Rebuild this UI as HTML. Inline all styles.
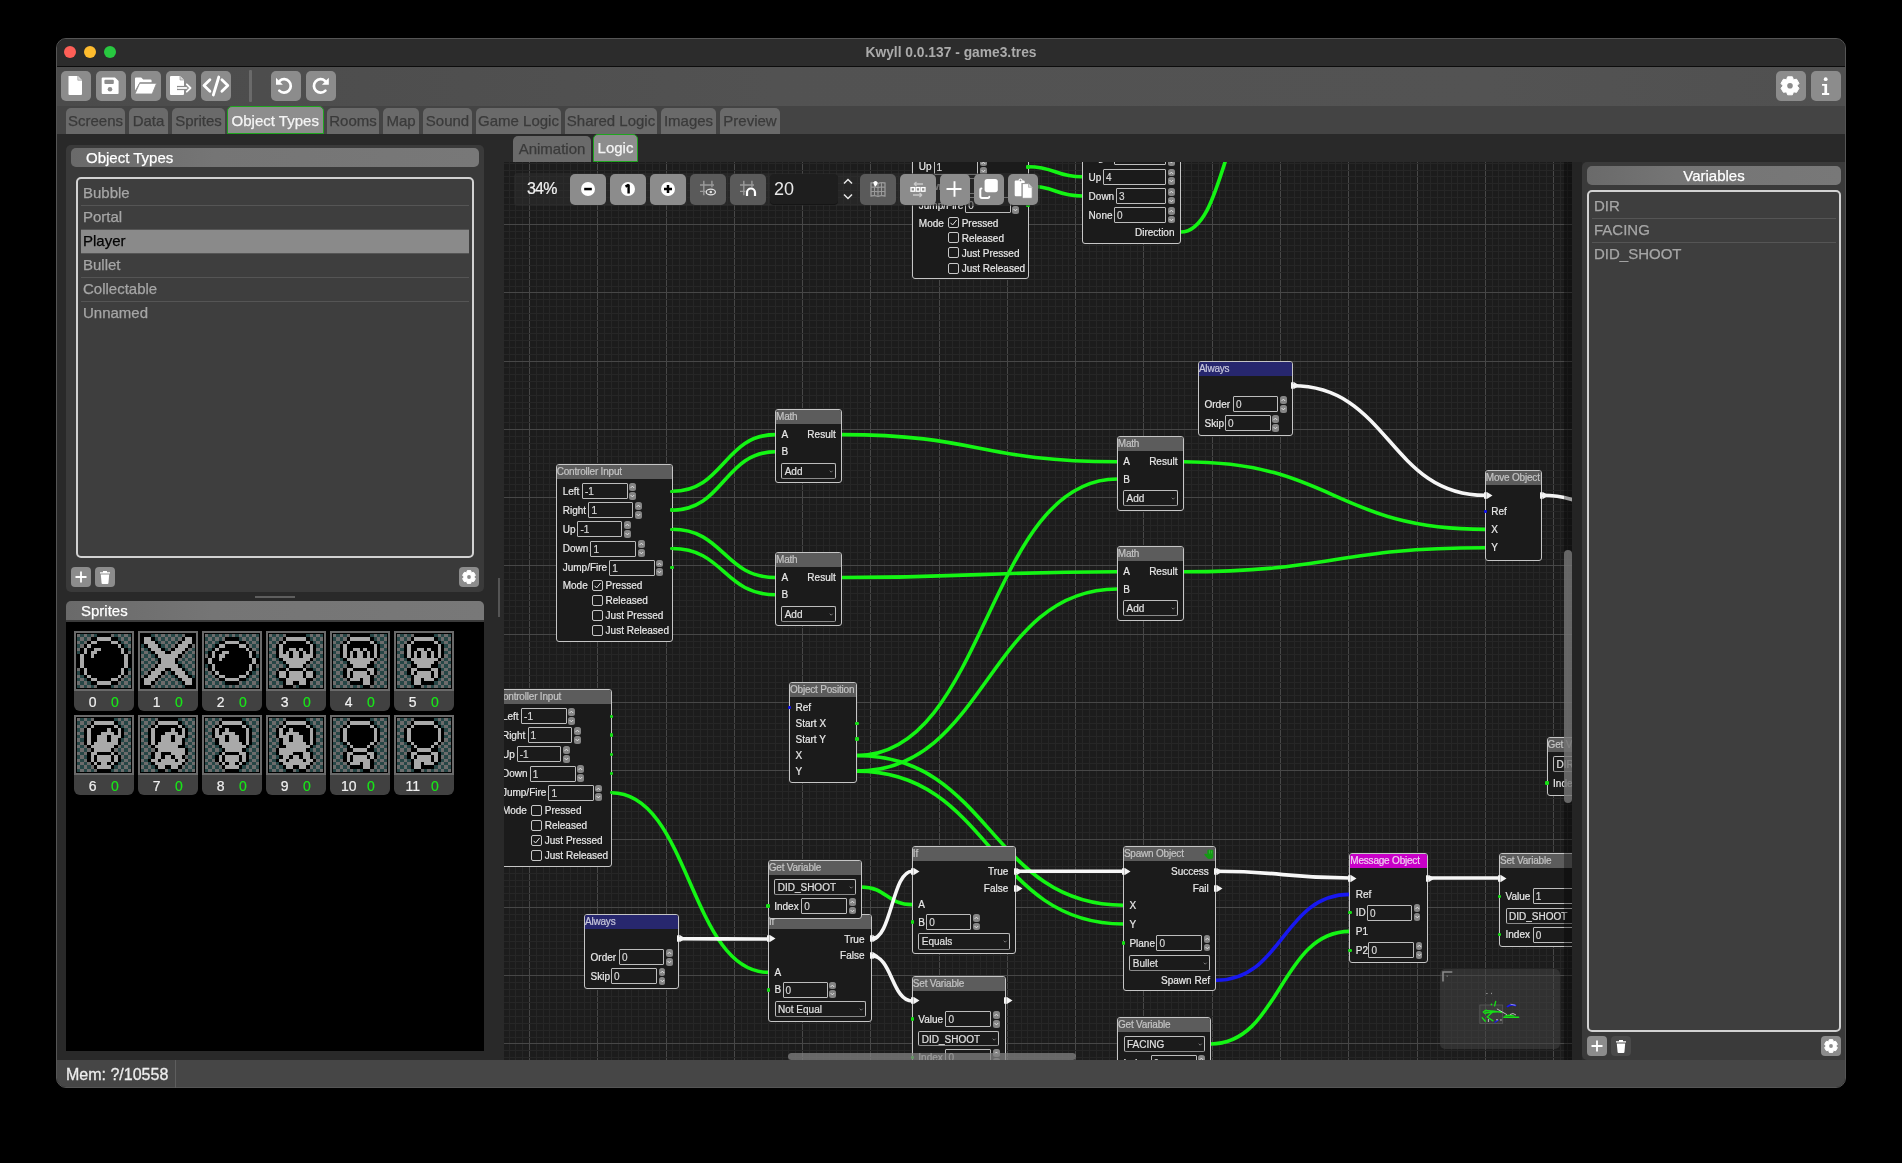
<!DOCTYPE html><html><head><meta charset="utf-8"><style>
*{box-sizing:border-box;margin:0;padding:0}
html,body{width:1902px;height:1163px;background:#000;overflow:hidden;font-family:"Liberation Sans",sans-serif}
.a{position:absolute}
.btn{position:absolute;background:#8b8b8b;border-radius:5px}
.tab{position:absolute;top:108px;height:26px;background:#6a6a6a;border-radius:5px 5px 0 0;color:#3a3a3a;font-size:15px;line-height:26px;text-align:center;white-space:nowrap;-webkit-text-stroke:0.25px currentColor}
.tab.sel{background:#8d8d8d;color:#f4f4f4;border:1px solid #1fa51f;line-height:24px}
.hdr{position:absolute;height:19px;border-radius:5px;background:linear-gradient(90deg,#6a6a6a,#757575 35%,#787878);color:#fff;font-size:15px;line-height:19px;white-space:nowrap;-webkit-text-stroke:0.25px currentColor}
.li{position:absolute;height:24px;font-size:15px;line-height:24px;color:#a6a6a6;white-space:nowrap;-webkit-text-stroke:0.25px currentColor}
.sep{position:absolute;height:1px;background:#555}
.node{position:absolute;background:#1b1b1b;border:1px solid #c6c6c6;border-radius:3px;font-size:10px;color:#e8e8e8;white-space:nowrap;-webkit-text-stroke:0.2px currentColor}
.tt{position:absolute;left:0;top:0;right:0;height:14px;background:#5c5c5c;color:#c4c4c4;line-height:13px;padding-left:0;border-radius:2px 2px 0 0;overflow:hidden;letter-spacing:-0.2px}
.lb{position:absolute;line-height:12px;height:12px}
.fld{position:absolute;border:1px solid #bdbdbd;border-radius:1px;background:#1b1b1b;line-height:15px;padding-left:2px;color:#d8d8d8}
.dd{position:absolute;border:1px solid #bdbdbd;border-bottom-color:#8a8a8a;border-radius:2px;background:#1b1b1b;line-height:15px;padding-left:2.5px;color:#e0e0e0}
.spu,.spd{position:absolute;width:6.8px;height:7.8px;background:#858585;border-radius:2.5px}
.cb{position:absolute;width:11px;height:11px;border:1px solid #c8c8c8;border-radius:2px}
.pd{position:absolute;width:3.6px;height:3.6px;border-radius:1.2px;background:#16e016}
</style></head><body><div id="root" class="a" style="left:0;top:0;width:1902px;height:1163px;will-change:transform">
<div class="a" style="left:56px;top:38px;width:1790px;height:1050px;border-radius:10px;background:#292929;border:1px solid #555"></div>
<div class="a" style="left:57px;top:39px;width:1788px;height:27px;border-radius:9px 9px 0 0;background:#2c2c2c"></div>
<div class="a" style="left:57px;top:66px;width:1788px;height:1px;background:#0c0c0c"></div>
<div class="a" style="left:64px;top:46px;width:12px;height:12px;border-radius:6px;background:#fe5f57"></div>
<div class="a" style="left:84px;top:46px;width:12px;height:12px;border-radius:6px;background:#febc2e"></div>
<div class="a" style="left:104px;top:46px;width:12px;height:12px;border-radius:6px;background:#28c840"></div>
<div class="a" style="left:765px;top:44px;width:372px;text-align:center;font-size:13.8px;font-weight:bold;color:#ababab;line-height:17px">Kwyll 0.0.137 - game3.tres</div>
<div class="a" style="left:57px;top:67px;width:1788px;height:39px;background:linear-gradient(90deg,#4b4b4b,#525252 40%,#535353 80%,#505050)"></div>
<div class="a" style="left:57px;top:106px;width:1788px;height:28px;background:#444"></div>
<div class="a" style="left:57px;top:1060px;width:1788px;height:27px;background:#464646;border-radius:0 0 9px 9px"></div>
<div class="a" style="left:66px;top:1061px;height:27px;line-height:27px;font-size:16px;color:#ececec;-webkit-text-stroke:0.3px #ececec">Mem: ?/10558</div>
<div class="a" style="left:175px;top:1060px;width:1px;height:28px;background:#5e5e5e"></div>
<div class="a" style="left:61px;top:71px;width:30px;height:30px;background:#8c8c8c;border-radius:5px"><svg width="30" height="30" style="position:absolute;left:0;top:0"><path d="M7.5 5 H16.8 L21 9.2 V23 Q21 24 20 24 H8.5 Q7.5 24 7.5 23 Z" fill="#fff"/><path d="M16.8 5 V9.2 H21" fill="#d8d8d8" stroke="#9a9a9a" stroke-width="0.7"/></svg></div>
<div class="a" style="left:96px;top:71px;width:30px;height:30px;background:#8c8c8c;border-radius:5px"><svg width="30" height="30" style="position:absolute;left:0;top:0"><path d="M5.7 7.5 Q5.7 6.5 6.7 6.5 H19 L22.6 10.1 V22 Q22.6 23 21.6 23 H6.7 Q5.7 23 5.7 22 Z" fill="#fff"/><rect x="8.4" y="8.8" width="9.4" height="4.3" rx="1" fill="#8c8c8c"/><circle cx="14" cy="18.3" r="2.3" fill="#8c8c8c"/></svg></div>
<div class="a" style="left:131px;top:71px;width:30px;height:30px;background:#8c8c8c;border-radius:5px"><svg width="30" height="30" style="position:absolute;left:0;top:0"><path d="M4 7.6 Q4 6.5 5 6.5 H10.2 L12.2 8.5 H19.5 Q20.6 8.5 20.6 9.6 V11.2 H8.8 L4 19.5 Z" fill="#fff"/><path d="M8.6 12.3 H25.6 L21.2 23 H3.9 Z" fill="#fff" stroke="#8c8c8c" stroke-width="0.9" stroke-linejoin="round"/></svg></div>
<div class="a" style="left:166px;top:71px;width:30px;height:30px;background:#8c8c8c;border-radius:5px"><svg width="30" height="30" style="position:absolute;left:0;top:0"><path d="M4 6 Q4 5 5 5 H14 L18 9 V23 Q18 24 17 24 H5 Q4 24 4 23 Z" fill="#fff"/><path d="M14 5 V9 H18" fill="#d8d8d8" stroke="#9a9a9a" stroke-width="0.7"/><path d="M11 17 H24.5" stroke="#8c8c8c" stroke-width="4.2"/><path d="M11.2 17 H24" stroke="#fff" stroke-width="1.8"/><path d="M20.8 13.3 L24.5 17 L20.8 20.7" stroke="#8c8c8c" stroke-width="4" fill="none"/><path d="M20.8 13.3 L24.5 17 L20.8 20.7" stroke="#fff" stroke-width="1.8" fill="none" stroke-linecap="round" stroke-linejoin="round"/></svg></div>
<div class="a" style="left:201px;top:71px;width:30px;height:30px;background:#8c8c8c;border-radius:5px"><svg width="30" height="30" style="position:absolute;left:0;top:0"><path d="M8.9 8.8 L3 14.5 L8.9 20.2 M20.9 8.8 L26.8 14.5 L20.9 20.2 M17.8 6 L12.3 24" stroke="#fff" stroke-width="2.8" fill="none" stroke-linecap="round" stroke-linejoin="round"/></svg></div>
<div class="a" style="left:249px;top:70px;width:3px;height:32px;background:#6a6a6a;border-radius:1px"></div>
<div class="a" style="left:271px;top:71px;width:30px;height:30px;background:#8c8c8c;border-radius:5px"><svg width="30" height="30" style="position:absolute;left:0;top:0"><path d="M8.3 19.6 A6.7 6.7 0 1 0 8.6 9.9" stroke="#fff" stroke-width="2.7" fill="none" stroke-linecap="round"/><path d="M5 6.8 V13.7 H11.9 Z" fill="#fff"/></svg></div>
<div class="a" style="left:306px;top:71px;width:30px;height:30px;background:#8c8c8c;border-radius:5px"><svg width="30" height="30" style="position:absolute;left:0;top:0"><path d="M19.4 19.6 A6.7 6.7 0 1 1 19.1 9.9" stroke="#fff" stroke-width="2.7" fill="none" stroke-linecap="round"/><path d="M22.8 6.8 V13.7 H15.9 Z" fill="#fff"/></svg></div>
<div class="a" style="left:1776px;top:71px;width:30px;height:30px;background:#8c8c8c;border-radius:5px"><svg width="30" height="30" style="position:absolute;left:0;top:0"><path d="M10.66 8.42 L11.61 5.81 L16.39 5.81 L17.34 8.42 L17.85 8.72 L20.59 8.23 L22.98 12.38 L21.19 14.51 L21.19 15.09 L22.98 17.22 L20.59 21.37 L17.85 20.88 L17.34 21.18 L16.39 23.79 L11.61 23.79 L10.66 21.18 L10.15 20.88 L7.41 21.37 L5.02 17.22 L6.81 15.09 L6.81 14.51 L5.02 12.38 L7.41 8.23 L10.15 8.72 Z" fill="#fff" stroke="#fff" stroke-width="1" stroke-linejoin="round"/><circle cx="14" cy="14.8" r="2.8" fill="#8c8c8c"/></svg></div>
<div class="a" style="left:1811px;top:71px;width:30px;height:30px;background:#8c8c8c;border-radius:5px"><svg width="30" height="30" style="position:absolute;left:0;top:0"><circle cx="14.7" cy="8.2" r="1.9" fill="#fff"/><path d="M11 12.9 H16.1 V22 H18.2 V24 H11 V22 H13.4 V14.8 H11 Z" fill="#fff"/></svg></div>
<div class="tab" style="left:66px;width:59px">Screens</div>
<div class="tab" style="left:129px;width:39px">Data</div>
<div class="tab" style="left:172px;width:53px">Sprites</div>
<div class="tab sel" style="left:226.5px;width:97.5px;top:106px;height:28px;line-height:27px">Object Types</div>
<div class="tab" style="left:327px;width:52px">Rooms</div>
<div class="tab" style="left:383px;width:36px">Map</div>
<div class="tab" style="left:423px;width:49px">Sound</div>
<div class="tab" style="left:476px;width:85px">Game Logic</div>
<div class="tab" style="left:565px;width:92px">Shared Logic</div>
<div class="tab" style="left:661px;width:55px">Images</div>
<div class="tab" style="left:720px;width:60px">Preview</div>
<div class="tab" style="left:513px;top:136px;width:78px">Animation</div>
<div class="tab sel" style="left:593px;top:134px;width:45px;height:28px;line-height:26px">Logic</div>
<div class="a" style="left:66px;top:145px;width:418px;height:447px;background:#3a3a3a;border-radius:5px"></div>
<div class="hdr" style="left:71px;top:148px;width:408px;padding-left:15px">Object Types</div>
<div class="a" style="left:76px;top:177px;width:398px;height:381px;border:2px solid #d2d2d2;border-radius:5px;background:#3e3e3e"></div>
<div class="li" style="left:83px;top:181px">Bubble</div>
<div class="sep" style="left:81px;top:205px;width:388px"></div>
<div class="li" style="left:83px;top:205px">Portal</div>
<div class="sep" style="left:81px;top:229px;width:388px"></div>
<div class="a" style="left:81px;top:230px;width:388px;height:23px;background:#8a8a8a"></div>
<div class="li" style="left:83px;top:229px;color:#050505">Player</div>
<div class="sep" style="left:81px;top:253px;width:388px"></div>
<div class="li" style="left:83px;top:253px">Bullet</div>
<div class="sep" style="left:81px;top:277px;width:388px"></div>
<div class="li" style="left:83px;top:277px">Collectable</div>
<div class="sep" style="left:81px;top:301px;width:388px"></div>
<div class="li" style="left:83px;top:301px">Unnamed</div>
<div class="a" style="left:71px;top:567px;width:20px;height:20px;background:#8c8c8c;border-radius:4px"><svg width="20" height="20" style="position:absolute;left:0;top:0"><path d="M10 4.5 V15.5 M4.5 10 H15.5" stroke="#fff" stroke-width="1.8"/></svg></div>
<div class="a" style="left:95px;top:567px;width:20px;height:20px;background:#8c8c8c;border-radius:4px"><svg width="20" height="20" style="position:absolute;left:0;top:0"><path d="M5 5.2 H15 V6.6 H5 Z M8 4 H12 V5.2 H8 Z" fill="#fff"/><path d="M5.8 7.4 H14.2 L13.4 16.2 Q13.3 17 12.5 17 H7.5 Q6.7 17 6.6 16.2 Z" fill="#fff"/></svg></div>
<div class="a" style="left:459px;top:567px;width:20px;height:20px;background:#8c8c8c;border-radius:4px"><svg width="20" height="20" style="position:absolute;left:0;top:0"><path d="M7.63 5.48 L8.30 3.62 L11.70 3.62 L12.37 5.48 L12.73 5.69 L14.67 5.34 L16.37 8.28 L15.10 9.79 L15.10 10.21 L16.37 11.72 L14.67 14.66 L12.73 14.31 L12.37 14.52 L11.70 16.38 L8.30 16.38 L7.63 14.52 L7.27 14.31 L5.33 14.66 L3.63 11.72 L4.90 10.21 L4.90 9.79 L3.63 8.28 L5.33 5.34 L7.27 5.69 Z" fill="#fff" stroke="#fff" stroke-width="1" stroke-linejoin="round"/><circle cx="10" cy="10" r="1.9" fill="#8c8c8c"/></svg></div>
<div class="a" style="left:255px;top:596px;width:40px;height:2px;background:#5e5e5e"></div>
<div class="a" style="left:498px;top:578px;width:2px;height:39px;background:#555"></div>
<div class="hdr" style="left:66px;top:601px;width:418px;padding-left:15px;border-radius:5px 5px 0 0">Sprites</div>
<div class="a" style="left:66px;top:620px;width:418px;height:2px;background:#3a3a3a"></div>
<div class="a" style="left:66px;top:622px;width:418px;height:429px;background:#000"></div>
<div class="a" style="left:74px;top:631px;width:60px;height:60px;background:#6a6a6a"><div class="a" style="left:2px;top:2px;width:56px;height:56px;background:#000"></div><svg width="54" height="54" shape-rendering="crispEdges" style="position:absolute;left:3px;top:3px"><rect x="0" y="0" width="3" height="3" fill="#6c6c6c"/><rect x="3" y="0" width="4" height="3" fill="#264646"/><rect x="7" y="0" width="3" height="3" fill="#6c6c6c"/><rect x="10" y="0" width="4" height="3" fill="#264646"/><rect x="14" y="0" width="3" height="3" fill="#6c6c6c"/><rect x="17" y="0" width="3" height="3" fill="#264646"/><rect x="20" y="0" width="14" height="3" fill="#000"/><rect x="34" y="0" width="3" height="3" fill="#6c6c6c"/><rect x="37" y="0" width="4" height="3" fill="#264646"/><rect x="41" y="0" width="3" height="3" fill="#6c6c6c"/><rect x="44" y="0" width="3" height="3" fill="#264646"/><rect x="47" y="0" width="4" height="3" fill="#6c6c6c"/><rect x="51" y="0" width="3" height="3" fill="#264646"/><rect x="0" y="3" width="3" height="4" fill="#264646"/><rect x="3" y="3" width="4" height="4" fill="#6c6c6c"/><rect x="7" y="3" width="3" height="4" fill="#264646"/><rect x="10" y="3" width="4" height="4" fill="#6c6c6c"/><rect x="14" y="3" width="6" height="4" fill="#000"/><rect x="20" y="3" width="14" height="4" fill="#a9a9a9"/><rect x="34" y="3" width="7" height="4" fill="#000"/><rect x="41" y="3" width="3" height="4" fill="#264646"/><rect x="44" y="3" width="3" height="4" fill="#6c6c6c"/><rect x="47" y="3" width="4" height="4" fill="#264646"/><rect x="51" y="3" width="3" height="4" fill="#6c6c6c"/><rect x="0" y="7" width="3" height="3" fill="#6c6c6c"/><rect x="3" y="7" width="4" height="3" fill="#264646"/><rect x="7" y="7" width="3" height="3" fill="#6c6c6c"/><rect x="10" y="7" width="4" height="3" fill="#000"/><rect x="14" y="7" width="6" height="3" fill="#a9a9a9"/><rect x="20" y="7" width="14" height="3" fill="#000"/><rect x="34" y="7" width="7" height="3" fill="#a9a9a9"/><rect x="41" y="7" width="3" height="3" fill="#000"/><rect x="44" y="7" width="3" height="3" fill="#264646"/><rect x="47" y="7" width="4" height="3" fill="#6c6c6c"/><rect x="51" y="7" width="3" height="3" fill="#264646"/><rect x="0" y="10" width="3" height="4" fill="#264646"/><rect x="3" y="10" width="4" height="4" fill="#6c6c6c"/><rect x="7" y="10" width="3" height="4" fill="#000"/><rect x="10" y="10" width="4" height="4" fill="#a9a9a9"/><rect x="14" y="10" width="27" height="4" fill="#000"/><rect x="41" y="10" width="3" height="4" fill="#a9a9a9"/><rect x="44" y="10" width="3" height="4" fill="#000"/><rect x="47" y="10" width="4" height="4" fill="#264646"/><rect x="51" y="10" width="3" height="4" fill="#6c6c6c"/><rect x="0" y="14" width="3" height="3" fill="#6c6c6c"/><rect x="3" y="14" width="4" height="3" fill="#000"/><rect x="7" y="14" width="3" height="3" fill="#a9a9a9"/><rect x="10" y="14" width="7" height="3" fill="#000"/><rect x="17" y="14" width="7" height="3" fill="#a9a9a9"/><rect x="24" y="14" width="20" height="3" fill="#000"/><rect x="44" y="14" width="3" height="3" fill="#a9a9a9"/><rect x="47" y="14" width="4" height="3" fill="#000"/><rect x="51" y="14" width="3" height="3" fill="#264646"/><rect x="0" y="17" width="3" height="3" fill="#264646"/><rect x="3" y="17" width="4" height="3" fill="#000"/><rect x="7" y="17" width="3" height="3" fill="#a9a9a9"/><rect x="10" y="17" width="4" height="3" fill="#000"/><rect x="14" y="17" width="6" height="3" fill="#a9a9a9"/><rect x="20" y="17" width="24" height="3" fill="#000"/><rect x="44" y="17" width="3" height="3" fill="#a9a9a9"/><rect x="47" y="17" width="4" height="3" fill="#000"/><rect x="51" y="17" width="3" height="3" fill="#6c6c6c"/><rect x="0" y="20" width="3" height="4" fill="#000"/><rect x="3" y="20" width="4" height="4" fill="#a9a9a9"/><rect x="7" y="20" width="7" height="4" fill="#000"/><rect x="14" y="20" width="3" height="4" fill="#a9a9a9"/><rect x="17" y="20" width="30" height="4" fill="#000"/><rect x="47" y="20" width="4" height="4" fill="#a9a9a9"/><rect x="51" y="20" width="3" height="4" fill="#000"/><rect x="0" y="24" width="3" height="3" fill="#000"/><rect x="3" y="24" width="4" height="3" fill="#a9a9a9"/><rect x="7" y="24" width="40" height="3" fill="#000"/><rect x="47" y="24" width="4" height="3" fill="#a9a9a9"/><rect x="51" y="24" width="3" height="3" fill="#000"/><rect x="0" y="27" width="3" height="3" fill="#000"/><rect x="3" y="27" width="4" height="3" fill="#a9a9a9"/><rect x="7" y="27" width="40" height="3" fill="#000"/><rect x="47" y="27" width="4" height="3" fill="#a9a9a9"/><rect x="51" y="27" width="3" height="3" fill="#000"/><rect x="0" y="30" width="3" height="4" fill="#000"/><rect x="3" y="30" width="4" height="4" fill="#a9a9a9"/><rect x="7" y="30" width="40" height="4" fill="#000"/><rect x="47" y="30" width="4" height="4" fill="#a9a9a9"/><rect x="51" y="30" width="3" height="4" fill="#000"/><rect x="0" y="34" width="3" height="3" fill="#6c6c6c"/><rect x="3" y="34" width="4" height="3" fill="#000"/><rect x="7" y="34" width="3" height="3" fill="#a9a9a9"/><rect x="10" y="34" width="34" height="3" fill="#000"/><rect x="44" y="34" width="3" height="3" fill="#a9a9a9"/><rect x="47" y="34" width="4" height="3" fill="#000"/><rect x="51" y="34" width="3" height="3" fill="#264646"/><rect x="0" y="37" width="3" height="4" fill="#264646"/><rect x="3" y="37" width="4" height="4" fill="#000"/><rect x="7" y="37" width="3" height="4" fill="#a9a9a9"/><rect x="10" y="37" width="34" height="4" fill="#000"/><rect x="44" y="37" width="3" height="4" fill="#a9a9a9"/><rect x="47" y="37" width="4" height="4" fill="#000"/><rect x="51" y="37" width="3" height="4" fill="#6c6c6c"/><rect x="0" y="41" width="3" height="3" fill="#6c6c6c"/><rect x="3" y="41" width="4" height="3" fill="#264646"/><rect x="7" y="41" width="3" height="3" fill="#000"/><rect x="10" y="41" width="4" height="3" fill="#a9a9a9"/><rect x="14" y="41" width="27" height="3" fill="#000"/><rect x="41" y="41" width="3" height="3" fill="#a9a9a9"/><rect x="44" y="41" width="3" height="3" fill="#000"/><rect x="47" y="41" width="4" height="3" fill="#6c6c6c"/><rect x="51" y="41" width="3" height="3" fill="#264646"/><rect x="0" y="44" width="3" height="3" fill="#264646"/><rect x="3" y="44" width="4" height="3" fill="#6c6c6c"/><rect x="7" y="44" width="3" height="3" fill="#264646"/><rect x="10" y="44" width="4" height="3" fill="#000"/><rect x="14" y="44" width="6" height="3" fill="#a9a9a9"/><rect x="20" y="44" width="14" height="3" fill="#000"/><rect x="34" y="44" width="7" height="3" fill="#a9a9a9"/><rect x="41" y="44" width="3" height="3" fill="#000"/><rect x="44" y="44" width="3" height="3" fill="#6c6c6c"/><rect x="47" y="44" width="4" height="3" fill="#264646"/><rect x="51" y="44" width="3" height="3" fill="#6c6c6c"/><rect x="0" y="47" width="3" height="4" fill="#6c6c6c"/><rect x="3" y="47" width="4" height="4" fill="#264646"/><rect x="7" y="47" width="3" height="4" fill="#6c6c6c"/><rect x="10" y="47" width="4" height="4" fill="#264646"/><rect x="14" y="47" width="6" height="4" fill="#000"/><rect x="20" y="47" width="14" height="4" fill="#a9a9a9"/><rect x="34" y="47" width="7" height="4" fill="#000"/><rect x="41" y="47" width="3" height="4" fill="#6c6c6c"/><rect x="44" y="47" width="3" height="4" fill="#264646"/><rect x="47" y="47" width="4" height="4" fill="#6c6c6c"/><rect x="51" y="47" width="3" height="4" fill="#264646"/><rect x="0" y="51" width="3" height="3" fill="#264646"/><rect x="3" y="51" width="4" height="3" fill="#6c6c6c"/><rect x="7" y="51" width="3" height="3" fill="#264646"/><rect x="10" y="51" width="4" height="3" fill="#6c6c6c"/><rect x="14" y="51" width="3" height="3" fill="#264646"/><rect x="17" y="51" width="3" height="3" fill="#6c6c6c"/><rect x="20" y="51" width="14" height="3" fill="#000"/><rect x="34" y="51" width="3" height="3" fill="#264646"/><rect x="37" y="51" width="4" height="3" fill="#6c6c6c"/><rect x="41" y="51" width="3" height="3" fill="#264646"/><rect x="44" y="51" width="3" height="3" fill="#6c6c6c"/><rect x="47" y="51" width="4" height="3" fill="#264646"/><rect x="51" y="51" width="3" height="3" fill="#6c6c6c"/></svg></div>
<div class="a" style="left:74px;top:691px;width:60px;height:20px;background:#414141;border-radius:0 0 6px 6px;font-size:14px;line-height:22px;white-space:nowrap;-webkit-text-stroke:0.2px currentColor"><span class="a" style="left:-1.3000000000000007px;width:40px;text-align:center;color:#f0f0f0">0</span><span class="a" style="left:20.799999999999997px;width:40px;text-align:center;color:#19e619">0</span></div>
<div class="a" style="left:138px;top:631px;width:60px;height:60px;background:#6a6a6a"><div class="a" style="left:2px;top:2px;width:56px;height:56px;background:#000"></div><svg width="54" height="54" shape-rendering="crispEdges" style="position:absolute;left:3px;top:3px"><rect x="0" y="0" width="10" height="3" fill="#000"/><rect x="10" y="0" width="4" height="3" fill="#264646"/><rect x="14" y="0" width="3" height="3" fill="#6c6c6c"/><rect x="17" y="0" width="3" height="3" fill="#264646"/><rect x="20" y="0" width="4" height="3" fill="#6c6c6c"/><rect x="24" y="0" width="3" height="3" fill="#264646"/><rect x="27" y="0" width="3" height="3" fill="#6c6c6c"/><rect x="30" y="0" width="4" height="3" fill="#264646"/><rect x="34" y="0" width="3" height="3" fill="#6c6c6c"/><rect x="37" y="0" width="4" height="3" fill="#264646"/><rect x="41" y="0" width="3" height="3" fill="#6c6c6c"/><rect x="44" y="0" width="10" height="3" fill="#000"/><rect x="0" y="3" width="3" height="4" fill="#000"/><rect x="3" y="3" width="7" height="4" fill="#a9a9a9"/><rect x="10" y="3" width="4" height="4" fill="#000"/><rect x="14" y="3" width="3" height="4" fill="#264646"/><rect x="17" y="3" width="3" height="4" fill="#6c6c6c"/><rect x="20" y="3" width="4" height="4" fill="#264646"/><rect x="24" y="3" width="3" height="4" fill="#6c6c6c"/><rect x="27" y="3" width="3" height="4" fill="#264646"/><rect x="30" y="3" width="4" height="4" fill="#6c6c6c"/><rect x="34" y="3" width="3" height="4" fill="#264646"/><rect x="37" y="3" width="4" height="4" fill="#6c6c6c"/><rect x="41" y="3" width="3" height="4" fill="#000"/><rect x="44" y="3" width="7" height="4" fill="#a9a9a9"/><rect x="51" y="3" width="3" height="4" fill="#000"/><rect x="0" y="7" width="3" height="3" fill="#000"/><rect x="3" y="7" width="11" height="3" fill="#a9a9a9"/><rect x="14" y="7" width="3" height="3" fill="#000"/><rect x="17" y="7" width="3" height="3" fill="#264646"/><rect x="20" y="7" width="4" height="3" fill="#6c6c6c"/><rect x="24" y="7" width="3" height="3" fill="#264646"/><rect x="27" y="7" width="3" height="3" fill="#6c6c6c"/><rect x="30" y="7" width="4" height="3" fill="#264646"/><rect x="34" y="7" width="3" height="3" fill="#6c6c6c"/><rect x="37" y="7" width="4" height="3" fill="#000"/><rect x="41" y="7" width="10" height="3" fill="#a9a9a9"/><rect x="51" y="7" width="3" height="3" fill="#000"/><rect x="0" y="10" width="3" height="4" fill="#264646"/><rect x="3" y="10" width="4" height="4" fill="#000"/><rect x="7" y="10" width="10" height="4" fill="#a9a9a9"/><rect x="17" y="10" width="3" height="4" fill="#000"/><rect x="20" y="10" width="4" height="4" fill="#264646"/><rect x="24" y="10" width="3" height="4" fill="#6c6c6c"/><rect x="27" y="10" width="3" height="4" fill="#264646"/><rect x="30" y="10" width="4" height="4" fill="#6c6c6c"/><rect x="34" y="10" width="3" height="4" fill="#000"/><rect x="37" y="10" width="10" height="4" fill="#a9a9a9"/><rect x="47" y="10" width="4" height="4" fill="#000"/><rect x="51" y="10" width="3" height="4" fill="#6c6c6c"/><rect x="0" y="14" width="3" height="3" fill="#6c6c6c"/><rect x="3" y="14" width="4" height="3" fill="#264646"/><rect x="7" y="14" width="3" height="3" fill="#000"/><rect x="10" y="14" width="10" height="3" fill="#a9a9a9"/><rect x="20" y="14" width="4" height="3" fill="#000"/><rect x="24" y="14" width="3" height="3" fill="#264646"/><rect x="27" y="14" width="3" height="3" fill="#6c6c6c"/><rect x="30" y="14" width="4" height="3" fill="#000"/><rect x="34" y="14" width="10" height="3" fill="#a9a9a9"/><rect x="44" y="14" width="3" height="3" fill="#000"/><rect x="47" y="14" width="4" height="3" fill="#6c6c6c"/><rect x="51" y="14" width="3" height="3" fill="#264646"/><rect x="0" y="17" width="3" height="3" fill="#264646"/><rect x="3" y="17" width="4" height="3" fill="#6c6c6c"/><rect x="7" y="17" width="3" height="3" fill="#264646"/><rect x="10" y="17" width="4" height="3" fill="#000"/><rect x="14" y="17" width="10" height="3" fill="#a9a9a9"/><rect x="24" y="17" width="6" height="3" fill="#000"/><rect x="30" y="17" width="11" height="3" fill="#a9a9a9"/><rect x="41" y="17" width="3" height="3" fill="#000"/><rect x="44" y="17" width="3" height="3" fill="#6c6c6c"/><rect x="47" y="17" width="4" height="3" fill="#264646"/><rect x="51" y="17" width="3" height="3" fill="#6c6c6c"/><rect x="0" y="20" width="3" height="4" fill="#6c6c6c"/><rect x="3" y="20" width="4" height="4" fill="#264646"/><rect x="7" y="20" width="3" height="4" fill="#6c6c6c"/><rect x="10" y="20" width="4" height="4" fill="#264646"/><rect x="14" y="20" width="3" height="4" fill="#000"/><rect x="17" y="20" width="20" height="4" fill="#a9a9a9"/><rect x="37" y="20" width="4" height="4" fill="#000"/><rect x="41" y="20" width="3" height="4" fill="#6c6c6c"/><rect x="44" y="20" width="3" height="4" fill="#264646"/><rect x="47" y="20" width="4" height="4" fill="#6c6c6c"/><rect x="51" y="20" width="3" height="4" fill="#264646"/><rect x="0" y="24" width="3" height="3" fill="#264646"/><rect x="3" y="24" width="4" height="3" fill="#6c6c6c"/><rect x="7" y="24" width="3" height="3" fill="#264646"/><rect x="10" y="24" width="4" height="3" fill="#6c6c6c"/><rect x="14" y="24" width="3" height="3" fill="#264646"/><rect x="17" y="24" width="3" height="3" fill="#000"/><rect x="20" y="24" width="14" height="3" fill="#a9a9a9"/><rect x="34" y="24" width="3" height="3" fill="#000"/><rect x="37" y="24" width="4" height="3" fill="#6c6c6c"/><rect x="41" y="24" width="3" height="3" fill="#264646"/><rect x="44" y="24" width="3" height="3" fill="#6c6c6c"/><rect x="47" y="24" width="4" height="3" fill="#264646"/><rect x="51" y="24" width="3" height="3" fill="#6c6c6c"/><rect x="0" y="27" width="3" height="3" fill="#6c6c6c"/><rect x="3" y="27" width="4" height="3" fill="#264646"/><rect x="7" y="27" width="3" height="3" fill="#6c6c6c"/><rect x="10" y="27" width="4" height="3" fill="#264646"/><rect x="14" y="27" width="3" height="3" fill="#6c6c6c"/><rect x="17" y="27" width="3" height="3" fill="#000"/><rect x="20" y="27" width="14" height="3" fill="#a9a9a9"/><rect x="34" y="27" width="3" height="3" fill="#000"/><rect x="37" y="27" width="4" height="3" fill="#264646"/><rect x="41" y="27" width="3" height="3" fill="#6c6c6c"/><rect x="44" y="27" width="3" height="3" fill="#264646"/><rect x="47" y="27" width="4" height="3" fill="#6c6c6c"/><rect x="51" y="27" width="3" height="3" fill="#264646"/><rect x="0" y="30" width="3" height="4" fill="#264646"/><rect x="3" y="30" width="4" height="4" fill="#6c6c6c"/><rect x="7" y="30" width="3" height="4" fill="#264646"/><rect x="10" y="30" width="4" height="4" fill="#6c6c6c"/><rect x="14" y="30" width="3" height="4" fill="#000"/><rect x="17" y="30" width="20" height="4" fill="#a9a9a9"/><rect x="37" y="30" width="4" height="4" fill="#000"/><rect x="41" y="30" width="3" height="4" fill="#264646"/><rect x="44" y="30" width="3" height="4" fill="#6c6c6c"/><rect x="47" y="30" width="4" height="4" fill="#264646"/><rect x="51" y="30" width="3" height="4" fill="#6c6c6c"/><rect x="0" y="34" width="3" height="3" fill="#6c6c6c"/><rect x="3" y="34" width="4" height="3" fill="#264646"/><rect x="7" y="34" width="3" height="3" fill="#6c6c6c"/><rect x="10" y="34" width="4" height="3" fill="#000"/><rect x="14" y="34" width="10" height="3" fill="#a9a9a9"/><rect x="24" y="34" width="6" height="3" fill="#000"/><rect x="30" y="34" width="11" height="3" fill="#a9a9a9"/><rect x="41" y="34" width="3" height="3" fill="#000"/><rect x="44" y="34" width="3" height="3" fill="#264646"/><rect x="47" y="34" width="4" height="3" fill="#6c6c6c"/><rect x="51" y="34" width="3" height="3" fill="#264646"/><rect x="0" y="37" width="3" height="4" fill="#264646"/><rect x="3" y="37" width="4" height="4" fill="#6c6c6c"/><rect x="7" y="37" width="3" height="4" fill="#000"/><rect x="10" y="37" width="10" height="4" fill="#a9a9a9"/><rect x="20" y="37" width="4" height="4" fill="#000"/><rect x="24" y="37" width="3" height="4" fill="#6c6c6c"/><rect x="27" y="37" width="3" height="4" fill="#264646"/><rect x="30" y="37" width="4" height="4" fill="#000"/><rect x="34" y="37" width="10" height="4" fill="#a9a9a9"/><rect x="44" y="37" width="3" height="4" fill="#000"/><rect x="47" y="37" width="4" height="4" fill="#264646"/><rect x="51" y="37" width="3" height="4" fill="#6c6c6c"/><rect x="0" y="41" width="3" height="3" fill="#6c6c6c"/><rect x="3" y="41" width="4" height="3" fill="#000"/><rect x="7" y="41" width="10" height="3" fill="#a9a9a9"/><rect x="17" y="41" width="3" height="3" fill="#000"/><rect x="20" y="41" width="4" height="3" fill="#6c6c6c"/><rect x="24" y="41" width="3" height="3" fill="#264646"/><rect x="27" y="41" width="3" height="3" fill="#6c6c6c"/><rect x="30" y="41" width="4" height="3" fill="#264646"/><rect x="34" y="41" width="3" height="3" fill="#000"/><rect x="37" y="41" width="10" height="3" fill="#a9a9a9"/><rect x="47" y="41" width="4" height="3" fill="#000"/><rect x="51" y="41" width="3" height="3" fill="#264646"/><rect x="0" y="44" width="3" height="3" fill="#000"/><rect x="3" y="44" width="11" height="3" fill="#a9a9a9"/><rect x="14" y="44" width="3" height="3" fill="#000"/><rect x="17" y="44" width="3" height="3" fill="#6c6c6c"/><rect x="20" y="44" width="4" height="3" fill="#264646"/><rect x="24" y="44" width="3" height="3" fill="#6c6c6c"/><rect x="27" y="44" width="3" height="3" fill="#264646"/><rect x="30" y="44" width="4" height="3" fill="#6c6c6c"/><rect x="34" y="44" width="3" height="3" fill="#264646"/><rect x="37" y="44" width="4" height="3" fill="#000"/><rect x="41" y="44" width="10" height="3" fill="#a9a9a9"/><rect x="51" y="44" width="3" height="3" fill="#000"/><rect x="0" y="47" width="3" height="4" fill="#000"/><rect x="3" y="47" width="7" height="4" fill="#a9a9a9"/><rect x="10" y="47" width="4" height="4" fill="#000"/><rect x="14" y="47" width="3" height="4" fill="#6c6c6c"/><rect x="17" y="47" width="3" height="4" fill="#264646"/><rect x="20" y="47" width="4" height="4" fill="#6c6c6c"/><rect x="24" y="47" width="3" height="4" fill="#264646"/><rect x="27" y="47" width="3" height="4" fill="#6c6c6c"/><rect x="30" y="47" width="4" height="4" fill="#264646"/><rect x="34" y="47" width="3" height="4" fill="#6c6c6c"/><rect x="37" y="47" width="4" height="4" fill="#264646"/><rect x="41" y="47" width="3" height="4" fill="#000"/><rect x="44" y="47" width="7" height="4" fill="#a9a9a9"/><rect x="51" y="47" width="3" height="4" fill="#000"/><rect x="0" y="51" width="10" height="3" fill="#000"/><rect x="10" y="51" width="4" height="3" fill="#6c6c6c"/><rect x="14" y="51" width="3" height="3" fill="#264646"/><rect x="17" y="51" width="3" height="3" fill="#6c6c6c"/><rect x="20" y="51" width="4" height="3" fill="#264646"/><rect x="24" y="51" width="3" height="3" fill="#6c6c6c"/><rect x="27" y="51" width="3" height="3" fill="#264646"/><rect x="30" y="51" width="4" height="3" fill="#6c6c6c"/><rect x="34" y="51" width="3" height="3" fill="#264646"/><rect x="37" y="51" width="4" height="3" fill="#6c6c6c"/><rect x="41" y="51" width="3" height="3" fill="#264646"/><rect x="44" y="51" width="10" height="3" fill="#000"/></svg></div>
<div class="a" style="left:138px;top:691px;width:60px;height:20px;background:#414141;border-radius:0 0 6px 6px;font-size:14px;line-height:22px;white-space:nowrap;-webkit-text-stroke:0.2px currentColor"><span class="a" style="left:-1.3000000000000007px;width:40px;text-align:center;color:#f0f0f0">1</span><span class="a" style="left:20.799999999999997px;width:40px;text-align:center;color:#19e619">0</span></div>
<div class="a" style="left:202px;top:631px;width:60px;height:60px;background:#6a6a6a"><div class="a" style="left:2px;top:2px;width:56px;height:56px;background:#000"></div><svg width="54" height="54" shape-rendering="crispEdges" style="position:absolute;left:3px;top:3px"><rect x="0" y="0" width="3" height="3" fill="#6c6c6c"/><rect x="3" y="0" width="4" height="3" fill="#264646"/><rect x="7" y="0" width="3" height="3" fill="#6c6c6c"/><rect x="10" y="0" width="4" height="3" fill="#264646"/><rect x="14" y="0" width="3" height="3" fill="#6c6c6c"/><rect x="17" y="0" width="3" height="3" fill="#264646"/><rect x="20" y="0" width="4" height="3" fill="#6c6c6c"/><rect x="24" y="0" width="3" height="3" fill="#264646"/><rect x="27" y="0" width="3" height="3" fill="#6c6c6c"/><rect x="30" y="0" width="4" height="3" fill="#264646"/><rect x="34" y="0" width="3" height="3" fill="#6c6c6c"/><rect x="37" y="0" width="4" height="3" fill="#264646"/><rect x="41" y="0" width="3" height="3" fill="#6c6c6c"/><rect x="44" y="0" width="3" height="3" fill="#264646"/><rect x="47" y="0" width="4" height="3" fill="#6c6c6c"/><rect x="51" y="0" width="3" height="3" fill="#264646"/><rect x="0" y="3" width="3" height="4" fill="#264646"/><rect x="3" y="3" width="4" height="4" fill="#6c6c6c"/><rect x="7" y="3" width="3" height="4" fill="#264646"/><rect x="10" y="3" width="4" height="4" fill="#6c6c6c"/><rect x="14" y="3" width="3" height="4" fill="#264646"/><rect x="17" y="3" width="3" height="4" fill="#6c6c6c"/><rect x="20" y="3" width="14" height="4" fill="#000"/><rect x="34" y="3" width="3" height="4" fill="#264646"/><rect x="37" y="3" width="4" height="4" fill="#6c6c6c"/><rect x="41" y="3" width="3" height="4" fill="#264646"/><rect x="44" y="3" width="3" height="4" fill="#6c6c6c"/><rect x="47" y="3" width="4" height="4" fill="#264646"/><rect x="51" y="3" width="3" height="4" fill="#6c6c6c"/><rect x="0" y="7" width="3" height="3" fill="#6c6c6c"/><rect x="3" y="7" width="4" height="3" fill="#264646"/><rect x="7" y="7" width="3" height="3" fill="#6c6c6c"/><rect x="10" y="7" width="4" height="3" fill="#264646"/><rect x="14" y="7" width="6" height="3" fill="#000"/><rect x="20" y="7" width="14" height="3" fill="#a9a9a9"/><rect x="34" y="7" width="7" height="3" fill="#000"/><rect x="41" y="7" width="3" height="3" fill="#6c6c6c"/><rect x="44" y="7" width="3" height="3" fill="#264646"/><rect x="47" y="7" width="4" height="3" fill="#6c6c6c"/><rect x="51" y="7" width="3" height="3" fill="#264646"/><rect x="0" y="10" width="3" height="4" fill="#264646"/><rect x="3" y="10" width="4" height="4" fill="#6c6c6c"/><rect x="7" y="10" width="3" height="4" fill="#264646"/><rect x="10" y="10" width="4" height="4" fill="#000"/><rect x="14" y="10" width="6" height="4" fill="#a9a9a9"/><rect x="20" y="10" width="14" height="4" fill="#000"/><rect x="34" y="10" width="7" height="4" fill="#a9a9a9"/><rect x="41" y="10" width="3" height="4" fill="#000"/><rect x="44" y="10" width="3" height="4" fill="#6c6c6c"/><rect x="47" y="10" width="4" height="4" fill="#264646"/><rect x="51" y="10" width="3" height="4" fill="#6c6c6c"/><rect x="0" y="14" width="3" height="3" fill="#6c6c6c"/><rect x="3" y="14" width="4" height="3" fill="#264646"/><rect x="7" y="14" width="3" height="3" fill="#000"/><rect x="10" y="14" width="4" height="3" fill="#a9a9a9"/><rect x="14" y="14" width="27" height="3" fill="#000"/><rect x="41" y="14" width="3" height="3" fill="#a9a9a9"/><rect x="44" y="14" width="3" height="3" fill="#000"/><rect x="47" y="14" width="4" height="3" fill="#6c6c6c"/><rect x="51" y="14" width="3" height="3" fill="#264646"/><rect x="0" y="17" width="3" height="3" fill="#264646"/><rect x="3" y="17" width="4" height="3" fill="#000"/><rect x="7" y="17" width="3" height="3" fill="#a9a9a9"/><rect x="10" y="17" width="7" height="3" fill="#000"/><rect x="17" y="17" width="7" height="3" fill="#a9a9a9"/><rect x="24" y="17" width="20" height="3" fill="#000"/><rect x="44" y="17" width="3" height="3" fill="#a9a9a9"/><rect x="47" y="17" width="4" height="3" fill="#000"/><rect x="51" y="17" width="3" height="3" fill="#6c6c6c"/><rect x="0" y="20" width="3" height="4" fill="#6c6c6c"/><rect x="3" y="20" width="4" height="4" fill="#000"/><rect x="7" y="20" width="3" height="4" fill="#a9a9a9"/><rect x="10" y="20" width="4" height="4" fill="#000"/><rect x="14" y="20" width="6" height="4" fill="#a9a9a9"/><rect x="20" y="20" width="24" height="4" fill="#000"/><rect x="44" y="20" width="3" height="4" fill="#a9a9a9"/><rect x="47" y="20" width="4" height="4" fill="#000"/><rect x="51" y="20" width="3" height="4" fill="#264646"/><rect x="0" y="24" width="3" height="3" fill="#000"/><rect x="3" y="24" width="4" height="3" fill="#a9a9a9"/><rect x="7" y="24" width="7" height="3" fill="#000"/><rect x="14" y="24" width="3" height="3" fill="#a9a9a9"/><rect x="17" y="24" width="30" height="3" fill="#000"/><rect x="47" y="24" width="4" height="3" fill="#a9a9a9"/><rect x="51" y="24" width="3" height="3" fill="#000"/><rect x="0" y="27" width="3" height="3" fill="#000"/><rect x="3" y="27" width="4" height="3" fill="#a9a9a9"/><rect x="7" y="27" width="40" height="3" fill="#000"/><rect x="47" y="27" width="4" height="3" fill="#a9a9a9"/><rect x="51" y="27" width="3" height="3" fill="#000"/><rect x="0" y="30" width="3" height="4" fill="#264646"/><rect x="3" y="30" width="4" height="4" fill="#000"/><rect x="7" y="30" width="3" height="4" fill="#a9a9a9"/><rect x="10" y="30" width="34" height="4" fill="#000"/><rect x="44" y="30" width="3" height="4" fill="#a9a9a9"/><rect x="47" y="30" width="4" height="4" fill="#000"/><rect x="51" y="30" width="3" height="4" fill="#6c6c6c"/><rect x="0" y="34" width="3" height="3" fill="#6c6c6c"/><rect x="3" y="34" width="4" height="3" fill="#000"/><rect x="7" y="34" width="3" height="3" fill="#a9a9a9"/><rect x="10" y="34" width="34" height="3" fill="#000"/><rect x="44" y="34" width="3" height="3" fill="#a9a9a9"/><rect x="47" y="34" width="4" height="3" fill="#000"/><rect x="51" y="34" width="3" height="3" fill="#264646"/><rect x="0" y="37" width="3" height="4" fill="#264646"/><rect x="3" y="37" width="4" height="4" fill="#6c6c6c"/><rect x="7" y="37" width="3" height="4" fill="#000"/><rect x="10" y="37" width="4" height="4" fill="#a9a9a9"/><rect x="14" y="37" width="27" height="4" fill="#000"/><rect x="41" y="37" width="3" height="4" fill="#a9a9a9"/><rect x="44" y="37" width="3" height="4" fill="#000"/><rect x="47" y="37" width="4" height="4" fill="#264646"/><rect x="51" y="37" width="3" height="4" fill="#6c6c6c"/><rect x="0" y="41" width="3" height="3" fill="#6c6c6c"/><rect x="3" y="41" width="4" height="3" fill="#264646"/><rect x="7" y="41" width="3" height="3" fill="#6c6c6c"/><rect x="10" y="41" width="4" height="3" fill="#000"/><rect x="14" y="41" width="6" height="3" fill="#a9a9a9"/><rect x="20" y="41" width="14" height="3" fill="#000"/><rect x="34" y="41" width="7" height="3" fill="#a9a9a9"/><rect x="41" y="41" width="3" height="3" fill="#000"/><rect x="44" y="41" width="3" height="3" fill="#264646"/><rect x="47" y="41" width="4" height="3" fill="#6c6c6c"/><rect x="51" y="41" width="3" height="3" fill="#264646"/><rect x="0" y="44" width="3" height="3" fill="#264646"/><rect x="3" y="44" width="4" height="3" fill="#6c6c6c"/><rect x="7" y="44" width="3" height="3" fill="#264646"/><rect x="10" y="44" width="4" height="3" fill="#6c6c6c"/><rect x="14" y="44" width="6" height="3" fill="#000"/><rect x="20" y="44" width="14" height="3" fill="#a9a9a9"/><rect x="34" y="44" width="7" height="3" fill="#000"/><rect x="41" y="44" width="3" height="3" fill="#264646"/><rect x="44" y="44" width="3" height="3" fill="#6c6c6c"/><rect x="47" y="44" width="4" height="3" fill="#264646"/><rect x="51" y="44" width="3" height="3" fill="#6c6c6c"/><rect x="0" y="47" width="3" height="4" fill="#6c6c6c"/><rect x="3" y="47" width="4" height="4" fill="#264646"/><rect x="7" y="47" width="3" height="4" fill="#6c6c6c"/><rect x="10" y="47" width="4" height="4" fill="#264646"/><rect x="14" y="47" width="3" height="4" fill="#6c6c6c"/><rect x="17" y="47" width="3" height="4" fill="#264646"/><rect x="20" y="47" width="14" height="4" fill="#000"/><rect x="34" y="47" width="3" height="4" fill="#6c6c6c"/><rect x="37" y="47" width="4" height="4" fill="#264646"/><rect x="41" y="47" width="3" height="4" fill="#6c6c6c"/><rect x="44" y="47" width="3" height="4" fill="#264646"/><rect x="47" y="47" width="4" height="4" fill="#6c6c6c"/><rect x="51" y="47" width="3" height="4" fill="#264646"/><rect x="0" y="51" width="3" height="3" fill="#264646"/><rect x="3" y="51" width="4" height="3" fill="#6c6c6c"/><rect x="7" y="51" width="3" height="3" fill="#264646"/><rect x="10" y="51" width="4" height="3" fill="#6c6c6c"/><rect x="14" y="51" width="3" height="3" fill="#264646"/><rect x="17" y="51" width="3" height="3" fill="#6c6c6c"/><rect x="20" y="51" width="4" height="3" fill="#264646"/><rect x="24" y="51" width="3" height="3" fill="#6c6c6c"/><rect x="27" y="51" width="3" height="3" fill="#264646"/><rect x="30" y="51" width="4" height="3" fill="#6c6c6c"/><rect x="34" y="51" width="3" height="3" fill="#264646"/><rect x="37" y="51" width="4" height="3" fill="#6c6c6c"/><rect x="41" y="51" width="3" height="3" fill="#264646"/><rect x="44" y="51" width="3" height="3" fill="#6c6c6c"/><rect x="47" y="51" width="4" height="3" fill="#264646"/><rect x="51" y="51" width="3" height="3" fill="#6c6c6c"/></svg></div>
<div class="a" style="left:202px;top:691px;width:60px;height:20px;background:#414141;border-radius:0 0 6px 6px;font-size:14px;line-height:22px;white-space:nowrap;-webkit-text-stroke:0.2px currentColor"><span class="a" style="left:-1.3000000000000007px;width:40px;text-align:center;color:#f0f0f0">2</span><span class="a" style="left:20.799999999999997px;width:40px;text-align:center;color:#19e619">0</span></div>
<div class="a" style="left:266px;top:631px;width:60px;height:60px;background:#6a6a6a"><div class="a" style="left:2px;top:2px;width:56px;height:56px;background:#000"></div><svg width="54" height="54" shape-rendering="crispEdges" style="position:absolute;left:3px;top:3px"><rect x="0" y="0" width="3" height="3" fill="#6c6c6c"/><rect x="3" y="0" width="4" height="3" fill="#264646"/><rect x="7" y="0" width="3" height="3" fill="#6c6c6c"/><rect x="10" y="0" width="4" height="3" fill="#264646"/><rect x="14" y="0" width="3" height="3" fill="#6c6c6c"/><rect x="17" y="0" width="20" height="3" fill="#000"/><rect x="37" y="0" width="4" height="3" fill="#264646"/><rect x="41" y="0" width="3" height="3" fill="#6c6c6c"/><rect x="44" y="0" width="3" height="3" fill="#264646"/><rect x="47" y="0" width="4" height="3" fill="#6c6c6c"/><rect x="51" y="0" width="3" height="3" fill="#264646"/><rect x="0" y="3" width="3" height="4" fill="#264646"/><rect x="3" y="3" width="4" height="4" fill="#6c6c6c"/><rect x="7" y="3" width="3" height="4" fill="#264646"/><rect x="10" y="3" width="4" height="4" fill="#6c6c6c"/><rect x="14" y="3" width="3" height="4" fill="#000"/><rect x="17" y="3" width="20" height="4" fill="#a9a9a9"/><rect x="37" y="3" width="4" height="4" fill="#000"/><rect x="41" y="3" width="3" height="4" fill="#264646"/><rect x="44" y="3" width="3" height="4" fill="#6c6c6c"/><rect x="47" y="3" width="4" height="4" fill="#264646"/><rect x="51" y="3" width="3" height="4" fill="#6c6c6c"/><rect x="0" y="7" width="3" height="3" fill="#6c6c6c"/><rect x="3" y="7" width="4" height="3" fill="#264646"/><rect x="7" y="7" width="3" height="3" fill="#6c6c6c"/><rect x="10" y="7" width="4" height="3" fill="#000"/><rect x="14" y="7" width="3" height="3" fill="#a9a9a9"/><rect x="17" y="7" width="20" height="3" fill="#000"/><rect x="37" y="7" width="4" height="3" fill="#a9a9a9"/><rect x="41" y="7" width="3" height="3" fill="#000"/><rect x="44" y="7" width="3" height="3" fill="#264646"/><rect x="47" y="7" width="4" height="3" fill="#6c6c6c"/><rect x="51" y="7" width="3" height="3" fill="#264646"/><rect x="0" y="10" width="3" height="4" fill="#264646"/><rect x="3" y="10" width="4" height="4" fill="#6c6c6c"/><rect x="7" y="10" width="3" height="4" fill="#000"/><rect x="10" y="10" width="4" height="4" fill="#a9a9a9"/><rect x="14" y="10" width="27" height="4" fill="#000"/><rect x="41" y="10" width="3" height="4" fill="#a9a9a9"/><rect x="44" y="10" width="3" height="4" fill="#000"/><rect x="47" y="10" width="4" height="4" fill="#264646"/><rect x="51" y="10" width="3" height="4" fill="#6c6c6c"/><rect x="0" y="14" width="3" height="3" fill="#6c6c6c"/><rect x="3" y="14" width="4" height="3" fill="#264646"/><rect x="7" y="14" width="3" height="3" fill="#000"/><rect x="10" y="14" width="4" height="3" fill="#a9a9a9"/><rect x="14" y="14" width="6" height="3" fill="#000"/><rect x="20" y="14" width="7" height="3" fill="#a9a9a9"/><rect x="27" y="14" width="3" height="3" fill="#000"/><rect x="30" y="14" width="4" height="3" fill="#a9a9a9"/><rect x="34" y="14" width="7" height="3" fill="#000"/><rect x="41" y="14" width="3" height="3" fill="#a9a9a9"/><rect x="44" y="14" width="3" height="3" fill="#000"/><rect x="47" y="14" width="4" height="3" fill="#6c6c6c"/><rect x="51" y="14" width="3" height="3" fill="#264646"/><rect x="0" y="17" width="3" height="3" fill="#264646"/><rect x="3" y="17" width="4" height="3" fill="#6c6c6c"/><rect x="7" y="17" width="3" height="3" fill="#000"/><rect x="10" y="17" width="4" height="3" fill="#a9a9a9"/><rect x="14" y="17" width="3" height="3" fill="#000"/><rect x="17" y="17" width="3" height="3" fill="#a9a9a9"/><rect x="20" y="17" width="4" height="3" fill="#000"/><rect x="24" y="17" width="6" height="3" fill="#a9a9a9"/><rect x="30" y="17" width="4" height="3" fill="#000"/><rect x="34" y="17" width="3" height="3" fill="#a9a9a9"/><rect x="37" y="17" width="4" height="3" fill="#000"/><rect x="41" y="17" width="3" height="3" fill="#a9a9a9"/><rect x="44" y="17" width="3" height="3" fill="#000"/><rect x="47" y="17" width="4" height="3" fill="#264646"/><rect x="51" y="17" width="3" height="3" fill="#6c6c6c"/><rect x="0" y="20" width="3" height="4" fill="#6c6c6c"/><rect x="3" y="20" width="4" height="4" fill="#264646"/><rect x="7" y="20" width="3" height="4" fill="#000"/><rect x="10" y="20" width="10" height="4" fill="#a9a9a9"/><rect x="20" y="20" width="4" height="4" fill="#000"/><rect x="24" y="20" width="6" height="4" fill="#a9a9a9"/><rect x="30" y="20" width="4" height="4" fill="#000"/><rect x="34" y="20" width="10" height="4" fill="#a9a9a9"/><rect x="44" y="20" width="3" height="4" fill="#000"/><rect x="47" y="20" width="4" height="4" fill="#6c6c6c"/><rect x="51" y="20" width="3" height="4" fill="#264646"/><rect x="0" y="24" width="3" height="3" fill="#264646"/><rect x="3" y="24" width="4" height="3" fill="#6c6c6c"/><rect x="7" y="24" width="3" height="3" fill="#264646"/><rect x="10" y="24" width="4" height="3" fill="#000"/><rect x="14" y="24" width="27" height="3" fill="#a9a9a9"/><rect x="41" y="24" width="3" height="3" fill="#000"/><rect x="44" y="24" width="3" height="3" fill="#6c6c6c"/><rect x="47" y="24" width="4" height="3" fill="#264646"/><rect x="51" y="24" width="3" height="3" fill="#6c6c6c"/><rect x="0" y="27" width="3" height="3" fill="#6c6c6c"/><rect x="3" y="27" width="4" height="3" fill="#264646"/><rect x="7" y="27" width="3" height="3" fill="#6c6c6c"/><rect x="10" y="27" width="4" height="3" fill="#264646"/><rect x="14" y="27" width="3" height="3" fill="#000"/><rect x="17" y="27" width="20" height="3" fill="#a9a9a9"/><rect x="37" y="27" width="4" height="3" fill="#000"/><rect x="41" y="27" width="3" height="3" fill="#6c6c6c"/><rect x="44" y="27" width="3" height="3" fill="#264646"/><rect x="47" y="27" width="4" height="3" fill="#6c6c6c"/><rect x="51" y="27" width="3" height="3" fill="#264646"/><rect x="0" y="30" width="3" height="4" fill="#264646"/><rect x="3" y="30" width="4" height="4" fill="#6c6c6c"/><rect x="7" y="30" width="3" height="4" fill="#264646"/><rect x="10" y="30" width="4" height="4" fill="#6c6c6c"/><rect x="14" y="30" width="3" height="4" fill="#264646"/><rect x="17" y="30" width="3" height="4" fill="#000"/><rect x="20" y="30" width="14" height="4" fill="#a9a9a9"/><rect x="34" y="30" width="3" height="4" fill="#000"/><rect x="37" y="30" width="4" height="4" fill="#6c6c6c"/><rect x="41" y="30" width="3" height="4" fill="#264646"/><rect x="44" y="30" width="3" height="4" fill="#6c6c6c"/><rect x="47" y="30" width="4" height="4" fill="#264646"/><rect x="51" y="30" width="3" height="4" fill="#6c6c6c"/><rect x="0" y="34" width="3" height="3" fill="#6c6c6c"/><rect x="3" y="34" width="4" height="3" fill="#264646"/><rect x="7" y="34" width="3" height="3" fill="#6c6c6c"/><rect x="10" y="34" width="7" height="3" fill="#000"/><rect x="17" y="34" width="3" height="3" fill="#a9a9a9"/><rect x="20" y="34" width="14" height="3" fill="#000"/><rect x="34" y="34" width="3" height="3" fill="#a9a9a9"/><rect x="37" y="34" width="7" height="3" fill="#000"/><rect x="44" y="34" width="3" height="3" fill="#264646"/><rect x="47" y="34" width="4" height="3" fill="#6c6c6c"/><rect x="51" y="34" width="3" height="3" fill="#264646"/><rect x="0" y="37" width="3" height="4" fill="#264646"/><rect x="3" y="37" width="4" height="4" fill="#6c6c6c"/><rect x="7" y="37" width="3" height="4" fill="#000"/><rect x="10" y="37" width="7" height="4" fill="#a9a9a9"/><rect x="17" y="37" width="3" height="4" fill="#000"/><rect x="20" y="37" width="14" height="4" fill="#a9a9a9"/><rect x="34" y="37" width="3" height="4" fill="#000"/><rect x="37" y="37" width="7" height="4" fill="#a9a9a9"/><rect x="44" y="37" width="3" height="4" fill="#000"/><rect x="47" y="37" width="4" height="4" fill="#264646"/><rect x="51" y="37" width="3" height="4" fill="#6c6c6c"/><rect x="0" y="41" width="3" height="3" fill="#6c6c6c"/><rect x="3" y="41" width="4" height="3" fill="#264646"/><rect x="7" y="41" width="3" height="3" fill="#000"/><rect x="10" y="41" width="7" height="3" fill="#a9a9a9"/><rect x="17" y="41" width="3" height="3" fill="#000"/><rect x="20" y="41" width="14" height="3" fill="#a9a9a9"/><rect x="34" y="41" width="3" height="3" fill="#000"/><rect x="37" y="41" width="7" height="3" fill="#a9a9a9"/><rect x="44" y="41" width="3" height="3" fill="#000"/><rect x="47" y="41" width="4" height="3" fill="#6c6c6c"/><rect x="51" y="41" width="3" height="3" fill="#264646"/><rect x="0" y="44" width="3" height="3" fill="#264646"/><rect x="3" y="44" width="4" height="3" fill="#6c6c6c"/><rect x="7" y="44" width="3" height="3" fill="#264646"/><rect x="10" y="44" width="7" height="3" fill="#000"/><rect x="17" y="44" width="20" height="3" fill="#a9a9a9"/><rect x="37" y="44" width="7" height="3" fill="#000"/><rect x="44" y="44" width="3" height="3" fill="#6c6c6c"/><rect x="47" y="44" width="4" height="3" fill="#264646"/><rect x="51" y="44" width="3" height="3" fill="#6c6c6c"/><rect x="0" y="47" width="3" height="4" fill="#6c6c6c"/><rect x="3" y="47" width="4" height="4" fill="#264646"/><rect x="7" y="47" width="3" height="4" fill="#6c6c6c"/><rect x="10" y="47" width="4" height="4" fill="#264646"/><rect x="14" y="47" width="3" height="4" fill="#000"/><rect x="17" y="47" width="7" height="4" fill="#a9a9a9"/><rect x="24" y="47" width="6" height="4" fill="#000"/><rect x="30" y="47" width="7" height="4" fill="#a9a9a9"/><rect x="37" y="47" width="4" height="4" fill="#000"/><rect x="41" y="47" width="3" height="4" fill="#6c6c6c"/><rect x="44" y="47" width="3" height="4" fill="#264646"/><rect x="47" y="47" width="4" height="4" fill="#6c6c6c"/><rect x="51" y="47" width="3" height="4" fill="#264646"/><rect x="0" y="51" width="3" height="3" fill="#264646"/><rect x="3" y="51" width="4" height="3" fill="#6c6c6c"/><rect x="7" y="51" width="3" height="3" fill="#264646"/><rect x="10" y="51" width="4" height="3" fill="#6c6c6c"/><rect x="14" y="51" width="10" height="3" fill="#000"/><rect x="24" y="51" width="3" height="3" fill="#6c6c6c"/><rect x="27" y="51" width="3" height="3" fill="#264646"/><rect x="30" y="51" width="11" height="3" fill="#000"/><rect x="41" y="51" width="3" height="3" fill="#264646"/><rect x="44" y="51" width="3" height="3" fill="#6c6c6c"/><rect x="47" y="51" width="4" height="3" fill="#264646"/><rect x="51" y="51" width="3" height="3" fill="#6c6c6c"/></svg></div>
<div class="a" style="left:266px;top:691px;width:60px;height:20px;background:#414141;border-radius:0 0 6px 6px;font-size:14px;line-height:22px;white-space:nowrap;-webkit-text-stroke:0.2px currentColor"><span class="a" style="left:-1.3000000000000007px;width:40px;text-align:center;color:#f0f0f0">3</span><span class="a" style="left:20.799999999999997px;width:40px;text-align:center;color:#19e619">0</span></div>
<div class="a" style="left:330px;top:631px;width:60px;height:60px;background:#6a6a6a"><div class="a" style="left:2px;top:2px;width:56px;height:56px;background:#000"></div><svg width="54" height="54" shape-rendering="crispEdges" style="position:absolute;left:3px;top:3px"><rect x="0" y="0" width="3" height="3" fill="#6c6c6c"/><rect x="3" y="0" width="4" height="3" fill="#264646"/><rect x="7" y="0" width="3" height="3" fill="#6c6c6c"/><rect x="10" y="0" width="4" height="3" fill="#264646"/><rect x="14" y="0" width="3" height="3" fill="#6c6c6c"/><rect x="17" y="0" width="20" height="3" fill="#000"/><rect x="37" y="0" width="4" height="3" fill="#264646"/><rect x="41" y="0" width="3" height="3" fill="#6c6c6c"/><rect x="44" y="0" width="3" height="3" fill="#264646"/><rect x="47" y="0" width="4" height="3" fill="#6c6c6c"/><rect x="51" y="0" width="3" height="3" fill="#264646"/><rect x="0" y="3" width="3" height="4" fill="#264646"/><rect x="3" y="3" width="4" height="4" fill="#6c6c6c"/><rect x="7" y="3" width="3" height="4" fill="#264646"/><rect x="10" y="3" width="4" height="4" fill="#6c6c6c"/><rect x="14" y="3" width="3" height="4" fill="#000"/><rect x="17" y="3" width="20" height="4" fill="#a9a9a9"/><rect x="37" y="3" width="4" height="4" fill="#000"/><rect x="41" y="3" width="3" height="4" fill="#264646"/><rect x="44" y="3" width="3" height="4" fill="#6c6c6c"/><rect x="47" y="3" width="4" height="4" fill="#264646"/><rect x="51" y="3" width="3" height="4" fill="#6c6c6c"/><rect x="0" y="7" width="3" height="3" fill="#6c6c6c"/><rect x="3" y="7" width="4" height="3" fill="#264646"/><rect x="7" y="7" width="3" height="3" fill="#6c6c6c"/><rect x="10" y="7" width="4" height="3" fill="#000"/><rect x="14" y="7" width="3" height="3" fill="#a9a9a9"/><rect x="17" y="7" width="20" height="3" fill="#000"/><rect x="37" y="7" width="4" height="3" fill="#a9a9a9"/><rect x="41" y="7" width="3" height="3" fill="#000"/><rect x="44" y="7" width="3" height="3" fill="#264646"/><rect x="47" y="7" width="4" height="3" fill="#6c6c6c"/><rect x="51" y="7" width="3" height="3" fill="#264646"/><rect x="0" y="10" width="3" height="4" fill="#264646"/><rect x="3" y="10" width="4" height="4" fill="#6c6c6c"/><rect x="7" y="10" width="3" height="4" fill="#000"/><rect x="10" y="10" width="4" height="4" fill="#a9a9a9"/><rect x="14" y="10" width="27" height="4" fill="#000"/><rect x="41" y="10" width="3" height="4" fill="#a9a9a9"/><rect x="44" y="10" width="3" height="4" fill="#000"/><rect x="47" y="10" width="4" height="4" fill="#264646"/><rect x="51" y="10" width="3" height="4" fill="#6c6c6c"/><rect x="0" y="14" width="3" height="3" fill="#6c6c6c"/><rect x="3" y="14" width="4" height="3" fill="#264646"/><rect x="7" y="14" width="3" height="3" fill="#000"/><rect x="10" y="14" width="4" height="3" fill="#a9a9a9"/><rect x="14" y="14" width="6" height="3" fill="#000"/><rect x="20" y="14" width="7" height="3" fill="#a9a9a9"/><rect x="27" y="14" width="3" height="3" fill="#000"/><rect x="30" y="14" width="4" height="3" fill="#a9a9a9"/><rect x="34" y="14" width="7" height="3" fill="#000"/><rect x="41" y="14" width="3" height="3" fill="#a9a9a9"/><rect x="44" y="14" width="3" height="3" fill="#000"/><rect x="47" y="14" width="4" height="3" fill="#6c6c6c"/><rect x="51" y="14" width="3" height="3" fill="#264646"/><rect x="0" y="17" width="3" height="3" fill="#264646"/><rect x="3" y="17" width="4" height="3" fill="#6c6c6c"/><rect x="7" y="17" width="3" height="3" fill="#000"/><rect x="10" y="17" width="4" height="3" fill="#a9a9a9"/><rect x="14" y="17" width="3" height="3" fill="#000"/><rect x="17" y="17" width="3" height="3" fill="#a9a9a9"/><rect x="20" y="17" width="4" height="3" fill="#000"/><rect x="24" y="17" width="6" height="3" fill="#a9a9a9"/><rect x="30" y="17" width="4" height="3" fill="#000"/><rect x="34" y="17" width="3" height="3" fill="#a9a9a9"/><rect x="37" y="17" width="4" height="3" fill="#000"/><rect x="41" y="17" width="3" height="3" fill="#a9a9a9"/><rect x="44" y="17" width="3" height="3" fill="#000"/><rect x="47" y="17" width="4" height="3" fill="#264646"/><rect x="51" y="17" width="3" height="3" fill="#6c6c6c"/><rect x="0" y="20" width="3" height="4" fill="#6c6c6c"/><rect x="3" y="20" width="4" height="4" fill="#264646"/><rect x="7" y="20" width="3" height="4" fill="#000"/><rect x="10" y="20" width="4" height="4" fill="#a9a9a9"/><rect x="14" y="20" width="3" height="4" fill="#000"/><rect x="17" y="20" width="3" height="4" fill="#a9a9a9"/><rect x="20" y="20" width="4" height="4" fill="#000"/><rect x="24" y="20" width="6" height="4" fill="#a9a9a9"/><rect x="30" y="20" width="4" height="4" fill="#000"/><rect x="34" y="20" width="3" height="4" fill="#a9a9a9"/><rect x="37" y="20" width="4" height="4" fill="#000"/><rect x="41" y="20" width="3" height="4" fill="#a9a9a9"/><rect x="44" y="20" width="3" height="4" fill="#000"/><rect x="47" y="20" width="4" height="4" fill="#6c6c6c"/><rect x="51" y="20" width="3" height="4" fill="#264646"/><rect x="0" y="24" width="3" height="3" fill="#264646"/><rect x="3" y="24" width="4" height="3" fill="#6c6c6c"/><rect x="7" y="24" width="3" height="3" fill="#264646"/><rect x="10" y="24" width="4" height="3" fill="#000"/><rect x="14" y="24" width="27" height="3" fill="#a9a9a9"/><rect x="41" y="24" width="3" height="3" fill="#000"/><rect x="44" y="24" width="3" height="3" fill="#6c6c6c"/><rect x="47" y="24" width="4" height="3" fill="#264646"/><rect x="51" y="24" width="3" height="3" fill="#6c6c6c"/><rect x="0" y="27" width="3" height="3" fill="#6c6c6c"/><rect x="3" y="27" width="4" height="3" fill="#264646"/><rect x="7" y="27" width="3" height="3" fill="#6c6c6c"/><rect x="10" y="27" width="4" height="3" fill="#264646"/><rect x="14" y="27" width="3" height="3" fill="#000"/><rect x="17" y="27" width="20" height="3" fill="#a9a9a9"/><rect x="37" y="27" width="4" height="3" fill="#000"/><rect x="41" y="27" width="3" height="3" fill="#6c6c6c"/><rect x="44" y="27" width="3" height="3" fill="#264646"/><rect x="47" y="27" width="4" height="3" fill="#6c6c6c"/><rect x="51" y="27" width="3" height="3" fill="#264646"/><rect x="0" y="30" width="3" height="4" fill="#264646"/><rect x="3" y="30" width="4" height="4" fill="#6c6c6c"/><rect x="7" y="30" width="3" height="4" fill="#264646"/><rect x="10" y="30" width="4" height="4" fill="#6c6c6c"/><rect x="14" y="30" width="6" height="4" fill="#000"/><rect x="20" y="30" width="14" height="4" fill="#a9a9a9"/><rect x="34" y="30" width="7" height="4" fill="#000"/><rect x="41" y="30" width="3" height="4" fill="#264646"/><rect x="44" y="30" width="3" height="4" fill="#6c6c6c"/><rect x="47" y="30" width="4" height="4" fill="#264646"/><rect x="51" y="30" width="3" height="4" fill="#6c6c6c"/><rect x="0" y="34" width="3" height="3" fill="#6c6c6c"/><rect x="3" y="34" width="4" height="3" fill="#264646"/><rect x="7" y="34" width="3" height="3" fill="#6c6c6c"/><rect x="10" y="34" width="4" height="3" fill="#000"/><rect x="14" y="34" width="6" height="3" fill="#a9a9a9"/><rect x="20" y="34" width="14" height="3" fill="#000"/><rect x="34" y="34" width="7" height="3" fill="#a9a9a9"/><rect x="41" y="34" width="3" height="3" fill="#000"/><rect x="44" y="34" width="3" height="3" fill="#264646"/><rect x="47" y="34" width="4" height="3" fill="#6c6c6c"/><rect x="51" y="34" width="3" height="3" fill="#264646"/><rect x="0" y="37" width="3" height="4" fill="#264646"/><rect x="3" y="37" width="4" height="4" fill="#6c6c6c"/><rect x="7" y="37" width="3" height="4" fill="#264646"/><rect x="10" y="37" width="4" height="4" fill="#000"/><rect x="14" y="37" width="3" height="4" fill="#a9a9a9"/><rect x="17" y="37" width="3" height="4" fill="#000"/><rect x="20" y="37" width="14" height="4" fill="#a9a9a9"/><rect x="34" y="37" width="3" height="4" fill="#000"/><rect x="37" y="37" width="4" height="4" fill="#a9a9a9"/><rect x="41" y="37" width="3" height="4" fill="#000"/><rect x="44" y="37" width="3" height="4" fill="#6c6c6c"/><rect x="47" y="37" width="4" height="4" fill="#264646"/><rect x="51" y="37" width="3" height="4" fill="#6c6c6c"/><rect x="0" y="41" width="3" height="3" fill="#6c6c6c"/><rect x="3" y="41" width="4" height="3" fill="#264646"/><rect x="7" y="41" width="3" height="3" fill="#6c6c6c"/><rect x="10" y="41" width="4" height="3" fill="#000"/><rect x="14" y="41" width="3" height="3" fill="#a9a9a9"/><rect x="17" y="41" width="3" height="3" fill="#000"/><rect x="20" y="41" width="17" height="3" fill="#a9a9a9"/><rect x="37" y="41" width="4" height="3" fill="#000"/><rect x="41" y="41" width="3" height="3" fill="#6c6c6c"/><rect x="44" y="41" width="3" height="3" fill="#264646"/><rect x="47" y="41" width="4" height="3" fill="#6c6c6c"/><rect x="51" y="41" width="3" height="3" fill="#264646"/><rect x="0" y="44" width="3" height="3" fill="#264646"/><rect x="3" y="44" width="4" height="3" fill="#6c6c6c"/><rect x="7" y="44" width="3" height="3" fill="#264646"/><rect x="10" y="44" width="4" height="3" fill="#6c6c6c"/><rect x="14" y="44" width="3" height="3" fill="#000"/><rect x="17" y="44" width="10" height="3" fill="#a9a9a9"/><rect x="27" y="44" width="3" height="3" fill="#000"/><rect x="30" y="44" width="7" height="3" fill="#a9a9a9"/><rect x="37" y="44" width="4" height="3" fill="#000"/><rect x="41" y="44" width="3" height="3" fill="#264646"/><rect x="44" y="44" width="3" height="3" fill="#6c6c6c"/><rect x="47" y="44" width="4" height="3" fill="#264646"/><rect x="51" y="44" width="3" height="3" fill="#6c6c6c"/><rect x="0" y="47" width="3" height="4" fill="#6c6c6c"/><rect x="3" y="47" width="4" height="4" fill="#264646"/><rect x="7" y="47" width="3" height="4" fill="#6c6c6c"/><rect x="10" y="47" width="4" height="4" fill="#264646"/><rect x="14" y="47" width="3" height="4" fill="#6c6c6c"/><rect x="17" y="47" width="13" height="4" fill="#000"/><rect x="30" y="47" width="7" height="4" fill="#a9a9a9"/><rect x="37" y="47" width="4" height="4" fill="#000"/><rect x="41" y="47" width="3" height="4" fill="#6c6c6c"/><rect x="44" y="47" width="3" height="4" fill="#264646"/><rect x="47" y="47" width="4" height="4" fill="#6c6c6c"/><rect x="51" y="47" width="3" height="4" fill="#264646"/><rect x="0" y="51" width="3" height="3" fill="#264646"/><rect x="3" y="51" width="4" height="3" fill="#6c6c6c"/><rect x="7" y="51" width="3" height="3" fill="#264646"/><rect x="10" y="51" width="4" height="3" fill="#6c6c6c"/><rect x="14" y="51" width="3" height="3" fill="#264646"/><rect x="17" y="51" width="3" height="3" fill="#6c6c6c"/><rect x="20" y="51" width="4" height="3" fill="#264646"/><rect x="24" y="51" width="3" height="3" fill="#6c6c6c"/><rect x="27" y="51" width="3" height="3" fill="#264646"/><rect x="30" y="51" width="7" height="3" fill="#000"/><rect x="37" y="51" width="4" height="3" fill="#6c6c6c"/><rect x="41" y="51" width="3" height="3" fill="#264646"/><rect x="44" y="51" width="3" height="3" fill="#6c6c6c"/><rect x="47" y="51" width="4" height="3" fill="#264646"/><rect x="51" y="51" width="3" height="3" fill="#6c6c6c"/></svg></div>
<div class="a" style="left:330px;top:691px;width:60px;height:20px;background:#414141;border-radius:0 0 6px 6px;font-size:14px;line-height:22px;white-space:nowrap;-webkit-text-stroke:0.2px currentColor"><span class="a" style="left:-1.3000000000000007px;width:40px;text-align:center;color:#f0f0f0">4</span><span class="a" style="left:20.799999999999997px;width:40px;text-align:center;color:#19e619">0</span></div>
<div class="a" style="left:394px;top:631px;width:60px;height:60px;background:#6a6a6a"><div class="a" style="left:2px;top:2px;width:56px;height:56px;background:#000"></div><svg width="54" height="54" shape-rendering="crispEdges" style="position:absolute;left:3px;top:3px"><rect x="0" y="0" width="3" height="3" fill="#6c6c6c"/><rect x="3" y="0" width="4" height="3" fill="#264646"/><rect x="7" y="0" width="3" height="3" fill="#6c6c6c"/><rect x="10" y="0" width="4" height="3" fill="#264646"/><rect x="14" y="0" width="3" height="3" fill="#6c6c6c"/><rect x="17" y="0" width="20" height="3" fill="#000"/><rect x="37" y="0" width="4" height="3" fill="#264646"/><rect x="41" y="0" width="3" height="3" fill="#6c6c6c"/><rect x="44" y="0" width="3" height="3" fill="#264646"/><rect x="47" y="0" width="4" height="3" fill="#6c6c6c"/><rect x="51" y="0" width="3" height="3" fill="#264646"/><rect x="0" y="3" width="3" height="4" fill="#264646"/><rect x="3" y="3" width="4" height="4" fill="#6c6c6c"/><rect x="7" y="3" width="3" height="4" fill="#264646"/><rect x="10" y="3" width="4" height="4" fill="#6c6c6c"/><rect x="14" y="3" width="3" height="4" fill="#000"/><rect x="17" y="3" width="20" height="4" fill="#a9a9a9"/><rect x="37" y="3" width="4" height="4" fill="#000"/><rect x="41" y="3" width="3" height="4" fill="#264646"/><rect x="44" y="3" width="3" height="4" fill="#6c6c6c"/><rect x="47" y="3" width="4" height="4" fill="#264646"/><rect x="51" y="3" width="3" height="4" fill="#6c6c6c"/><rect x="0" y="7" width="3" height="3" fill="#6c6c6c"/><rect x="3" y="7" width="4" height="3" fill="#264646"/><rect x="7" y="7" width="3" height="3" fill="#6c6c6c"/><rect x="10" y="7" width="4" height="3" fill="#000"/><rect x="14" y="7" width="3" height="3" fill="#a9a9a9"/><rect x="17" y="7" width="20" height="3" fill="#000"/><rect x="37" y="7" width="4" height="3" fill="#a9a9a9"/><rect x="41" y="7" width="3" height="3" fill="#000"/><rect x="44" y="7" width="3" height="3" fill="#264646"/><rect x="47" y="7" width="4" height="3" fill="#6c6c6c"/><rect x="51" y="7" width="3" height="3" fill="#264646"/><rect x="0" y="10" width="3" height="4" fill="#264646"/><rect x="3" y="10" width="4" height="4" fill="#6c6c6c"/><rect x="7" y="10" width="3" height="4" fill="#000"/><rect x="10" y="10" width="4" height="4" fill="#a9a9a9"/><rect x="14" y="10" width="27" height="4" fill="#000"/><rect x="41" y="10" width="3" height="4" fill="#a9a9a9"/><rect x="44" y="10" width="3" height="4" fill="#000"/><rect x="47" y="10" width="4" height="4" fill="#264646"/><rect x="51" y="10" width="3" height="4" fill="#6c6c6c"/><rect x="0" y="14" width="3" height="3" fill="#6c6c6c"/><rect x="3" y="14" width="4" height="3" fill="#264646"/><rect x="7" y="14" width="3" height="3" fill="#000"/><rect x="10" y="14" width="4" height="3" fill="#a9a9a9"/><rect x="14" y="14" width="6" height="3" fill="#000"/><rect x="20" y="14" width="7" height="3" fill="#a9a9a9"/><rect x="27" y="14" width="3" height="3" fill="#000"/><rect x="30" y="14" width="4" height="3" fill="#a9a9a9"/><rect x="34" y="14" width="7" height="3" fill="#000"/><rect x="41" y="14" width="3" height="3" fill="#a9a9a9"/><rect x="44" y="14" width="3" height="3" fill="#000"/><rect x="47" y="14" width="4" height="3" fill="#6c6c6c"/><rect x="51" y="14" width="3" height="3" fill="#264646"/><rect x="0" y="17" width="3" height="3" fill="#264646"/><rect x="3" y="17" width="4" height="3" fill="#6c6c6c"/><rect x="7" y="17" width="3" height="3" fill="#000"/><rect x="10" y="17" width="4" height="3" fill="#a9a9a9"/><rect x="14" y="17" width="3" height="3" fill="#000"/><rect x="17" y="17" width="3" height="3" fill="#a9a9a9"/><rect x="20" y="17" width="4" height="3" fill="#000"/><rect x="24" y="17" width="6" height="3" fill="#a9a9a9"/><rect x="30" y="17" width="4" height="3" fill="#000"/><rect x="34" y="17" width="3" height="3" fill="#a9a9a9"/><rect x="37" y="17" width="4" height="3" fill="#000"/><rect x="41" y="17" width="3" height="3" fill="#a9a9a9"/><rect x="44" y="17" width="3" height="3" fill="#000"/><rect x="47" y="17" width="4" height="3" fill="#264646"/><rect x="51" y="17" width="3" height="3" fill="#6c6c6c"/><rect x="0" y="20" width="3" height="4" fill="#6c6c6c"/><rect x="3" y="20" width="4" height="4" fill="#264646"/><rect x="7" y="20" width="3" height="4" fill="#000"/><rect x="10" y="20" width="4" height="4" fill="#a9a9a9"/><rect x="14" y="20" width="3" height="4" fill="#000"/><rect x="17" y="20" width="3" height="4" fill="#a9a9a9"/><rect x="20" y="20" width="4" height="4" fill="#000"/><rect x="24" y="20" width="6" height="4" fill="#a9a9a9"/><rect x="30" y="20" width="4" height="4" fill="#000"/><rect x="34" y="20" width="3" height="4" fill="#a9a9a9"/><rect x="37" y="20" width="4" height="4" fill="#000"/><rect x="41" y="20" width="3" height="4" fill="#a9a9a9"/><rect x="44" y="20" width="3" height="4" fill="#000"/><rect x="47" y="20" width="4" height="4" fill="#6c6c6c"/><rect x="51" y="20" width="3" height="4" fill="#264646"/><rect x="0" y="24" width="3" height="3" fill="#264646"/><rect x="3" y="24" width="4" height="3" fill="#6c6c6c"/><rect x="7" y="24" width="3" height="3" fill="#264646"/><rect x="10" y="24" width="4" height="3" fill="#000"/><rect x="14" y="24" width="27" height="3" fill="#a9a9a9"/><rect x="41" y="24" width="3" height="3" fill="#000"/><rect x="44" y="24" width="3" height="3" fill="#6c6c6c"/><rect x="47" y="24" width="4" height="3" fill="#264646"/><rect x="51" y="24" width="3" height="3" fill="#6c6c6c"/><rect x="0" y="27" width="3" height="3" fill="#6c6c6c"/><rect x="3" y="27" width="4" height="3" fill="#264646"/><rect x="7" y="27" width="3" height="3" fill="#6c6c6c"/><rect x="10" y="27" width="4" height="3" fill="#264646"/><rect x="14" y="27" width="3" height="3" fill="#000"/><rect x="17" y="27" width="20" height="3" fill="#a9a9a9"/><rect x="37" y="27" width="4" height="3" fill="#000"/><rect x="41" y="27" width="3" height="3" fill="#6c6c6c"/><rect x="44" y="27" width="3" height="3" fill="#264646"/><rect x="47" y="27" width="4" height="3" fill="#6c6c6c"/><rect x="51" y="27" width="3" height="3" fill="#264646"/><rect x="0" y="30" width="3" height="4" fill="#264646"/><rect x="3" y="30" width="4" height="4" fill="#6c6c6c"/><rect x="7" y="30" width="3" height="4" fill="#264646"/><rect x="10" y="30" width="4" height="4" fill="#6c6c6c"/><rect x="14" y="30" width="6" height="4" fill="#000"/><rect x="20" y="30" width="14" height="4" fill="#a9a9a9"/><rect x="34" y="30" width="7" height="4" fill="#000"/><rect x="41" y="30" width="3" height="4" fill="#264646"/><rect x="44" y="30" width="3" height="4" fill="#6c6c6c"/><rect x="47" y="30" width="4" height="4" fill="#264646"/><rect x="51" y="30" width="3" height="4" fill="#6c6c6c"/><rect x="0" y="34" width="3" height="3" fill="#6c6c6c"/><rect x="3" y="34" width="4" height="3" fill="#264646"/><rect x="7" y="34" width="3" height="3" fill="#6c6c6c"/><rect x="10" y="34" width="4" height="3" fill="#000"/><rect x="14" y="34" width="6" height="3" fill="#a9a9a9"/><rect x="20" y="34" width="14" height="3" fill="#000"/><rect x="34" y="34" width="7" height="3" fill="#a9a9a9"/><rect x="41" y="34" width="3" height="3" fill="#000"/><rect x="44" y="34" width="3" height="3" fill="#264646"/><rect x="47" y="34" width="4" height="3" fill="#6c6c6c"/><rect x="51" y="34" width="3" height="3" fill="#264646"/><rect x="0" y="37" width="3" height="4" fill="#264646"/><rect x="3" y="37" width="4" height="4" fill="#6c6c6c"/><rect x="7" y="37" width="3" height="4" fill="#264646"/><rect x="10" y="37" width="4" height="4" fill="#000"/><rect x="14" y="37" width="3" height="4" fill="#a9a9a9"/><rect x="17" y="37" width="3" height="4" fill="#000"/><rect x="20" y="37" width="14" height="4" fill="#a9a9a9"/><rect x="34" y="37" width="3" height="4" fill="#000"/><rect x="37" y="37" width="4" height="4" fill="#a9a9a9"/><rect x="41" y="37" width="3" height="4" fill="#000"/><rect x="44" y="37" width="3" height="4" fill="#6c6c6c"/><rect x="47" y="37" width="4" height="4" fill="#264646"/><rect x="51" y="37" width="3" height="4" fill="#6c6c6c"/><rect x="0" y="41" width="3" height="3" fill="#6c6c6c"/><rect x="3" y="41" width="4" height="3" fill="#264646"/><rect x="7" y="41" width="3" height="3" fill="#6c6c6c"/><rect x="10" y="41" width="4" height="3" fill="#264646"/><rect x="14" y="41" width="3" height="3" fill="#000"/><rect x="17" y="41" width="17" height="3" fill="#a9a9a9"/><rect x="34" y="41" width="3" height="3" fill="#000"/><rect x="37" y="41" width="4" height="3" fill="#a9a9a9"/><rect x="41" y="41" width="3" height="3" fill="#000"/><rect x="44" y="41" width="3" height="3" fill="#264646"/><rect x="47" y="41" width="4" height="3" fill="#6c6c6c"/><rect x="51" y="41" width="3" height="3" fill="#264646"/><rect x="0" y="44" width="3" height="3" fill="#264646"/><rect x="3" y="44" width="4" height="3" fill="#6c6c6c"/><rect x="7" y="44" width="3" height="3" fill="#264646"/><rect x="10" y="44" width="4" height="3" fill="#6c6c6c"/><rect x="14" y="44" width="3" height="3" fill="#000"/><rect x="17" y="44" width="7" height="3" fill="#a9a9a9"/><rect x="24" y="44" width="3" height="3" fill="#000"/><rect x="27" y="44" width="10" height="3" fill="#a9a9a9"/><rect x="37" y="44" width="4" height="3" fill="#000"/><rect x="41" y="44" width="3" height="3" fill="#264646"/><rect x="44" y="44" width="3" height="3" fill="#6c6c6c"/><rect x="47" y="44" width="4" height="3" fill="#264646"/><rect x="51" y="44" width="3" height="3" fill="#6c6c6c"/><rect x="0" y="47" width="3" height="4" fill="#6c6c6c"/><rect x="3" y="47" width="4" height="4" fill="#264646"/><rect x="7" y="47" width="3" height="4" fill="#6c6c6c"/><rect x="10" y="47" width="4" height="4" fill="#264646"/><rect x="14" y="47" width="3" height="4" fill="#000"/><rect x="17" y="47" width="7" height="4" fill="#a9a9a9"/><rect x="24" y="47" width="13" height="4" fill="#000"/><rect x="37" y="47" width="4" height="4" fill="#264646"/><rect x="41" y="47" width="3" height="4" fill="#6c6c6c"/><rect x="44" y="47" width="3" height="4" fill="#264646"/><rect x="47" y="47" width="4" height="4" fill="#6c6c6c"/><rect x="51" y="47" width="3" height="4" fill="#264646"/><rect x="0" y="51" width="3" height="3" fill="#264646"/><rect x="3" y="51" width="4" height="3" fill="#6c6c6c"/><rect x="7" y="51" width="3" height="3" fill="#264646"/><rect x="10" y="51" width="4" height="3" fill="#6c6c6c"/><rect x="14" y="51" width="3" height="3" fill="#264646"/><rect x="17" y="51" width="7" height="3" fill="#000"/><rect x="24" y="51" width="3" height="3" fill="#6c6c6c"/><rect x="27" y="51" width="3" height="3" fill="#264646"/><rect x="30" y="51" width="4" height="3" fill="#6c6c6c"/><rect x="34" y="51" width="3" height="3" fill="#264646"/><rect x="37" y="51" width="4" height="3" fill="#6c6c6c"/><rect x="41" y="51" width="3" height="3" fill="#264646"/><rect x="44" y="51" width="3" height="3" fill="#6c6c6c"/><rect x="47" y="51" width="4" height="3" fill="#264646"/><rect x="51" y="51" width="3" height="3" fill="#6c6c6c"/></svg></div>
<div class="a" style="left:394px;top:691px;width:60px;height:20px;background:#414141;border-radius:0 0 6px 6px;font-size:14px;line-height:22px;white-space:nowrap;-webkit-text-stroke:0.2px currentColor"><span class="a" style="left:-1.3000000000000007px;width:40px;text-align:center;color:#f0f0f0">5</span><span class="a" style="left:20.799999999999997px;width:40px;text-align:center;color:#19e619">0</span></div>
<div class="a" style="left:74px;top:715px;width:60px;height:60px;background:#6a6a6a"><div class="a" style="left:2px;top:2px;width:56px;height:56px;background:#000"></div><svg width="54" height="54" shape-rendering="crispEdges" style="position:absolute;left:3px;top:3px"><rect x="0" y="0" width="3" height="3" fill="#6c6c6c"/><rect x="3" y="0" width="4" height="3" fill="#264646"/><rect x="7" y="0" width="3" height="3" fill="#6c6c6c"/><rect x="10" y="0" width="4" height="3" fill="#264646"/><rect x="14" y="0" width="3" height="3" fill="#6c6c6c"/><rect x="17" y="0" width="20" height="3" fill="#000"/><rect x="37" y="0" width="4" height="3" fill="#264646"/><rect x="41" y="0" width="3" height="3" fill="#6c6c6c"/><rect x="44" y="0" width="3" height="3" fill="#264646"/><rect x="47" y="0" width="4" height="3" fill="#6c6c6c"/><rect x="51" y="0" width="3" height="3" fill="#264646"/><rect x="0" y="3" width="3" height="4" fill="#264646"/><rect x="3" y="3" width="4" height="4" fill="#6c6c6c"/><rect x="7" y="3" width="3" height="4" fill="#264646"/><rect x="10" y="3" width="4" height="4" fill="#6c6c6c"/><rect x="14" y="3" width="3" height="4" fill="#000"/><rect x="17" y="3" width="20" height="4" fill="#a9a9a9"/><rect x="37" y="3" width="4" height="4" fill="#000"/><rect x="41" y="3" width="3" height="4" fill="#264646"/><rect x="44" y="3" width="3" height="4" fill="#6c6c6c"/><rect x="47" y="3" width="4" height="4" fill="#264646"/><rect x="51" y="3" width="3" height="4" fill="#6c6c6c"/><rect x="0" y="7" width="3" height="3" fill="#6c6c6c"/><rect x="3" y="7" width="4" height="3" fill="#264646"/><rect x="7" y="7" width="3" height="3" fill="#6c6c6c"/><rect x="10" y="7" width="4" height="3" fill="#000"/><rect x="14" y="7" width="3" height="3" fill="#a9a9a9"/><rect x="17" y="7" width="20" height="3" fill="#000"/><rect x="37" y="7" width="4" height="3" fill="#a9a9a9"/><rect x="41" y="7" width="3" height="3" fill="#000"/><rect x="44" y="7" width="3" height="3" fill="#264646"/><rect x="47" y="7" width="4" height="3" fill="#6c6c6c"/><rect x="51" y="7" width="3" height="3" fill="#264646"/><rect x="0" y="10" width="3" height="4" fill="#264646"/><rect x="3" y="10" width="4" height="4" fill="#6c6c6c"/><rect x="7" y="10" width="3" height="4" fill="#000"/><rect x="10" y="10" width="4" height="4" fill="#a9a9a9"/><rect x="14" y="10" width="16" height="4" fill="#000"/><rect x="30" y="10" width="4" height="4" fill="#a9a9a9"/><rect x="34" y="10" width="7" height="4" fill="#000"/><rect x="41" y="10" width="3" height="4" fill="#a9a9a9"/><rect x="44" y="10" width="3" height="4" fill="#000"/><rect x="47" y="10" width="4" height="4" fill="#264646"/><rect x="51" y="10" width="3" height="4" fill="#6c6c6c"/><rect x="0" y="14" width="3" height="3" fill="#6c6c6c"/><rect x="3" y="14" width="4" height="3" fill="#264646"/><rect x="7" y="14" width="3" height="3" fill="#000"/><rect x="10" y="14" width="4" height="3" fill="#a9a9a9"/><rect x="14" y="14" width="10" height="3" fill="#000"/><rect x="24" y="14" width="13" height="3" fill="#a9a9a9"/><rect x="37" y="14" width="4" height="3" fill="#000"/><rect x="41" y="14" width="3" height="3" fill="#a9a9a9"/><rect x="44" y="14" width="3" height="3" fill="#000"/><rect x="47" y="14" width="4" height="3" fill="#6c6c6c"/><rect x="51" y="14" width="3" height="3" fill="#264646"/><rect x="0" y="17" width="3" height="3" fill="#264646"/><rect x="3" y="17" width="4" height="3" fill="#6c6c6c"/><rect x="7" y="17" width="3" height="3" fill="#000"/><rect x="10" y="17" width="4" height="3" fill="#a9a9a9"/><rect x="14" y="17" width="6" height="3" fill="#000"/><rect x="20" y="17" width="10" height="3" fill="#a9a9a9"/><rect x="30" y="17" width="4" height="3" fill="#000"/><rect x="34" y="17" width="10" height="3" fill="#a9a9a9"/><rect x="44" y="17" width="3" height="3" fill="#000"/><rect x="47" y="17" width="4" height="3" fill="#264646"/><rect x="51" y="17" width="3" height="3" fill="#6c6c6c"/><rect x="0" y="20" width="3" height="4" fill="#6c6c6c"/><rect x="3" y="20" width="4" height="4" fill="#264646"/><rect x="7" y="20" width="3" height="4" fill="#000"/><rect x="10" y="20" width="4" height="4" fill="#a9a9a9"/><rect x="14" y="20" width="6" height="4" fill="#000"/><rect x="20" y="20" width="10" height="4" fill="#a9a9a9"/><rect x="30" y="20" width="4" height="4" fill="#000"/><rect x="34" y="20" width="7" height="4" fill="#a9a9a9"/><rect x="41" y="20" width="3" height="4" fill="#000"/><rect x="44" y="20" width="3" height="4" fill="#264646"/><rect x="47" y="20" width="4" height="4" fill="#6c6c6c"/><rect x="51" y="20" width="3" height="4" fill="#264646"/><rect x="0" y="24" width="3" height="3" fill="#264646"/><rect x="3" y="24" width="4" height="3" fill="#6c6c6c"/><rect x="7" y="24" width="3" height="3" fill="#000"/><rect x="10" y="24" width="4" height="3" fill="#a9a9a9"/><rect x="14" y="24" width="3" height="3" fill="#000"/><rect x="17" y="24" width="24" height="3" fill="#a9a9a9"/><rect x="41" y="24" width="3" height="3" fill="#000"/><rect x="44" y="24" width="3" height="3" fill="#6c6c6c"/><rect x="47" y="24" width="4" height="3" fill="#264646"/><rect x="51" y="24" width="3" height="3" fill="#6c6c6c"/><rect x="0" y="27" width="3" height="3" fill="#6c6c6c"/><rect x="3" y="27" width="4" height="3" fill="#264646"/><rect x="7" y="27" width="3" height="3" fill="#6c6c6c"/><rect x="10" y="27" width="4" height="3" fill="#000"/><rect x="14" y="27" width="23" height="3" fill="#a9a9a9"/><rect x="37" y="27" width="4" height="3" fill="#000"/><rect x="41" y="27" width="3" height="3" fill="#6c6c6c"/><rect x="44" y="27" width="3" height="3" fill="#264646"/><rect x="47" y="27" width="4" height="3" fill="#6c6c6c"/><rect x="51" y="27" width="3" height="3" fill="#264646"/><rect x="0" y="30" width="3" height="4" fill="#264646"/><rect x="3" y="30" width="4" height="4" fill="#6c6c6c"/><rect x="7" y="30" width="3" height="4" fill="#264646"/><rect x="10" y="30" width="4" height="4" fill="#6c6c6c"/><rect x="14" y="30" width="3" height="4" fill="#000"/><rect x="17" y="30" width="17" height="4" fill="#a9a9a9"/><rect x="34" y="30" width="3" height="4" fill="#000"/><rect x="37" y="30" width="4" height="4" fill="#6c6c6c"/><rect x="41" y="30" width="3" height="4" fill="#264646"/><rect x="44" y="30" width="3" height="4" fill="#6c6c6c"/><rect x="47" y="30" width="4" height="4" fill="#264646"/><rect x="51" y="30" width="3" height="4" fill="#6c6c6c"/><rect x="0" y="34" width="3" height="3" fill="#6c6c6c"/><rect x="3" y="34" width="4" height="3" fill="#264646"/><rect x="7" y="34" width="3" height="3" fill="#6c6c6c"/><rect x="10" y="34" width="4" height="3" fill="#000"/><rect x="14" y="34" width="6" height="3" fill="#a9a9a9"/><rect x="20" y="34" width="14" height="3" fill="#000"/><rect x="34" y="34" width="3" height="3" fill="#a9a9a9"/><rect x="37" y="34" width="4" height="3" fill="#000"/><rect x="41" y="34" width="3" height="3" fill="#6c6c6c"/><rect x="44" y="34" width="3" height="3" fill="#264646"/><rect x="47" y="34" width="4" height="3" fill="#6c6c6c"/><rect x="51" y="34" width="3" height="3" fill="#264646"/><rect x="0" y="37" width="3" height="4" fill="#264646"/><rect x="3" y="37" width="4" height="4" fill="#6c6c6c"/><rect x="7" y="37" width="3" height="4" fill="#264646"/><rect x="10" y="37" width="4" height="4" fill="#000"/><rect x="14" y="37" width="3" height="4" fill="#a9a9a9"/><rect x="17" y="37" width="3" height="4" fill="#000"/><rect x="20" y="37" width="14" height="4" fill="#a9a9a9"/><rect x="34" y="37" width="3" height="4" fill="#000"/><rect x="37" y="37" width="4" height="4" fill="#a9a9a9"/><rect x="41" y="37" width="3" height="4" fill="#000"/><rect x="44" y="37" width="3" height="4" fill="#6c6c6c"/><rect x="47" y="37" width="4" height="4" fill="#264646"/><rect x="51" y="37" width="3" height="4" fill="#6c6c6c"/><rect x="0" y="41" width="3" height="3" fill="#6c6c6c"/><rect x="3" y="41" width="4" height="3" fill="#264646"/><rect x="7" y="41" width="3" height="3" fill="#6c6c6c"/><rect x="10" y="41" width="4" height="3" fill="#000"/><rect x="14" y="41" width="3" height="3" fill="#a9a9a9"/><rect x="17" y="41" width="3" height="3" fill="#000"/><rect x="20" y="41" width="14" height="3" fill="#a9a9a9"/><rect x="34" y="41" width="3" height="3" fill="#000"/><rect x="37" y="41" width="4" height="3" fill="#a9a9a9"/><rect x="41" y="41" width="3" height="3" fill="#000"/><rect x="44" y="41" width="3" height="3" fill="#264646"/><rect x="47" y="41" width="4" height="3" fill="#6c6c6c"/><rect x="51" y="41" width="3" height="3" fill="#264646"/><rect x="0" y="44" width="3" height="3" fill="#264646"/><rect x="3" y="44" width="4" height="3" fill="#6c6c6c"/><rect x="7" y="44" width="3" height="3" fill="#264646"/><rect x="10" y="44" width="4" height="3" fill="#6c6c6c"/><rect x="14" y="44" width="3" height="3" fill="#000"/><rect x="17" y="44" width="3" height="3" fill="#a9a9a9"/><rect x="20" y="44" width="4" height="3" fill="#000"/><rect x="24" y="44" width="6" height="3" fill="#a9a9a9"/><rect x="30" y="44" width="4" height="3" fill="#000"/><rect x="34" y="44" width="3" height="3" fill="#a9a9a9"/><rect x="37" y="44" width="4" height="3" fill="#000"/><rect x="41" y="44" width="3" height="3" fill="#264646"/><rect x="44" y="44" width="3" height="3" fill="#6c6c6c"/><rect x="47" y="44" width="4" height="3" fill="#264646"/><rect x="51" y="44" width="3" height="3" fill="#6c6c6c"/><rect x="0" y="47" width="3" height="4" fill="#6c6c6c"/><rect x="3" y="47" width="4" height="4" fill="#264646"/><rect x="7" y="47" width="3" height="4" fill="#6c6c6c"/><rect x="10" y="47" width="4" height="4" fill="#264646"/><rect x="14" y="47" width="3" height="4" fill="#6c6c6c"/><rect x="17" y="47" width="3" height="4" fill="#000"/><rect x="20" y="47" width="14" height="4" fill="#a9a9a9"/><rect x="34" y="47" width="3" height="4" fill="#000"/><rect x="37" y="47" width="4" height="4" fill="#264646"/><rect x="41" y="47" width="3" height="4" fill="#6c6c6c"/><rect x="44" y="47" width="3" height="4" fill="#264646"/><rect x="47" y="47" width="4" height="4" fill="#6c6c6c"/><rect x="51" y="47" width="3" height="4" fill="#264646"/><rect x="0" y="51" width="3" height="3" fill="#264646"/><rect x="3" y="51" width="4" height="3" fill="#6c6c6c"/><rect x="7" y="51" width="3" height="3" fill="#264646"/><rect x="10" y="51" width="4" height="3" fill="#6c6c6c"/><rect x="14" y="51" width="3" height="3" fill="#264646"/><rect x="17" y="51" width="3" height="3" fill="#6c6c6c"/><rect x="20" y="51" width="14" height="3" fill="#000"/><rect x="34" y="51" width="3" height="3" fill="#264646"/><rect x="37" y="51" width="4" height="3" fill="#6c6c6c"/><rect x="41" y="51" width="3" height="3" fill="#264646"/><rect x="44" y="51" width="3" height="3" fill="#6c6c6c"/><rect x="47" y="51" width="4" height="3" fill="#264646"/><rect x="51" y="51" width="3" height="3" fill="#6c6c6c"/></svg></div>
<div class="a" style="left:74px;top:775px;width:60px;height:20px;background:#414141;border-radius:0 0 6px 6px;font-size:14px;line-height:22px;white-space:nowrap;-webkit-text-stroke:0.2px currentColor"><span class="a" style="left:-1.3000000000000007px;width:40px;text-align:center;color:#f0f0f0">6</span><span class="a" style="left:20.799999999999997px;width:40px;text-align:center;color:#19e619">0</span></div>
<div class="a" style="left:138px;top:715px;width:60px;height:60px;background:#6a6a6a"><div class="a" style="left:2px;top:2px;width:56px;height:56px;background:#000"></div><svg width="54" height="54" shape-rendering="crispEdges" style="position:absolute;left:3px;top:3px"><rect x="0" y="0" width="3" height="3" fill="#6c6c6c"/><rect x="3" y="0" width="4" height="3" fill="#264646"/><rect x="7" y="0" width="3" height="3" fill="#6c6c6c"/><rect x="10" y="0" width="4" height="3" fill="#264646"/><rect x="14" y="0" width="3" height="3" fill="#6c6c6c"/><rect x="17" y="0" width="20" height="3" fill="#000"/><rect x="37" y="0" width="4" height="3" fill="#264646"/><rect x="41" y="0" width="3" height="3" fill="#6c6c6c"/><rect x="44" y="0" width="3" height="3" fill="#264646"/><rect x="47" y="0" width="4" height="3" fill="#6c6c6c"/><rect x="51" y="0" width="3" height="3" fill="#264646"/><rect x="0" y="3" width="3" height="4" fill="#264646"/><rect x="3" y="3" width="4" height="4" fill="#6c6c6c"/><rect x="7" y="3" width="3" height="4" fill="#264646"/><rect x="10" y="3" width="4" height="4" fill="#6c6c6c"/><rect x="14" y="3" width="3" height="4" fill="#000"/><rect x="17" y="3" width="20" height="4" fill="#a9a9a9"/><rect x="37" y="3" width="4" height="4" fill="#000"/><rect x="41" y="3" width="3" height="4" fill="#264646"/><rect x="44" y="3" width="3" height="4" fill="#6c6c6c"/><rect x="47" y="3" width="4" height="4" fill="#264646"/><rect x="51" y="3" width="3" height="4" fill="#6c6c6c"/><rect x="0" y="7" width="3" height="3" fill="#6c6c6c"/><rect x="3" y="7" width="4" height="3" fill="#264646"/><rect x="7" y="7" width="3" height="3" fill="#6c6c6c"/><rect x="10" y="7" width="4" height="3" fill="#000"/><rect x="14" y="7" width="3" height="3" fill="#a9a9a9"/><rect x="17" y="7" width="20" height="3" fill="#000"/><rect x="37" y="7" width="4" height="3" fill="#a9a9a9"/><rect x="41" y="7" width="3" height="3" fill="#000"/><rect x="44" y="7" width="3" height="3" fill="#264646"/><rect x="47" y="7" width="4" height="3" fill="#6c6c6c"/><rect x="51" y="7" width="3" height="3" fill="#264646"/><rect x="0" y="10" width="3" height="4" fill="#264646"/><rect x="3" y="10" width="4" height="4" fill="#6c6c6c"/><rect x="7" y="10" width="3" height="4" fill="#000"/><rect x="10" y="10" width="4" height="4" fill="#a9a9a9"/><rect x="14" y="10" width="16" height="4" fill="#000"/><rect x="30" y="10" width="4" height="4" fill="#a9a9a9"/><rect x="34" y="10" width="7" height="4" fill="#000"/><rect x="41" y="10" width="3" height="4" fill="#a9a9a9"/><rect x="44" y="10" width="3" height="4" fill="#000"/><rect x="47" y="10" width="4" height="4" fill="#264646"/><rect x="51" y="10" width="3" height="4" fill="#6c6c6c"/><rect x="0" y="14" width="3" height="3" fill="#6c6c6c"/><rect x="3" y="14" width="4" height="3" fill="#264646"/><rect x="7" y="14" width="3" height="3" fill="#000"/><rect x="10" y="14" width="4" height="3" fill="#a9a9a9"/><rect x="14" y="14" width="10" height="3" fill="#000"/><rect x="24" y="14" width="13" height="3" fill="#a9a9a9"/><rect x="37" y="14" width="4" height="3" fill="#000"/><rect x="41" y="14" width="3" height="3" fill="#a9a9a9"/><rect x="44" y="14" width="3" height="3" fill="#000"/><rect x="47" y="14" width="4" height="3" fill="#6c6c6c"/><rect x="51" y="14" width="3" height="3" fill="#264646"/><rect x="0" y="17" width="3" height="3" fill="#264646"/><rect x="3" y="17" width="4" height="3" fill="#6c6c6c"/><rect x="7" y="17" width="3" height="3" fill="#000"/><rect x="10" y="17" width="4" height="3" fill="#a9a9a9"/><rect x="14" y="17" width="6" height="3" fill="#000"/><rect x="20" y="17" width="10" height="3" fill="#a9a9a9"/><rect x="30" y="17" width="4" height="3" fill="#000"/><rect x="34" y="17" width="10" height="3" fill="#a9a9a9"/><rect x="44" y="17" width="3" height="3" fill="#000"/><rect x="47" y="17" width="4" height="3" fill="#264646"/><rect x="51" y="17" width="3" height="3" fill="#6c6c6c"/><rect x="0" y="20" width="3" height="4" fill="#6c6c6c"/><rect x="3" y="20" width="4" height="4" fill="#264646"/><rect x="7" y="20" width="3" height="4" fill="#000"/><rect x="10" y="20" width="4" height="4" fill="#a9a9a9"/><rect x="14" y="20" width="6" height="4" fill="#000"/><rect x="20" y="20" width="10" height="4" fill="#a9a9a9"/><rect x="30" y="20" width="4" height="4" fill="#000"/><rect x="34" y="20" width="7" height="4" fill="#a9a9a9"/><rect x="41" y="20" width="3" height="4" fill="#000"/><rect x="44" y="20" width="3" height="4" fill="#264646"/><rect x="47" y="20" width="4" height="4" fill="#6c6c6c"/><rect x="51" y="20" width="3" height="4" fill="#264646"/><rect x="0" y="24" width="3" height="3" fill="#264646"/><rect x="3" y="24" width="4" height="3" fill="#6c6c6c"/><rect x="7" y="24" width="3" height="3" fill="#000"/><rect x="10" y="24" width="4" height="3" fill="#a9a9a9"/><rect x="14" y="24" width="3" height="3" fill="#000"/><rect x="17" y="24" width="24" height="3" fill="#a9a9a9"/><rect x="41" y="24" width="3" height="3" fill="#000"/><rect x="44" y="24" width="3" height="3" fill="#6c6c6c"/><rect x="47" y="24" width="4" height="3" fill="#264646"/><rect x="51" y="24" width="3" height="3" fill="#6c6c6c"/><rect x="0" y="27" width="3" height="3" fill="#6c6c6c"/><rect x="3" y="27" width="4" height="3" fill="#264646"/><rect x="7" y="27" width="3" height="3" fill="#6c6c6c"/><rect x="10" y="27" width="4" height="3" fill="#000"/><rect x="14" y="27" width="23" height="3" fill="#a9a9a9"/><rect x="37" y="27" width="7" height="3" fill="#000"/><rect x="44" y="27" width="3" height="3" fill="#264646"/><rect x="47" y="27" width="4" height="3" fill="#6c6c6c"/><rect x="51" y="27" width="3" height="3" fill="#264646"/><rect x="0" y="30" width="3" height="4" fill="#264646"/><rect x="3" y="30" width="4" height="4" fill="#6c6c6c"/><rect x="7" y="30" width="3" height="4" fill="#264646"/><rect x="10" y="30" width="4" height="4" fill="#6c6c6c"/><rect x="14" y="30" width="3" height="4" fill="#000"/><rect x="17" y="30" width="27" height="4" fill="#a9a9a9"/><rect x="44" y="30" width="3" height="4" fill="#000"/><rect x="47" y="30" width="4" height="4" fill="#264646"/><rect x="51" y="30" width="3" height="4" fill="#6c6c6c"/><rect x="0" y="34" width="3" height="3" fill="#6c6c6c"/><rect x="3" y="34" width="4" height="3" fill="#264646"/><rect x="7" y="34" width="3" height="3" fill="#6c6c6c"/><rect x="10" y="34" width="4" height="3" fill="#000"/><rect x="14" y="34" width="6" height="3" fill="#a9a9a9"/><rect x="20" y="34" width="10" height="3" fill="#000"/><rect x="30" y="34" width="14" height="3" fill="#a9a9a9"/><rect x="44" y="34" width="3" height="3" fill="#000"/><rect x="47" y="34" width="4" height="3" fill="#6c6c6c"/><rect x="51" y="34" width="3" height="3" fill="#264646"/><rect x="0" y="37" width="3" height="4" fill="#264646"/><rect x="3" y="37" width="4" height="4" fill="#6c6c6c"/><rect x="7" y="37" width="3" height="4" fill="#264646"/><rect x="10" y="37" width="4" height="4" fill="#000"/><rect x="14" y="37" width="6" height="4" fill="#a9a9a9"/><rect x="20" y="37" width="4" height="4" fill="#000"/><rect x="24" y="37" width="6" height="4" fill="#a9a9a9"/><rect x="30" y="37" width="4" height="4" fill="#000"/><rect x="34" y="37" width="7" height="4" fill="#a9a9a9"/><rect x="41" y="37" width="3" height="4" fill="#000"/><rect x="44" y="37" width="3" height="4" fill="#6c6c6c"/><rect x="47" y="37" width="4" height="4" fill="#264646"/><rect x="51" y="37" width="3" height="4" fill="#6c6c6c"/><rect x="0" y="41" width="3" height="3" fill="#6c6c6c"/><rect x="3" y="41" width="4" height="3" fill="#264646"/><rect x="7" y="41" width="3" height="3" fill="#000"/><rect x="10" y="41" width="7" height="3" fill="#a9a9a9"/><rect x="17" y="41" width="3" height="3" fill="#000"/><rect x="20" y="41" width="14" height="3" fill="#a9a9a9"/><rect x="34" y="41" width="3" height="3" fill="#000"/><rect x="37" y="41" width="7" height="3" fill="#a9a9a9"/><rect x="44" y="41" width="3" height="3" fill="#000"/><rect x="47" y="41" width="4" height="3" fill="#6c6c6c"/><rect x="51" y="41" width="3" height="3" fill="#264646"/><rect x="0" y="44" width="3" height="3" fill="#264646"/><rect x="3" y="44" width="4" height="3" fill="#6c6c6c"/><rect x="7" y="44" width="3" height="3" fill="#264646"/><rect x="10" y="44" width="4" height="3" fill="#000"/><rect x="14" y="44" width="27" height="3" fill="#a9a9a9"/><rect x="41" y="44" width="3" height="3" fill="#000"/><rect x="44" y="44" width="3" height="3" fill="#6c6c6c"/><rect x="47" y="44" width="4" height="3" fill="#264646"/><rect x="51" y="44" width="3" height="3" fill="#6c6c6c"/><rect x="0" y="47" width="3" height="4" fill="#6c6c6c"/><rect x="3" y="47" width="4" height="4" fill="#264646"/><rect x="7" y="47" width="3" height="4" fill="#6c6c6c"/><rect x="10" y="47" width="4" height="4" fill="#264646"/><rect x="14" y="47" width="3" height="4" fill="#000"/><rect x="17" y="47" width="7" height="4" fill="#a9a9a9"/><rect x="24" y="47" width="6" height="4" fill="#000"/><rect x="30" y="47" width="7" height="4" fill="#a9a9a9"/><rect x="37" y="47" width="4" height="4" fill="#000"/><rect x="41" y="47" width="3" height="4" fill="#6c6c6c"/><rect x="44" y="47" width="3" height="4" fill="#264646"/><rect x="47" y="47" width="4" height="4" fill="#6c6c6c"/><rect x="51" y="47" width="3" height="4" fill="#264646"/><rect x="0" y="51" width="3" height="3" fill="#264646"/><rect x="3" y="51" width="4" height="3" fill="#6c6c6c"/><rect x="7" y="51" width="3" height="3" fill="#264646"/><rect x="10" y="51" width="4" height="3" fill="#6c6c6c"/><rect x="14" y="51" width="3" height="3" fill="#264646"/><rect x="17" y="51" width="7" height="3" fill="#000"/><rect x="24" y="51" width="3" height="3" fill="#6c6c6c"/><rect x="27" y="51" width="3" height="3" fill="#264646"/><rect x="30" y="51" width="7" height="3" fill="#000"/><rect x="37" y="51" width="4" height="3" fill="#6c6c6c"/><rect x="41" y="51" width="3" height="3" fill="#264646"/><rect x="44" y="51" width="3" height="3" fill="#6c6c6c"/><rect x="47" y="51" width="4" height="3" fill="#264646"/><rect x="51" y="51" width="3" height="3" fill="#6c6c6c"/></svg></div>
<div class="a" style="left:138px;top:775px;width:60px;height:20px;background:#414141;border-radius:0 0 6px 6px;font-size:14px;line-height:22px;white-space:nowrap;-webkit-text-stroke:0.2px currentColor"><span class="a" style="left:-1.3000000000000007px;width:40px;text-align:center;color:#f0f0f0">7</span><span class="a" style="left:20.799999999999997px;width:40px;text-align:center;color:#19e619">0</span></div>
<div class="a" style="left:202px;top:715px;width:60px;height:60px;background:#6a6a6a"><div class="a" style="left:2px;top:2px;width:56px;height:56px;background:#000"></div><svg width="54" height="54" shape-rendering="crispEdges" style="position:absolute;left:3px;top:3px"><rect x="0" y="0" width="3" height="3" fill="#6c6c6c"/><rect x="3" y="0" width="4" height="3" fill="#264646"/><rect x="7" y="0" width="3" height="3" fill="#6c6c6c"/><rect x="10" y="0" width="4" height="3" fill="#264646"/><rect x="14" y="0" width="3" height="3" fill="#6c6c6c"/><rect x="17" y="0" width="20" height="3" fill="#000"/><rect x="37" y="0" width="4" height="3" fill="#264646"/><rect x="41" y="0" width="3" height="3" fill="#6c6c6c"/><rect x="44" y="0" width="3" height="3" fill="#264646"/><rect x="47" y="0" width="4" height="3" fill="#6c6c6c"/><rect x="51" y="0" width="3" height="3" fill="#264646"/><rect x="0" y="3" width="3" height="4" fill="#264646"/><rect x="3" y="3" width="4" height="4" fill="#6c6c6c"/><rect x="7" y="3" width="3" height="4" fill="#264646"/><rect x="10" y="3" width="4" height="4" fill="#6c6c6c"/><rect x="14" y="3" width="3" height="4" fill="#000"/><rect x="17" y="3" width="20" height="4" fill="#a9a9a9"/><rect x="37" y="3" width="4" height="4" fill="#000"/><rect x="41" y="3" width="3" height="4" fill="#264646"/><rect x="44" y="3" width="3" height="4" fill="#6c6c6c"/><rect x="47" y="3" width="4" height="4" fill="#264646"/><rect x="51" y="3" width="3" height="4" fill="#6c6c6c"/><rect x="0" y="7" width="3" height="3" fill="#6c6c6c"/><rect x="3" y="7" width="4" height="3" fill="#264646"/><rect x="7" y="7" width="3" height="3" fill="#6c6c6c"/><rect x="10" y="7" width="4" height="3" fill="#000"/><rect x="14" y="7" width="3" height="3" fill="#a9a9a9"/><rect x="17" y="7" width="20" height="3" fill="#000"/><rect x="37" y="7" width="4" height="3" fill="#a9a9a9"/><rect x="41" y="7" width="3" height="3" fill="#000"/><rect x="44" y="7" width="3" height="3" fill="#264646"/><rect x="47" y="7" width="4" height="3" fill="#6c6c6c"/><rect x="51" y="7" width="3" height="3" fill="#264646"/><rect x="0" y="10" width="3" height="4" fill="#264646"/><rect x="3" y="10" width="4" height="4" fill="#6c6c6c"/><rect x="7" y="10" width="3" height="4" fill="#000"/><rect x="10" y="10" width="4" height="4" fill="#a9a9a9"/><rect x="14" y="10" width="6" height="4" fill="#000"/><rect x="20" y="10" width="4" height="4" fill="#a9a9a9"/><rect x="24" y="10" width="17" height="4" fill="#000"/><rect x="41" y="10" width="3" height="4" fill="#a9a9a9"/><rect x="44" y="10" width="3" height="4" fill="#000"/><rect x="47" y="10" width="4" height="4" fill="#264646"/><rect x="51" y="10" width="3" height="4" fill="#6c6c6c"/><rect x="0" y="14" width="3" height="3" fill="#6c6c6c"/><rect x="3" y="14" width="4" height="3" fill="#264646"/><rect x="7" y="14" width="3" height="3" fill="#000"/><rect x="10" y="14" width="4" height="3" fill="#a9a9a9"/><rect x="14" y="14" width="3" height="3" fill="#000"/><rect x="17" y="14" width="13" height="3" fill="#a9a9a9"/><rect x="30" y="14" width="11" height="3" fill="#000"/><rect x="41" y="14" width="3" height="3" fill="#a9a9a9"/><rect x="44" y="14" width="3" height="3" fill="#000"/><rect x="47" y="14" width="4" height="3" fill="#6c6c6c"/><rect x="51" y="14" width="3" height="3" fill="#264646"/><rect x="0" y="17" width="3" height="3" fill="#264646"/><rect x="3" y="17" width="4" height="3" fill="#6c6c6c"/><rect x="7" y="17" width="3" height="3" fill="#000"/><rect x="10" y="17" width="10" height="3" fill="#a9a9a9"/><rect x="20" y="17" width="4" height="3" fill="#000"/><rect x="24" y="17" width="10" height="3" fill="#a9a9a9"/><rect x="34" y="17" width="7" height="3" fill="#000"/><rect x="41" y="17" width="3" height="3" fill="#a9a9a9"/><rect x="44" y="17" width="3" height="3" fill="#000"/><rect x="47" y="17" width="4" height="3" fill="#264646"/><rect x="51" y="17" width="3" height="3" fill="#6c6c6c"/><rect x="0" y="20" width="3" height="4" fill="#6c6c6c"/><rect x="3" y="20" width="4" height="4" fill="#264646"/><rect x="7" y="20" width="3" height="4" fill="#6c6c6c"/><rect x="10" y="20" width="4" height="4" fill="#000"/><rect x="14" y="20" width="6" height="4" fill="#a9a9a9"/><rect x="20" y="20" width="4" height="4" fill="#000"/><rect x="24" y="20" width="10" height="4" fill="#a9a9a9"/><rect x="34" y="20" width="7" height="4" fill="#000"/><rect x="41" y="20" width="3" height="4" fill="#a9a9a9"/><rect x="44" y="20" width="3" height="4" fill="#000"/><rect x="47" y="20" width="4" height="4" fill="#6c6c6c"/><rect x="51" y="20" width="3" height="4" fill="#264646"/><rect x="0" y="24" width="3" height="3" fill="#264646"/><rect x="3" y="24" width="4" height="3" fill="#6c6c6c"/><rect x="7" y="24" width="3" height="3" fill="#264646"/><rect x="10" y="24" width="4" height="3" fill="#000"/><rect x="14" y="24" width="23" height="3" fill="#a9a9a9"/><rect x="37" y="24" width="4" height="3" fill="#000"/><rect x="41" y="24" width="3" height="3" fill="#a9a9a9"/><rect x="44" y="24" width="3" height="3" fill="#000"/><rect x="47" y="24" width="4" height="3" fill="#264646"/><rect x="51" y="24" width="3" height="3" fill="#6c6c6c"/><rect x="0" y="27" width="3" height="3" fill="#6c6c6c"/><rect x="3" y="27" width="4" height="3" fill="#264646"/><rect x="7" y="27" width="3" height="3" fill="#6c6c6c"/><rect x="10" y="27" width="4" height="3" fill="#264646"/><rect x="14" y="27" width="3" height="3" fill="#000"/><rect x="17" y="27" width="24" height="3" fill="#a9a9a9"/><rect x="41" y="27" width="3" height="3" fill="#000"/><rect x="44" y="27" width="3" height="3" fill="#264646"/><rect x="47" y="27" width="4" height="3" fill="#6c6c6c"/><rect x="51" y="27" width="3" height="3" fill="#264646"/><rect x="0" y="30" width="3" height="4" fill="#264646"/><rect x="3" y="30" width="4" height="4" fill="#6c6c6c"/><rect x="7" y="30" width="3" height="4" fill="#264646"/><rect x="10" y="30" width="4" height="4" fill="#6c6c6c"/><rect x="14" y="30" width="3" height="4" fill="#264646"/><rect x="17" y="30" width="3" height="4" fill="#000"/><rect x="20" y="30" width="17" height="4" fill="#a9a9a9"/><rect x="37" y="30" width="4" height="4" fill="#000"/><rect x="41" y="30" width="3" height="4" fill="#264646"/><rect x="44" y="30" width="3" height="4" fill="#6c6c6c"/><rect x="47" y="30" width="4" height="4" fill="#264646"/><rect x="51" y="30" width="3" height="4" fill="#6c6c6c"/><rect x="0" y="34" width="3" height="3" fill="#6c6c6c"/><rect x="3" y="34" width="4" height="3" fill="#264646"/><rect x="7" y="34" width="3" height="3" fill="#6c6c6c"/><rect x="10" y="34" width="4" height="3" fill="#264646"/><rect x="14" y="34" width="3" height="3" fill="#000"/><rect x="17" y="34" width="3" height="3" fill="#a9a9a9"/><rect x="20" y="34" width="14" height="3" fill="#000"/><rect x="34" y="34" width="7" height="3" fill="#a9a9a9"/><rect x="41" y="34" width="3" height="3" fill="#000"/><rect x="44" y="34" width="3" height="3" fill="#264646"/><rect x="47" y="34" width="4" height="3" fill="#6c6c6c"/><rect x="51" y="34" width="3" height="3" fill="#264646"/><rect x="0" y="37" width="3" height="4" fill="#264646"/><rect x="3" y="37" width="4" height="4" fill="#6c6c6c"/><rect x="7" y="37" width="3" height="4" fill="#264646"/><rect x="10" y="37" width="4" height="4" fill="#000"/><rect x="14" y="37" width="3" height="4" fill="#a9a9a9"/><rect x="17" y="37" width="3" height="4" fill="#000"/><rect x="20" y="37" width="14" height="4" fill="#a9a9a9"/><rect x="34" y="37" width="3" height="4" fill="#000"/><rect x="37" y="37" width="4" height="4" fill="#a9a9a9"/><rect x="41" y="37" width="3" height="4" fill="#000"/><rect x="44" y="37" width="3" height="4" fill="#6c6c6c"/><rect x="47" y="37" width="4" height="4" fill="#264646"/><rect x="51" y="37" width="3" height="4" fill="#6c6c6c"/><rect x="0" y="41" width="3" height="3" fill="#6c6c6c"/><rect x="3" y="41" width="4" height="3" fill="#264646"/><rect x="7" y="41" width="3" height="3" fill="#6c6c6c"/><rect x="10" y="41" width="4" height="3" fill="#000"/><rect x="14" y="41" width="3" height="3" fill="#a9a9a9"/><rect x="17" y="41" width="3" height="3" fill="#000"/><rect x="20" y="41" width="14" height="3" fill="#a9a9a9"/><rect x="34" y="41" width="3" height="3" fill="#000"/><rect x="37" y="41" width="4" height="3" fill="#a9a9a9"/><rect x="41" y="41" width="3" height="3" fill="#000"/><rect x="44" y="41" width="3" height="3" fill="#264646"/><rect x="47" y="41" width="4" height="3" fill="#6c6c6c"/><rect x="51" y="41" width="3" height="3" fill="#264646"/><rect x="0" y="44" width="3" height="3" fill="#264646"/><rect x="3" y="44" width="4" height="3" fill="#6c6c6c"/><rect x="7" y="44" width="3" height="3" fill="#264646"/><rect x="10" y="44" width="4" height="3" fill="#6c6c6c"/><rect x="14" y="44" width="3" height="3" fill="#000"/><rect x="17" y="44" width="3" height="3" fill="#a9a9a9"/><rect x="20" y="44" width="4" height="3" fill="#000"/><rect x="24" y="44" width="6" height="3" fill="#a9a9a9"/><rect x="30" y="44" width="4" height="3" fill="#000"/><rect x="34" y="44" width="3" height="3" fill="#a9a9a9"/><rect x="37" y="44" width="4" height="3" fill="#000"/><rect x="41" y="44" width="3" height="3" fill="#264646"/><rect x="44" y="44" width="3" height="3" fill="#6c6c6c"/><rect x="47" y="44" width="4" height="3" fill="#264646"/><rect x="51" y="44" width="3" height="3" fill="#6c6c6c"/><rect x="0" y="47" width="3" height="4" fill="#6c6c6c"/><rect x="3" y="47" width="4" height="4" fill="#264646"/><rect x="7" y="47" width="3" height="4" fill="#6c6c6c"/><rect x="10" y="47" width="4" height="4" fill="#264646"/><rect x="14" y="47" width="3" height="4" fill="#6c6c6c"/><rect x="17" y="47" width="3" height="4" fill="#000"/><rect x="20" y="47" width="14" height="4" fill="#a9a9a9"/><rect x="34" y="47" width="3" height="4" fill="#000"/><rect x="37" y="47" width="4" height="4" fill="#264646"/><rect x="41" y="47" width="3" height="4" fill="#6c6c6c"/><rect x="44" y="47" width="3" height="4" fill="#264646"/><rect x="47" y="47" width="4" height="4" fill="#6c6c6c"/><rect x="51" y="47" width="3" height="4" fill="#264646"/><rect x="0" y="51" width="3" height="3" fill="#264646"/><rect x="3" y="51" width="4" height="3" fill="#6c6c6c"/><rect x="7" y="51" width="3" height="3" fill="#264646"/><rect x="10" y="51" width="4" height="3" fill="#6c6c6c"/><rect x="14" y="51" width="3" height="3" fill="#264646"/><rect x="17" y="51" width="3" height="3" fill="#6c6c6c"/><rect x="20" y="51" width="14" height="3" fill="#000"/><rect x="34" y="51" width="3" height="3" fill="#264646"/><rect x="37" y="51" width="4" height="3" fill="#6c6c6c"/><rect x="41" y="51" width="3" height="3" fill="#264646"/><rect x="44" y="51" width="3" height="3" fill="#6c6c6c"/><rect x="47" y="51" width="4" height="3" fill="#264646"/><rect x="51" y="51" width="3" height="3" fill="#6c6c6c"/></svg></div>
<div class="a" style="left:202px;top:775px;width:60px;height:20px;background:#414141;border-radius:0 0 6px 6px;font-size:14px;line-height:22px;white-space:nowrap;-webkit-text-stroke:0.2px currentColor"><span class="a" style="left:-1.3000000000000007px;width:40px;text-align:center;color:#f0f0f0">8</span><span class="a" style="left:20.799999999999997px;width:40px;text-align:center;color:#19e619">0</span></div>
<div class="a" style="left:266px;top:715px;width:60px;height:60px;background:#6a6a6a"><div class="a" style="left:2px;top:2px;width:56px;height:56px;background:#000"></div><svg width="54" height="54" shape-rendering="crispEdges" style="position:absolute;left:3px;top:3px"><rect x="0" y="0" width="3" height="3" fill="#6c6c6c"/><rect x="3" y="0" width="4" height="3" fill="#264646"/><rect x="7" y="0" width="3" height="3" fill="#6c6c6c"/><rect x="10" y="0" width="4" height="3" fill="#264646"/><rect x="14" y="0" width="3" height="3" fill="#6c6c6c"/><rect x="17" y="0" width="20" height="3" fill="#000"/><rect x="37" y="0" width="4" height="3" fill="#264646"/><rect x="41" y="0" width="3" height="3" fill="#6c6c6c"/><rect x="44" y="0" width="3" height="3" fill="#264646"/><rect x="47" y="0" width="4" height="3" fill="#6c6c6c"/><rect x="51" y="0" width="3" height="3" fill="#264646"/><rect x="0" y="3" width="3" height="4" fill="#264646"/><rect x="3" y="3" width="4" height="4" fill="#6c6c6c"/><rect x="7" y="3" width="3" height="4" fill="#264646"/><rect x="10" y="3" width="4" height="4" fill="#6c6c6c"/><rect x="14" y="3" width="3" height="4" fill="#000"/><rect x="17" y="3" width="20" height="4" fill="#a9a9a9"/><rect x="37" y="3" width="4" height="4" fill="#000"/><rect x="41" y="3" width="3" height="4" fill="#264646"/><rect x="44" y="3" width="3" height="4" fill="#6c6c6c"/><rect x="47" y="3" width="4" height="4" fill="#264646"/><rect x="51" y="3" width="3" height="4" fill="#6c6c6c"/><rect x="0" y="7" width="3" height="3" fill="#6c6c6c"/><rect x="3" y="7" width="4" height="3" fill="#264646"/><rect x="7" y="7" width="3" height="3" fill="#6c6c6c"/><rect x="10" y="7" width="4" height="3" fill="#000"/><rect x="14" y="7" width="3" height="3" fill="#a9a9a9"/><rect x="17" y="7" width="20" height="3" fill="#000"/><rect x="37" y="7" width="4" height="3" fill="#a9a9a9"/><rect x="41" y="7" width="3" height="3" fill="#000"/><rect x="44" y="7" width="3" height="3" fill="#264646"/><rect x="47" y="7" width="4" height="3" fill="#6c6c6c"/><rect x="51" y="7" width="3" height="3" fill="#264646"/><rect x="0" y="10" width="3" height="4" fill="#264646"/><rect x="3" y="10" width="4" height="4" fill="#6c6c6c"/><rect x="7" y="10" width="3" height="4" fill="#000"/><rect x="10" y="10" width="4" height="4" fill="#a9a9a9"/><rect x="14" y="10" width="6" height="4" fill="#000"/><rect x="20" y="10" width="4" height="4" fill="#a9a9a9"/><rect x="24" y="10" width="17" height="4" fill="#000"/><rect x="41" y="10" width="3" height="4" fill="#a9a9a9"/><rect x="44" y="10" width="3" height="4" fill="#000"/><rect x="47" y="10" width="4" height="4" fill="#264646"/><rect x="51" y="10" width="3" height="4" fill="#6c6c6c"/><rect x="0" y="14" width="3" height="3" fill="#6c6c6c"/><rect x="3" y="14" width="4" height="3" fill="#264646"/><rect x="7" y="14" width="3" height="3" fill="#000"/><rect x="10" y="14" width="4" height="3" fill="#a9a9a9"/><rect x="14" y="14" width="3" height="3" fill="#000"/><rect x="17" y="14" width="13" height="3" fill="#a9a9a9"/><rect x="30" y="14" width="11" height="3" fill="#000"/><rect x="41" y="14" width="3" height="3" fill="#a9a9a9"/><rect x="44" y="14" width="3" height="3" fill="#000"/><rect x="47" y="14" width="4" height="3" fill="#6c6c6c"/><rect x="51" y="14" width="3" height="3" fill="#264646"/><rect x="0" y="17" width="3" height="3" fill="#264646"/><rect x="3" y="17" width="4" height="3" fill="#6c6c6c"/><rect x="7" y="17" width="3" height="3" fill="#000"/><rect x="10" y="17" width="10" height="3" fill="#a9a9a9"/><rect x="20" y="17" width="4" height="3" fill="#000"/><rect x="24" y="17" width="10" height="3" fill="#a9a9a9"/><rect x="34" y="17" width="7" height="3" fill="#000"/><rect x="41" y="17" width="3" height="3" fill="#a9a9a9"/><rect x="44" y="17" width="3" height="3" fill="#000"/><rect x="47" y="17" width="4" height="3" fill="#264646"/><rect x="51" y="17" width="3" height="3" fill="#6c6c6c"/><rect x="0" y="20" width="3" height="4" fill="#6c6c6c"/><rect x="3" y="20" width="4" height="4" fill="#264646"/><rect x="7" y="20" width="3" height="4" fill="#6c6c6c"/><rect x="10" y="20" width="4" height="4" fill="#000"/><rect x="14" y="20" width="6" height="4" fill="#a9a9a9"/><rect x="20" y="20" width="4" height="4" fill="#000"/><rect x="24" y="20" width="10" height="4" fill="#a9a9a9"/><rect x="34" y="20" width="7" height="4" fill="#000"/><rect x="41" y="20" width="3" height="4" fill="#a9a9a9"/><rect x="44" y="20" width="3" height="4" fill="#000"/><rect x="47" y="20" width="4" height="4" fill="#6c6c6c"/><rect x="51" y="20" width="3" height="4" fill="#264646"/><rect x="0" y="24" width="3" height="3" fill="#264646"/><rect x="3" y="24" width="4" height="3" fill="#6c6c6c"/><rect x="7" y="24" width="3" height="3" fill="#264646"/><rect x="10" y="24" width="4" height="3" fill="#000"/><rect x="14" y="24" width="23" height="3" fill="#a9a9a9"/><rect x="37" y="24" width="4" height="3" fill="#000"/><rect x="41" y="24" width="3" height="3" fill="#a9a9a9"/><rect x="44" y="24" width="3" height="3" fill="#000"/><rect x="47" y="24" width="4" height="3" fill="#264646"/><rect x="51" y="24" width="3" height="3" fill="#6c6c6c"/><rect x="0" y="27" width="3" height="3" fill="#6c6c6c"/><rect x="3" y="27" width="4" height="3" fill="#264646"/><rect x="7" y="27" width="3" height="3" fill="#6c6c6c"/><rect x="10" y="27" width="7" height="3" fill="#000"/><rect x="17" y="27" width="24" height="3" fill="#a9a9a9"/><rect x="41" y="27" width="3" height="3" fill="#000"/><rect x="44" y="27" width="3" height="3" fill="#264646"/><rect x="47" y="27" width="4" height="3" fill="#6c6c6c"/><rect x="51" y="27" width="3" height="3" fill="#264646"/><rect x="0" y="30" width="3" height="4" fill="#264646"/><rect x="3" y="30" width="4" height="4" fill="#6c6c6c"/><rect x="7" y="30" width="3" height="4" fill="#000"/><rect x="10" y="30" width="27" height="4" fill="#a9a9a9"/><rect x="37" y="30" width="4" height="4" fill="#000"/><rect x="41" y="30" width="3" height="4" fill="#264646"/><rect x="44" y="30" width="3" height="4" fill="#6c6c6c"/><rect x="47" y="30" width="4" height="4" fill="#264646"/><rect x="51" y="30" width="3" height="4" fill="#6c6c6c"/><rect x="0" y="34" width="3" height="3" fill="#6c6c6c"/><rect x="3" y="34" width="4" height="3" fill="#264646"/><rect x="7" y="34" width="3" height="3" fill="#000"/><rect x="10" y="34" width="14" height="3" fill="#a9a9a9"/><rect x="24" y="34" width="10" height="3" fill="#000"/><rect x="34" y="34" width="7" height="3" fill="#a9a9a9"/><rect x="41" y="34" width="3" height="3" fill="#000"/><rect x="44" y="34" width="3" height="3" fill="#264646"/><rect x="47" y="34" width="4" height="3" fill="#6c6c6c"/><rect x="51" y="34" width="3" height="3" fill="#264646"/><rect x="0" y="37" width="3" height="4" fill="#264646"/><rect x="3" y="37" width="4" height="4" fill="#6c6c6c"/><rect x="7" y="37" width="3" height="4" fill="#264646"/><rect x="10" y="37" width="4" height="4" fill="#000"/><rect x="14" y="37" width="6" height="4" fill="#a9a9a9"/><rect x="20" y="37" width="4" height="4" fill="#000"/><rect x="24" y="37" width="6" height="4" fill="#a9a9a9"/><rect x="30" y="37" width="4" height="4" fill="#000"/><rect x="34" y="37" width="7" height="4" fill="#a9a9a9"/><rect x="41" y="37" width="3" height="4" fill="#000"/><rect x="44" y="37" width="3" height="4" fill="#6c6c6c"/><rect x="47" y="37" width="4" height="4" fill="#264646"/><rect x="51" y="37" width="3" height="4" fill="#6c6c6c"/><rect x="0" y="41" width="3" height="3" fill="#6c6c6c"/><rect x="3" y="41" width="4" height="3" fill="#264646"/><rect x="7" y="41" width="3" height="3" fill="#000"/><rect x="10" y="41" width="7" height="3" fill="#a9a9a9"/><rect x="17" y="41" width="3" height="3" fill="#000"/><rect x="20" y="41" width="14" height="3" fill="#a9a9a9"/><rect x="34" y="41" width="3" height="3" fill="#000"/><rect x="37" y="41" width="7" height="3" fill="#a9a9a9"/><rect x="44" y="41" width="3" height="3" fill="#000"/><rect x="47" y="41" width="4" height="3" fill="#6c6c6c"/><rect x="51" y="41" width="3" height="3" fill="#264646"/><rect x="0" y="44" width="3" height="3" fill="#264646"/><rect x="3" y="44" width="4" height="3" fill="#6c6c6c"/><rect x="7" y="44" width="3" height="3" fill="#264646"/><rect x="10" y="44" width="4" height="3" fill="#000"/><rect x="14" y="44" width="27" height="3" fill="#a9a9a9"/><rect x="41" y="44" width="3" height="3" fill="#000"/><rect x="44" y="44" width="3" height="3" fill="#6c6c6c"/><rect x="47" y="44" width="4" height="3" fill="#264646"/><rect x="51" y="44" width="3" height="3" fill="#6c6c6c"/><rect x="0" y="47" width="3" height="4" fill="#6c6c6c"/><rect x="3" y="47" width="4" height="4" fill="#264646"/><rect x="7" y="47" width="3" height="4" fill="#6c6c6c"/><rect x="10" y="47" width="4" height="4" fill="#264646"/><rect x="14" y="47" width="3" height="4" fill="#000"/><rect x="17" y="47" width="7" height="4" fill="#a9a9a9"/><rect x="24" y="47" width="6" height="4" fill="#000"/><rect x="30" y="47" width="7" height="4" fill="#a9a9a9"/><rect x="37" y="47" width="4" height="4" fill="#000"/><rect x="41" y="47" width="3" height="4" fill="#6c6c6c"/><rect x="44" y="47" width="3" height="4" fill="#264646"/><rect x="47" y="47" width="4" height="4" fill="#6c6c6c"/><rect x="51" y="47" width="3" height="4" fill="#264646"/><rect x="0" y="51" width="3" height="3" fill="#264646"/><rect x="3" y="51" width="4" height="3" fill="#6c6c6c"/><rect x="7" y="51" width="3" height="3" fill="#264646"/><rect x="10" y="51" width="4" height="3" fill="#6c6c6c"/><rect x="14" y="51" width="3" height="3" fill="#264646"/><rect x="17" y="51" width="7" height="3" fill="#000"/><rect x="24" y="51" width="3" height="3" fill="#6c6c6c"/><rect x="27" y="51" width="3" height="3" fill="#264646"/><rect x="30" y="51" width="7" height="3" fill="#000"/><rect x="37" y="51" width="4" height="3" fill="#6c6c6c"/><rect x="41" y="51" width="3" height="3" fill="#264646"/><rect x="44" y="51" width="3" height="3" fill="#6c6c6c"/><rect x="47" y="51" width="4" height="3" fill="#264646"/><rect x="51" y="51" width="3" height="3" fill="#6c6c6c"/></svg></div>
<div class="a" style="left:266px;top:775px;width:60px;height:20px;background:#414141;border-radius:0 0 6px 6px;font-size:14px;line-height:22px;white-space:nowrap;-webkit-text-stroke:0.2px currentColor"><span class="a" style="left:-1.3000000000000007px;width:40px;text-align:center;color:#f0f0f0">9</span><span class="a" style="left:20.799999999999997px;width:40px;text-align:center;color:#19e619">0</span></div>
<div class="a" style="left:330px;top:715px;width:60px;height:60px;background:#6a6a6a"><div class="a" style="left:2px;top:2px;width:56px;height:56px;background:#000"></div><svg width="54" height="54" shape-rendering="crispEdges" style="position:absolute;left:3px;top:3px"><rect x="0" y="0" width="3" height="3" fill="#6c6c6c"/><rect x="3" y="0" width="4" height="3" fill="#264646"/><rect x="7" y="0" width="3" height="3" fill="#6c6c6c"/><rect x="10" y="0" width="4" height="3" fill="#264646"/><rect x="14" y="0" width="3" height="3" fill="#6c6c6c"/><rect x="17" y="0" width="20" height="3" fill="#000"/><rect x="37" y="0" width="4" height="3" fill="#264646"/><rect x="41" y="0" width="3" height="3" fill="#6c6c6c"/><rect x="44" y="0" width="3" height="3" fill="#264646"/><rect x="47" y="0" width="4" height="3" fill="#6c6c6c"/><rect x="51" y="0" width="3" height="3" fill="#264646"/><rect x="0" y="3" width="3" height="4" fill="#264646"/><rect x="3" y="3" width="4" height="4" fill="#6c6c6c"/><rect x="7" y="3" width="3" height="4" fill="#264646"/><rect x="10" y="3" width="4" height="4" fill="#6c6c6c"/><rect x="14" y="3" width="3" height="4" fill="#000"/><rect x="17" y="3" width="20" height="4" fill="#a9a9a9"/><rect x="37" y="3" width="4" height="4" fill="#000"/><rect x="41" y="3" width="3" height="4" fill="#264646"/><rect x="44" y="3" width="3" height="4" fill="#6c6c6c"/><rect x="47" y="3" width="4" height="4" fill="#264646"/><rect x="51" y="3" width="3" height="4" fill="#6c6c6c"/><rect x="0" y="7" width="3" height="3" fill="#6c6c6c"/><rect x="3" y="7" width="4" height="3" fill="#264646"/><rect x="7" y="7" width="3" height="3" fill="#6c6c6c"/><rect x="10" y="7" width="4" height="3" fill="#000"/><rect x="14" y="7" width="3" height="3" fill="#a9a9a9"/><rect x="17" y="7" width="20" height="3" fill="#000"/><rect x="37" y="7" width="4" height="3" fill="#a9a9a9"/><rect x="41" y="7" width="3" height="3" fill="#000"/><rect x="44" y="7" width="3" height="3" fill="#264646"/><rect x="47" y="7" width="4" height="3" fill="#6c6c6c"/><rect x="51" y="7" width="3" height="3" fill="#264646"/><rect x="0" y="10" width="3" height="4" fill="#264646"/><rect x="3" y="10" width="4" height="4" fill="#6c6c6c"/><rect x="7" y="10" width="3" height="4" fill="#000"/><rect x="10" y="10" width="4" height="4" fill="#a9a9a9"/><rect x="14" y="10" width="27" height="4" fill="#000"/><rect x="41" y="10" width="3" height="4" fill="#a9a9a9"/><rect x="44" y="10" width="3" height="4" fill="#000"/><rect x="47" y="10" width="4" height="4" fill="#264646"/><rect x="51" y="10" width="3" height="4" fill="#6c6c6c"/><rect x="0" y="14" width="3" height="3" fill="#6c6c6c"/><rect x="3" y="14" width="4" height="3" fill="#264646"/><rect x="7" y="14" width="3" height="3" fill="#000"/><rect x="10" y="14" width="4" height="3" fill="#a9a9a9"/><rect x="14" y="14" width="27" height="3" fill="#000"/><rect x="41" y="14" width="3" height="3" fill="#a9a9a9"/><rect x="44" y="14" width="3" height="3" fill="#000"/><rect x="47" y="14" width="4" height="3" fill="#6c6c6c"/><rect x="51" y="14" width="3" height="3" fill="#264646"/><rect x="0" y="17" width="3" height="3" fill="#264646"/><rect x="3" y="17" width="4" height="3" fill="#6c6c6c"/><rect x="7" y="17" width="3" height="3" fill="#000"/><rect x="10" y="17" width="4" height="3" fill="#a9a9a9"/><rect x="14" y="17" width="27" height="3" fill="#000"/><rect x="41" y="17" width="3" height="3" fill="#a9a9a9"/><rect x="44" y="17" width="3" height="3" fill="#000"/><rect x="47" y="17" width="4" height="3" fill="#264646"/><rect x="51" y="17" width="3" height="3" fill="#6c6c6c"/><rect x="0" y="20" width="3" height="4" fill="#6c6c6c"/><rect x="3" y="20" width="4" height="4" fill="#264646"/><rect x="7" y="20" width="3" height="4" fill="#000"/><rect x="10" y="20" width="4" height="4" fill="#a9a9a9"/><rect x="14" y="20" width="27" height="4" fill="#000"/><rect x="41" y="20" width="3" height="4" fill="#a9a9a9"/><rect x="44" y="20" width="3" height="4" fill="#000"/><rect x="47" y="20" width="4" height="4" fill="#6c6c6c"/><rect x="51" y="20" width="3" height="4" fill="#264646"/><rect x="0" y="24" width="3" height="3" fill="#264646"/><rect x="3" y="24" width="4" height="3" fill="#6c6c6c"/><rect x="7" y="24" width="3" height="3" fill="#264646"/><rect x="10" y="24" width="4" height="3" fill="#000"/><rect x="14" y="24" width="3" height="3" fill="#a9a9a9"/><rect x="17" y="24" width="20" height="3" fill="#000"/><rect x="37" y="24" width="4" height="3" fill="#a9a9a9"/><rect x="41" y="24" width="3" height="3" fill="#000"/><rect x="44" y="24" width="3" height="3" fill="#6c6c6c"/><rect x="47" y="24" width="4" height="3" fill="#264646"/><rect x="51" y="24" width="3" height="3" fill="#6c6c6c"/><rect x="0" y="27" width="3" height="3" fill="#6c6c6c"/><rect x="3" y="27" width="4" height="3" fill="#264646"/><rect x="7" y="27" width="3" height="3" fill="#6c6c6c"/><rect x="10" y="27" width="4" height="3" fill="#264646"/><rect x="14" y="27" width="3" height="3" fill="#000"/><rect x="17" y="27" width="3" height="3" fill="#a9a9a9"/><rect x="20" y="27" width="14" height="3" fill="#000"/><rect x="34" y="27" width="3" height="3" fill="#a9a9a9"/><rect x="37" y="27" width="4" height="3" fill="#000"/><rect x="41" y="27" width="3" height="3" fill="#6c6c6c"/><rect x="44" y="27" width="3" height="3" fill="#264646"/><rect x="47" y="27" width="4" height="3" fill="#6c6c6c"/><rect x="51" y="27" width="3" height="3" fill="#264646"/><rect x="0" y="30" width="3" height="4" fill="#264646"/><rect x="3" y="30" width="4" height="4" fill="#6c6c6c"/><rect x="7" y="30" width="3" height="4" fill="#264646"/><rect x="10" y="30" width="4" height="4" fill="#6c6c6c"/><rect x="14" y="30" width="6" height="4" fill="#000"/><rect x="20" y="30" width="14" height="4" fill="#a9a9a9"/><rect x="34" y="30" width="7" height="4" fill="#000"/><rect x="41" y="30" width="3" height="4" fill="#264646"/><rect x="44" y="30" width="3" height="4" fill="#6c6c6c"/><rect x="47" y="30" width="4" height="4" fill="#264646"/><rect x="51" y="30" width="3" height="4" fill="#6c6c6c"/><rect x="0" y="34" width="3" height="3" fill="#6c6c6c"/><rect x="3" y="34" width="4" height="3" fill="#264646"/><rect x="7" y="34" width="3" height="3" fill="#6c6c6c"/><rect x="10" y="34" width="4" height="3" fill="#000"/><rect x="14" y="34" width="6" height="3" fill="#a9a9a9"/><rect x="20" y="34" width="14" height="3" fill="#000"/><rect x="34" y="34" width="7" height="3" fill="#a9a9a9"/><rect x="41" y="34" width="3" height="3" fill="#000"/><rect x="44" y="34" width="3" height="3" fill="#264646"/><rect x="47" y="34" width="4" height="3" fill="#6c6c6c"/><rect x="51" y="34" width="3" height="3" fill="#264646"/><rect x="0" y="37" width="3" height="4" fill="#264646"/><rect x="3" y="37" width="4" height="4" fill="#6c6c6c"/><rect x="7" y="37" width="3" height="4" fill="#264646"/><rect x="10" y="37" width="4" height="4" fill="#000"/><rect x="14" y="37" width="3" height="4" fill="#a9a9a9"/><rect x="17" y="37" width="3" height="4" fill="#000"/><rect x="20" y="37" width="14" height="4" fill="#a9a9a9"/><rect x="34" y="37" width="3" height="4" fill="#000"/><rect x="37" y="37" width="4" height="4" fill="#a9a9a9"/><rect x="41" y="37" width="3" height="4" fill="#000"/><rect x="44" y="37" width="3" height="4" fill="#6c6c6c"/><rect x="47" y="37" width="4" height="4" fill="#264646"/><rect x="51" y="37" width="3" height="4" fill="#6c6c6c"/><rect x="0" y="41" width="3" height="3" fill="#6c6c6c"/><rect x="3" y="41" width="4" height="3" fill="#264646"/><rect x="7" y="41" width="3" height="3" fill="#6c6c6c"/><rect x="10" y="41" width="4" height="3" fill="#000"/><rect x="14" y="41" width="3" height="3" fill="#a9a9a9"/><rect x="17" y="41" width="3" height="3" fill="#000"/><rect x="20" y="41" width="17" height="3" fill="#a9a9a9"/><rect x="37" y="41" width="4" height="3" fill="#000"/><rect x="41" y="41" width="3" height="3" fill="#6c6c6c"/><rect x="44" y="41" width="3" height="3" fill="#264646"/><rect x="47" y="41" width="4" height="3" fill="#6c6c6c"/><rect x="51" y="41" width="3" height="3" fill="#264646"/><rect x="0" y="44" width="3" height="3" fill="#264646"/><rect x="3" y="44" width="4" height="3" fill="#6c6c6c"/><rect x="7" y="44" width="3" height="3" fill="#264646"/><rect x="10" y="44" width="4" height="3" fill="#6c6c6c"/><rect x="14" y="44" width="3" height="3" fill="#000"/><rect x="17" y="44" width="10" height="3" fill="#a9a9a9"/><rect x="27" y="44" width="3" height="3" fill="#000"/><rect x="30" y="44" width="7" height="3" fill="#a9a9a9"/><rect x="37" y="44" width="4" height="3" fill="#000"/><rect x="41" y="44" width="3" height="3" fill="#264646"/><rect x="44" y="44" width="3" height="3" fill="#6c6c6c"/><rect x="47" y="44" width="4" height="3" fill="#264646"/><rect x="51" y="44" width="3" height="3" fill="#6c6c6c"/><rect x="0" y="47" width="3" height="4" fill="#6c6c6c"/><rect x="3" y="47" width="4" height="4" fill="#264646"/><rect x="7" y="47" width="3" height="4" fill="#6c6c6c"/><rect x="10" y="47" width="4" height="4" fill="#264646"/><rect x="14" y="47" width="3" height="4" fill="#6c6c6c"/><rect x="17" y="47" width="13" height="4" fill="#000"/><rect x="30" y="47" width="7" height="4" fill="#a9a9a9"/><rect x="37" y="47" width="4" height="4" fill="#000"/><rect x="41" y="47" width="3" height="4" fill="#6c6c6c"/><rect x="44" y="47" width="3" height="4" fill="#264646"/><rect x="47" y="47" width="4" height="4" fill="#6c6c6c"/><rect x="51" y="47" width="3" height="4" fill="#264646"/><rect x="0" y="51" width="3" height="3" fill="#264646"/><rect x="3" y="51" width="4" height="3" fill="#6c6c6c"/><rect x="7" y="51" width="3" height="3" fill="#264646"/><rect x="10" y="51" width="4" height="3" fill="#6c6c6c"/><rect x="14" y="51" width="3" height="3" fill="#264646"/><rect x="17" y="51" width="3" height="3" fill="#6c6c6c"/><rect x="20" y="51" width="4" height="3" fill="#264646"/><rect x="24" y="51" width="3" height="3" fill="#6c6c6c"/><rect x="27" y="51" width="3" height="3" fill="#264646"/><rect x="30" y="51" width="7" height="3" fill="#000"/><rect x="37" y="51" width="4" height="3" fill="#6c6c6c"/><rect x="41" y="51" width="3" height="3" fill="#264646"/><rect x="44" y="51" width="3" height="3" fill="#6c6c6c"/><rect x="47" y="51" width="4" height="3" fill="#264646"/><rect x="51" y="51" width="3" height="3" fill="#6c6c6c"/></svg></div>
<div class="a" style="left:330px;top:775px;width:60px;height:20px;background:#414141;border-radius:0 0 6px 6px;font-size:14px;line-height:22px;white-space:nowrap;-webkit-text-stroke:0.2px currentColor"><span class="a" style="left:-1.3000000000000007px;width:40px;text-align:center;color:#f0f0f0">10</span><span class="a" style="left:20.799999999999997px;width:40px;text-align:center;color:#19e619">0</span></div>
<div class="a" style="left:394px;top:715px;width:60px;height:60px;background:#6a6a6a"><div class="a" style="left:2px;top:2px;width:56px;height:56px;background:#000"></div><svg width="54" height="54" shape-rendering="crispEdges" style="position:absolute;left:3px;top:3px"><rect x="0" y="0" width="3" height="3" fill="#6c6c6c"/><rect x="3" y="0" width="4" height="3" fill="#264646"/><rect x="7" y="0" width="3" height="3" fill="#6c6c6c"/><rect x="10" y="0" width="4" height="3" fill="#264646"/><rect x="14" y="0" width="3" height="3" fill="#6c6c6c"/><rect x="17" y="0" width="20" height="3" fill="#000"/><rect x="37" y="0" width="4" height="3" fill="#264646"/><rect x="41" y="0" width="3" height="3" fill="#6c6c6c"/><rect x="44" y="0" width="3" height="3" fill="#264646"/><rect x="47" y="0" width="4" height="3" fill="#6c6c6c"/><rect x="51" y="0" width="3" height="3" fill="#264646"/><rect x="0" y="3" width="3" height="4" fill="#264646"/><rect x="3" y="3" width="4" height="4" fill="#6c6c6c"/><rect x="7" y="3" width="3" height="4" fill="#264646"/><rect x="10" y="3" width="4" height="4" fill="#6c6c6c"/><rect x="14" y="3" width="3" height="4" fill="#000"/><rect x="17" y="3" width="20" height="4" fill="#a9a9a9"/><rect x="37" y="3" width="4" height="4" fill="#000"/><rect x="41" y="3" width="3" height="4" fill="#264646"/><rect x="44" y="3" width="3" height="4" fill="#6c6c6c"/><rect x="47" y="3" width="4" height="4" fill="#264646"/><rect x="51" y="3" width="3" height="4" fill="#6c6c6c"/><rect x="0" y="7" width="3" height="3" fill="#6c6c6c"/><rect x="3" y="7" width="4" height="3" fill="#264646"/><rect x="7" y="7" width="3" height="3" fill="#6c6c6c"/><rect x="10" y="7" width="4" height="3" fill="#000"/><rect x="14" y="7" width="3" height="3" fill="#a9a9a9"/><rect x="17" y="7" width="20" height="3" fill="#000"/><rect x="37" y="7" width="4" height="3" fill="#a9a9a9"/><rect x="41" y="7" width="3" height="3" fill="#000"/><rect x="44" y="7" width="3" height="3" fill="#264646"/><rect x="47" y="7" width="4" height="3" fill="#6c6c6c"/><rect x="51" y="7" width="3" height="3" fill="#264646"/><rect x="0" y="10" width="3" height="4" fill="#264646"/><rect x="3" y="10" width="4" height="4" fill="#6c6c6c"/><rect x="7" y="10" width="3" height="4" fill="#000"/><rect x="10" y="10" width="4" height="4" fill="#a9a9a9"/><rect x="14" y="10" width="27" height="4" fill="#000"/><rect x="41" y="10" width="3" height="4" fill="#a9a9a9"/><rect x="44" y="10" width="3" height="4" fill="#000"/><rect x="47" y="10" width="4" height="4" fill="#264646"/><rect x="51" y="10" width="3" height="4" fill="#6c6c6c"/><rect x="0" y="14" width="3" height="3" fill="#6c6c6c"/><rect x="3" y="14" width="4" height="3" fill="#264646"/><rect x="7" y="14" width="3" height="3" fill="#000"/><rect x="10" y="14" width="4" height="3" fill="#a9a9a9"/><rect x="14" y="14" width="27" height="3" fill="#000"/><rect x="41" y="14" width="3" height="3" fill="#a9a9a9"/><rect x="44" y="14" width="3" height="3" fill="#000"/><rect x="47" y="14" width="4" height="3" fill="#6c6c6c"/><rect x="51" y="14" width="3" height="3" fill="#264646"/><rect x="0" y="17" width="3" height="3" fill="#264646"/><rect x="3" y="17" width="4" height="3" fill="#6c6c6c"/><rect x="7" y="17" width="3" height="3" fill="#000"/><rect x="10" y="17" width="4" height="3" fill="#a9a9a9"/><rect x="14" y="17" width="27" height="3" fill="#000"/><rect x="41" y="17" width="3" height="3" fill="#a9a9a9"/><rect x="44" y="17" width="3" height="3" fill="#000"/><rect x="47" y="17" width="4" height="3" fill="#264646"/><rect x="51" y="17" width="3" height="3" fill="#6c6c6c"/><rect x="0" y="20" width="3" height="4" fill="#6c6c6c"/><rect x="3" y="20" width="4" height="4" fill="#264646"/><rect x="7" y="20" width="3" height="4" fill="#000"/><rect x="10" y="20" width="4" height="4" fill="#a9a9a9"/><rect x="14" y="20" width="27" height="4" fill="#000"/><rect x="41" y="20" width="3" height="4" fill="#a9a9a9"/><rect x="44" y="20" width="3" height="4" fill="#000"/><rect x="47" y="20" width="4" height="4" fill="#6c6c6c"/><rect x="51" y="20" width="3" height="4" fill="#264646"/><rect x="0" y="24" width="3" height="3" fill="#264646"/><rect x="3" y="24" width="4" height="3" fill="#6c6c6c"/><rect x="7" y="24" width="3" height="3" fill="#264646"/><rect x="10" y="24" width="4" height="3" fill="#000"/><rect x="14" y="24" width="3" height="3" fill="#a9a9a9"/><rect x="17" y="24" width="20" height="3" fill="#000"/><rect x="37" y="24" width="4" height="3" fill="#a9a9a9"/><rect x="41" y="24" width="3" height="3" fill="#000"/><rect x="44" y="24" width="3" height="3" fill="#6c6c6c"/><rect x="47" y="24" width="4" height="3" fill="#264646"/><rect x="51" y="24" width="3" height="3" fill="#6c6c6c"/><rect x="0" y="27" width="3" height="3" fill="#6c6c6c"/><rect x="3" y="27" width="4" height="3" fill="#264646"/><rect x="7" y="27" width="3" height="3" fill="#6c6c6c"/><rect x="10" y="27" width="4" height="3" fill="#264646"/><rect x="14" y="27" width="3" height="3" fill="#000"/><rect x="17" y="27" width="3" height="3" fill="#a9a9a9"/><rect x="20" y="27" width="14" height="3" fill="#000"/><rect x="34" y="27" width="3" height="3" fill="#a9a9a9"/><rect x="37" y="27" width="4" height="3" fill="#000"/><rect x="41" y="27" width="3" height="3" fill="#6c6c6c"/><rect x="44" y="27" width="3" height="3" fill="#264646"/><rect x="47" y="27" width="4" height="3" fill="#6c6c6c"/><rect x="51" y="27" width="3" height="3" fill="#264646"/><rect x="0" y="30" width="3" height="4" fill="#264646"/><rect x="3" y="30" width="4" height="4" fill="#6c6c6c"/><rect x="7" y="30" width="3" height="4" fill="#264646"/><rect x="10" y="30" width="4" height="4" fill="#6c6c6c"/><rect x="14" y="30" width="6" height="4" fill="#000"/><rect x="20" y="30" width="14" height="4" fill="#a9a9a9"/><rect x="34" y="30" width="7" height="4" fill="#000"/><rect x="41" y="30" width="3" height="4" fill="#264646"/><rect x="44" y="30" width="3" height="4" fill="#6c6c6c"/><rect x="47" y="30" width="4" height="4" fill="#264646"/><rect x="51" y="30" width="3" height="4" fill="#6c6c6c"/><rect x="0" y="34" width="3" height="3" fill="#6c6c6c"/><rect x="3" y="34" width="4" height="3" fill="#264646"/><rect x="7" y="34" width="3" height="3" fill="#6c6c6c"/><rect x="10" y="34" width="4" height="3" fill="#000"/><rect x="14" y="34" width="6" height="3" fill="#a9a9a9"/><rect x="20" y="34" width="14" height="3" fill="#000"/><rect x="34" y="34" width="7" height="3" fill="#a9a9a9"/><rect x="41" y="34" width="3" height="3" fill="#000"/><rect x="44" y="34" width="3" height="3" fill="#264646"/><rect x="47" y="34" width="4" height="3" fill="#6c6c6c"/><rect x="51" y="34" width="3" height="3" fill="#264646"/><rect x="0" y="37" width="3" height="4" fill="#264646"/><rect x="3" y="37" width="4" height="4" fill="#6c6c6c"/><rect x="7" y="37" width="3" height="4" fill="#264646"/><rect x="10" y="37" width="4" height="4" fill="#000"/><rect x="14" y="37" width="3" height="4" fill="#a9a9a9"/><rect x="17" y="37" width="3" height="4" fill="#000"/><rect x="20" y="37" width="14" height="4" fill="#a9a9a9"/><rect x="34" y="37" width="3" height="4" fill="#000"/><rect x="37" y="37" width="4" height="4" fill="#a9a9a9"/><rect x="41" y="37" width="3" height="4" fill="#000"/><rect x="44" y="37" width="3" height="4" fill="#6c6c6c"/><rect x="47" y="37" width="4" height="4" fill="#264646"/><rect x="51" y="37" width="3" height="4" fill="#6c6c6c"/><rect x="0" y="41" width="3" height="3" fill="#6c6c6c"/><rect x="3" y="41" width="4" height="3" fill="#264646"/><rect x="7" y="41" width="3" height="3" fill="#6c6c6c"/><rect x="10" y="41" width="4" height="3" fill="#264646"/><rect x="14" y="41" width="3" height="3" fill="#000"/><rect x="17" y="41" width="17" height="3" fill="#a9a9a9"/><rect x="34" y="41" width="3" height="3" fill="#000"/><rect x="37" y="41" width="4" height="3" fill="#a9a9a9"/><rect x="41" y="41" width="3" height="3" fill="#000"/><rect x="44" y="41" width="3" height="3" fill="#264646"/><rect x="47" y="41" width="4" height="3" fill="#6c6c6c"/><rect x="51" y="41" width="3" height="3" fill="#264646"/><rect x="0" y="44" width="3" height="3" fill="#264646"/><rect x="3" y="44" width="4" height="3" fill="#6c6c6c"/><rect x="7" y="44" width="3" height="3" fill="#264646"/><rect x="10" y="44" width="4" height="3" fill="#6c6c6c"/><rect x="14" y="44" width="3" height="3" fill="#000"/><rect x="17" y="44" width="7" height="3" fill="#a9a9a9"/><rect x="24" y="44" width="3" height="3" fill="#000"/><rect x="27" y="44" width="10" height="3" fill="#a9a9a9"/><rect x="37" y="44" width="4" height="3" fill="#000"/><rect x="41" y="44" width="3" height="3" fill="#264646"/><rect x="44" y="44" width="3" height="3" fill="#6c6c6c"/><rect x="47" y="44" width="4" height="3" fill="#264646"/><rect x="51" y="44" width="3" height="3" fill="#6c6c6c"/><rect x="0" y="47" width="3" height="4" fill="#6c6c6c"/><rect x="3" y="47" width="4" height="4" fill="#264646"/><rect x="7" y="47" width="3" height="4" fill="#6c6c6c"/><rect x="10" y="47" width="4" height="4" fill="#264646"/><rect x="14" y="47" width="3" height="4" fill="#000"/><rect x="17" y="47" width="7" height="4" fill="#a9a9a9"/><rect x="24" y="47" width="13" height="4" fill="#000"/><rect x="37" y="47" width="4" height="4" fill="#264646"/><rect x="41" y="47" width="3" height="4" fill="#6c6c6c"/><rect x="44" y="47" width="3" height="4" fill="#264646"/><rect x="47" y="47" width="4" height="4" fill="#6c6c6c"/><rect x="51" y="47" width="3" height="4" fill="#264646"/><rect x="0" y="51" width="3" height="3" fill="#264646"/><rect x="3" y="51" width="4" height="3" fill="#6c6c6c"/><rect x="7" y="51" width="3" height="3" fill="#264646"/><rect x="10" y="51" width="4" height="3" fill="#6c6c6c"/><rect x="14" y="51" width="3" height="3" fill="#264646"/><rect x="17" y="51" width="7" height="3" fill="#000"/><rect x="24" y="51" width="3" height="3" fill="#6c6c6c"/><rect x="27" y="51" width="3" height="3" fill="#264646"/><rect x="30" y="51" width="4" height="3" fill="#6c6c6c"/><rect x="34" y="51" width="3" height="3" fill="#264646"/><rect x="37" y="51" width="4" height="3" fill="#6c6c6c"/><rect x="41" y="51" width="3" height="3" fill="#264646"/><rect x="44" y="51" width="3" height="3" fill="#6c6c6c"/><rect x="47" y="51" width="4" height="3" fill="#264646"/><rect x="51" y="51" width="3" height="3" fill="#6c6c6c"/></svg></div>
<div class="a" style="left:394px;top:775px;width:60px;height:20px;background:#414141;border-radius:0 0 6px 6px;font-size:14px;line-height:22px;white-space:nowrap;-webkit-text-stroke:0.2px currentColor"><span class="a" style="left:-1.3000000000000007px;width:40px;text-align:center;color:#f0f0f0">11</span><span class="a" style="left:20.799999999999997px;width:40px;text-align:center;color:#19e619">0</span></div>
<div class="a" style="left:1572px;top:162px;width:10px;height:898px;background:#242424"></div>
<div class="a" style="left:1582px;top:162px;width:263px;height:898px;background:#3a3a3a;border-radius:5px 0 0 5px"></div>
<div class="hdr" style="left:1587px;top:166px;width:254px;text-align:center">Variables</div>
<div class="a" style="left:1587px;top:190px;width:254px;height:842px;border:2px solid #d2d2d2;border-radius:5px;background:#3e3e3e"></div>
<div class="li" style="left:1594px;top:194px">DIR</div>
<div class="sep" style="left:1592px;top:218px;width:244px"></div>
<div class="li" style="left:1594px;top:218px">FACING</div>
<div class="sep" style="left:1592px;top:242px;width:244px"></div>
<div class="li" style="left:1594px;top:242px">DID_SHOOT</div>
<div class="a" style="left:1587px;top:1036px;width:20px;height:20px;background:#8c8c8c;border-radius:4px"><svg width="20" height="20" style="position:absolute;left:0;top:0"><path d="M10 4.5 V15.5 M4.5 10 H15.5" stroke="#fff" stroke-width="1.8"/></svg></div>
<div class="a" style="left:1611px;top:1036px;width:20px;height:20px;background:#4a4a4a;border-radius:4px"><svg width="20" height="20" style="position:absolute;left:0;top:0"><path d="M5 5.2 H15 V6.6 H5 Z M8 4 H12 V5.2 H8 Z" fill="#fff"/><path d="M5.8 7.4 H14.2 L13.4 16.2 Q13.3 17 12.5 17 H7.5 Q6.7 17 6.6 16.2 Z" fill="#fff"/></svg></div>
<div class="a" style="left:1821px;top:1036px;width:20px;height:20px;background:#8c8c8c;border-radius:4px"><svg width="20" height="20" style="position:absolute;left:0;top:0"><path d="M7.63 5.48 L8.30 3.62 L11.70 3.62 L12.37 5.48 L12.73 5.69 L14.67 5.34 L16.37 8.28 L15.10 9.79 L15.10 10.21 L16.37 11.72 L14.67 14.66 L12.73 14.31 L12.37 14.52 L11.70 16.38 L8.30 16.38 L7.63 14.52 L7.27 14.31 L5.33 14.66 L3.63 11.72 L4.90 10.21 L4.90 9.79 L3.63 8.28 L5.33 5.34 L7.27 5.69 Z" fill="#fff" stroke="#fff" stroke-width="1" stroke-linejoin="round"/><circle cx="10" cy="10" r="1.9" fill="#8c8c8c"/></svg></div>
<div class="a" style="left:504px;top:162px;width:1068px;height:898px;background:#1c1c1c;overflow:hidden">
<svg class="a" style="left:0;top:0" width="1068" height="898" shape-rendering="crispEdges"><rect x="-2" y="0" width="1" height="898" fill="#262626"/><rect x="5" y="0" width="1" height="898" fill="#262626"/><rect x="11" y="0" width="1" height="898" fill="#262626"/><rect x="18" y="0" width="1" height="898" fill="#262626"/><rect x="25" y="0" width="1" height="898" fill="#474747"/><rect x="32" y="0" width="1" height="898" fill="#262626"/><rect x="39" y="0" width="1" height="898" fill="#262626"/><rect x="45" y="0" width="1" height="898" fill="#262626"/><rect x="52" y="0" width="1" height="898" fill="#262626"/><rect x="59" y="0" width="1" height="898" fill="#262626"/><rect x="66" y="0" width="1" height="898" fill="#262626"/><rect x="73" y="0" width="1" height="898" fill="#262626"/><rect x="80" y="0" width="1" height="898" fill="#262626"/><rect x="86" y="0" width="1" height="898" fill="#262626"/><rect x="93" y="0" width="1" height="898" fill="#474747"/><rect x="100" y="0" width="1" height="898" fill="#262626"/><rect x="107" y="0" width="1" height="898" fill="#262626"/><rect x="114" y="0" width="1" height="898" fill="#262626"/><rect x="121" y="0" width="1" height="898" fill="#262626"/><rect x="127" y="0" width="1" height="898" fill="#262626"/><rect x="134" y="0" width="1" height="898" fill="#262626"/><rect x="141" y="0" width="1" height="898" fill="#262626"/><rect x="148" y="0" width="1" height="898" fill="#262626"/><rect x="155" y="0" width="1" height="898" fill="#262626"/><rect x="162" y="0" width="1" height="898" fill="#474747"/><rect x="168" y="0" width="1" height="898" fill="#262626"/><rect x="175" y="0" width="1" height="898" fill="#262626"/><rect x="182" y="0" width="1" height="898" fill="#262626"/><rect x="189" y="0" width="1" height="898" fill="#262626"/><rect x="196" y="0" width="1" height="898" fill="#262626"/><rect x="203" y="0" width="1" height="898" fill="#262626"/><rect x="209" y="0" width="1" height="898" fill="#262626"/><rect x="216" y="0" width="1" height="898" fill="#262626"/><rect x="223" y="0" width="1" height="898" fill="#262626"/><rect x="230" y="0" width="1" height="898" fill="#474747"/><rect x="237" y="0" width="1" height="898" fill="#262626"/><rect x="243" y="0" width="1" height="898" fill="#262626"/><rect x="250" y="0" width="1" height="898" fill="#262626"/><rect x="257" y="0" width="1" height="898" fill="#262626"/><rect x="264" y="0" width="1" height="898" fill="#262626"/><rect x="271" y="0" width="1" height="898" fill="#262626"/><rect x="278" y="0" width="1" height="898" fill="#262626"/><rect x="284" y="0" width="1" height="898" fill="#262626"/><rect x="291" y="0" width="1" height="898" fill="#262626"/><rect x="298" y="0" width="1" height="898" fill="#474747"/><rect x="305" y="0" width="1" height="898" fill="#262626"/><rect x="312" y="0" width="1" height="898" fill="#262626"/><rect x="319" y="0" width="1" height="898" fill="#262626"/><rect x="325" y="0" width="1" height="898" fill="#262626"/><rect x="332" y="0" width="1" height="898" fill="#262626"/><rect x="339" y="0" width="1" height="898" fill="#262626"/><rect x="346" y="0" width="1" height="898" fill="#262626"/><rect x="353" y="0" width="1" height="898" fill="#262626"/><rect x="360" y="0" width="1" height="898" fill="#262626"/><rect x="366" y="0" width="1" height="898" fill="#474747"/><rect x="373" y="0" width="1" height="898" fill="#262626"/><rect x="380" y="0" width="1" height="898" fill="#262626"/><rect x="387" y="0" width="1" height="898" fill="#262626"/><rect x="394" y="0" width="1" height="898" fill="#262626"/><rect x="400" y="0" width="1" height="898" fill="#262626"/><rect x="407" y="0" width="1" height="898" fill="#262626"/><rect x="414" y="0" width="1" height="898" fill="#262626"/><rect x="421" y="0" width="1" height="898" fill="#262626"/><rect x="428" y="0" width="1" height="898" fill="#262626"/><rect x="435" y="0" width="1" height="898" fill="#474747"/><rect x="441" y="0" width="1" height="898" fill="#262626"/><rect x="448" y="0" width="1" height="898" fill="#262626"/><rect x="455" y="0" width="1" height="898" fill="#262626"/><rect x="462" y="0" width="1" height="898" fill="#262626"/><rect x="469" y="0" width="1" height="898" fill="#262626"/><rect x="476" y="0" width="1" height="898" fill="#262626"/><rect x="482" y="0" width="1" height="898" fill="#262626"/><rect x="489" y="0" width="1" height="898" fill="#262626"/><rect x="496" y="0" width="1" height="898" fill="#262626"/><rect x="503" y="0" width="1" height="898" fill="#474747"/><rect x="510" y="0" width="1" height="898" fill="#262626"/><rect x="517" y="0" width="1" height="898" fill="#262626"/><rect x="523" y="0" width="1" height="898" fill="#262626"/><rect x="530" y="0" width="1" height="898" fill="#262626"/><rect x="537" y="0" width="1" height="898" fill="#262626"/><rect x="544" y="0" width="1" height="898" fill="#262626"/><rect x="551" y="0" width="1" height="898" fill="#262626"/><rect x="558" y="0" width="1" height="898" fill="#262626"/><rect x="564" y="0" width="1" height="898" fill="#262626"/><rect x="571" y="0" width="1" height="898" fill="#474747"/><rect x="578" y="0" width="1" height="898" fill="#262626"/><rect x="585" y="0" width="1" height="898" fill="#262626"/><rect x="592" y="0" width="1" height="898" fill="#262626"/><rect x="598" y="0" width="1" height="898" fill="#262626"/><rect x="605" y="0" width="1" height="898" fill="#262626"/><rect x="612" y="0" width="1" height="898" fill="#262626"/><rect x="619" y="0" width="1" height="898" fill="#262626"/><rect x="626" y="0" width="1" height="898" fill="#262626"/><rect x="633" y="0" width="1" height="898" fill="#262626"/><rect x="639" y="0" width="1" height="898" fill="#474747"/><rect x="646" y="0" width="1" height="898" fill="#262626"/><rect x="653" y="0" width="1" height="898" fill="#262626"/><rect x="660" y="0" width="1" height="898" fill="#262626"/><rect x="667" y="0" width="1" height="898" fill="#262626"/><rect x="674" y="0" width="1" height="898" fill="#262626"/><rect x="680" y="0" width="1" height="898" fill="#262626"/><rect x="687" y="0" width="1" height="898" fill="#262626"/><rect x="694" y="0" width="1" height="898" fill="#262626"/><rect x="701" y="0" width="1" height="898" fill="#262626"/><rect x="708" y="0" width="1" height="898" fill="#474747"/><rect x="715" y="0" width="1" height="898" fill="#262626"/><rect x="721" y="0" width="1" height="898" fill="#262626"/><rect x="728" y="0" width="1" height="898" fill="#262626"/><rect x="735" y="0" width="1" height="898" fill="#262626"/><rect x="742" y="0" width="1" height="898" fill="#262626"/><rect x="749" y="0" width="1" height="898" fill="#262626"/><rect x="755" y="0" width="1" height="898" fill="#262626"/><rect x="762" y="0" width="1" height="898" fill="#262626"/><rect x="769" y="0" width="1" height="898" fill="#262626"/><rect x="776" y="0" width="1" height="898" fill="#474747"/><rect x="783" y="0" width="1" height="898" fill="#262626"/><rect x="790" y="0" width="1" height="898" fill="#262626"/><rect x="796" y="0" width="1" height="898" fill="#262626"/><rect x="803" y="0" width="1" height="898" fill="#262626"/><rect x="810" y="0" width="1" height="898" fill="#262626"/><rect x="817" y="0" width="1" height="898" fill="#262626"/><rect x="824" y="0" width="1" height="898" fill="#262626"/><rect x="831" y="0" width="1" height="898" fill="#262626"/><rect x="837" y="0" width="1" height="898" fill="#262626"/><rect x="844" y="0" width="1" height="898" fill="#474747"/><rect x="851" y="0" width="1" height="898" fill="#262626"/><rect x="858" y="0" width="1" height="898" fill="#262626"/><rect x="865" y="0" width="1" height="898" fill="#262626"/><rect x="872" y="0" width="1" height="898" fill="#262626"/><rect x="878" y="0" width="1" height="898" fill="#262626"/><rect x="885" y="0" width="1" height="898" fill="#262626"/><rect x="892" y="0" width="1" height="898" fill="#262626"/><rect x="899" y="0" width="1" height="898" fill="#262626"/><rect x="906" y="0" width="1" height="898" fill="#262626"/><rect x="913" y="0" width="1" height="898" fill="#474747"/><rect x="919" y="0" width="1" height="898" fill="#262626"/><rect x="926" y="0" width="1" height="898" fill="#262626"/><rect x="933" y="0" width="1" height="898" fill="#262626"/><rect x="940" y="0" width="1" height="898" fill="#262626"/><rect x="947" y="0" width="1" height="898" fill="#262626"/><rect x="953" y="0" width="1" height="898" fill="#262626"/><rect x="960" y="0" width="1" height="898" fill="#262626"/><rect x="967" y="0" width="1" height="898" fill="#262626"/><rect x="974" y="0" width="1" height="898" fill="#262626"/><rect x="981" y="0" width="1" height="898" fill="#474747"/><rect x="988" y="0" width="1" height="898" fill="#262626"/><rect x="994" y="0" width="1" height="898" fill="#262626"/><rect x="1001" y="0" width="1" height="898" fill="#262626"/><rect x="1008" y="0" width="1" height="898" fill="#262626"/><rect x="1015" y="0" width="1" height="898" fill="#262626"/><rect x="1022" y="0" width="1" height="898" fill="#262626"/><rect x="1029" y="0" width="1" height="898" fill="#262626"/><rect x="1035" y="0" width="1" height="898" fill="#262626"/><rect x="1042" y="0" width="1" height="898" fill="#262626"/><rect x="1049" y="0" width="1" height="898" fill="#474747"/><rect x="1056" y="0" width="1" height="898" fill="#262626"/><rect x="1063" y="0" width="1" height="898" fill="#262626"/><rect x="0" y="-6" width="1068" height="1" fill="#474747"/><rect x="0" y="1" width="1068" height="1" fill="#262626"/><rect x="0" y="8" width="1068" height="1" fill="#262626"/><rect x="0" y="14" width="1068" height="1" fill="#262626"/><rect x="0" y="21" width="1068" height="1" fill="#262626"/><rect x="0" y="28" width="1068" height="1" fill="#262626"/><rect x="0" y="35" width="1068" height="1" fill="#262626"/><rect x="0" y="42" width="1068" height="1" fill="#262626"/><rect x="0" y="48" width="1068" height="1" fill="#262626"/><rect x="0" y="55" width="1068" height="1" fill="#262626"/><rect x="0" y="62" width="1068" height="1" fill="#474747"/><rect x="0" y="69" width="1068" height="1" fill="#262626"/><rect x="0" y="76" width="1068" height="1" fill="#262626"/><rect x="0" y="83" width="1068" height="1" fill="#262626"/><rect x="0" y="89" width="1068" height="1" fill="#262626"/><rect x="0" y="96" width="1068" height="1" fill="#262626"/><rect x="0" y="103" width="1068" height="1" fill="#262626"/><rect x="0" y="110" width="1068" height="1" fill="#262626"/><rect x="0" y="117" width="1068" height="1" fill="#262626"/><rect x="0" y="124" width="1068" height="1" fill="#262626"/><rect x="0" y="130" width="1068" height="1" fill="#474747"/><rect x="0" y="137" width="1068" height="1" fill="#262626"/><rect x="0" y="144" width="1068" height="1" fill="#262626"/><rect x="0" y="151" width="1068" height="1" fill="#262626"/><rect x="0" y="158" width="1068" height="1" fill="#262626"/><rect x="0" y="165" width="1068" height="1" fill="#262626"/><rect x="0" y="171" width="1068" height="1" fill="#262626"/><rect x="0" y="178" width="1068" height="1" fill="#262626"/><rect x="0" y="185" width="1068" height="1" fill="#262626"/><rect x="0" y="192" width="1068" height="1" fill="#262626"/><rect x="0" y="199" width="1068" height="1" fill="#474747"/><rect x="0" y="205" width="1068" height="1" fill="#262626"/><rect x="0" y="212" width="1068" height="1" fill="#262626"/><rect x="0" y="219" width="1068" height="1" fill="#262626"/><rect x="0" y="226" width="1068" height="1" fill="#262626"/><rect x="0" y="233" width="1068" height="1" fill="#262626"/><rect x="0" y="240" width="1068" height="1" fill="#262626"/><rect x="0" y="246" width="1068" height="1" fill="#262626"/><rect x="0" y="253" width="1068" height="1" fill="#262626"/><rect x="0" y="260" width="1068" height="1" fill="#262626"/><rect x="0" y="267" width="1068" height="1" fill="#474747"/><rect x="0" y="274" width="1068" height="1" fill="#262626"/><rect x="0" y="281" width="1068" height="1" fill="#262626"/><rect x="0" y="287" width="1068" height="1" fill="#262626"/><rect x="0" y="294" width="1068" height="1" fill="#262626"/><rect x="0" y="301" width="1068" height="1" fill="#262626"/><rect x="0" y="308" width="1068" height="1" fill="#262626"/><rect x="0" y="315" width="1068" height="1" fill="#262626"/><rect x="0" y="322" width="1068" height="1" fill="#262626"/><rect x="0" y="328" width="1068" height="1" fill="#262626"/><rect x="0" y="335" width="1068" height="1" fill="#474747"/><rect x="0" y="342" width="1068" height="1" fill="#262626"/><rect x="0" y="349" width="1068" height="1" fill="#262626"/><rect x="0" y="356" width="1068" height="1" fill="#262626"/><rect x="0" y="363" width="1068" height="1" fill="#262626"/><rect x="0" y="369" width="1068" height="1" fill="#262626"/><rect x="0" y="376" width="1068" height="1" fill="#262626"/><rect x="0" y="383" width="1068" height="1" fill="#262626"/><rect x="0" y="390" width="1068" height="1" fill="#262626"/><rect x="0" y="397" width="1068" height="1" fill="#262626"/><rect x="0" y="403" width="1068" height="1" fill="#474747"/><rect x="0" y="410" width="1068" height="1" fill="#262626"/><rect x="0" y="417" width="1068" height="1" fill="#262626"/><rect x="0" y="424" width="1068" height="1" fill="#262626"/><rect x="0" y="431" width="1068" height="1" fill="#262626"/><rect x="0" y="438" width="1068" height="1" fill="#262626"/><rect x="0" y="444" width="1068" height="1" fill="#262626"/><rect x="0" y="451" width="1068" height="1" fill="#262626"/><rect x="0" y="458" width="1068" height="1" fill="#262626"/><rect x="0" y="465" width="1068" height="1" fill="#262626"/><rect x="0" y="472" width="1068" height="1" fill="#474747"/><rect x="0" y="479" width="1068" height="1" fill="#262626"/><rect x="0" y="485" width="1068" height="1" fill="#262626"/><rect x="0" y="492" width="1068" height="1" fill="#262626"/><rect x="0" y="499" width="1068" height="1" fill="#262626"/><rect x="0" y="506" width="1068" height="1" fill="#262626"/><rect x="0" y="513" width="1068" height="1" fill="#262626"/><rect x="0" y="520" width="1068" height="1" fill="#262626"/><rect x="0" y="526" width="1068" height="1" fill="#262626"/><rect x="0" y="533" width="1068" height="1" fill="#262626"/><rect x="0" y="540" width="1068" height="1" fill="#474747"/><rect x="0" y="547" width="1068" height="1" fill="#262626"/><rect x="0" y="554" width="1068" height="1" fill="#262626"/><rect x="0" y="561" width="1068" height="1" fill="#262626"/><rect x="0" y="567" width="1068" height="1" fill="#262626"/><rect x="0" y="574" width="1068" height="1" fill="#262626"/><rect x="0" y="581" width="1068" height="1" fill="#262626"/><rect x="0" y="588" width="1068" height="1" fill="#262626"/><rect x="0" y="595" width="1068" height="1" fill="#262626"/><rect x="0" y="601" width="1068" height="1" fill="#262626"/><rect x="0" y="608" width="1068" height="1" fill="#474747"/><rect x="0" y="615" width="1068" height="1" fill="#262626"/><rect x="0" y="622" width="1068" height="1" fill="#262626"/><rect x="0" y="629" width="1068" height="1" fill="#262626"/><rect x="0" y="636" width="1068" height="1" fill="#262626"/><rect x="0" y="642" width="1068" height="1" fill="#262626"/><rect x="0" y="649" width="1068" height="1" fill="#262626"/><rect x="0" y="656" width="1068" height="1" fill="#262626"/><rect x="0" y="663" width="1068" height="1" fill="#262626"/><rect x="0" y="670" width="1068" height="1" fill="#262626"/><rect x="0" y="677" width="1068" height="1" fill="#474747"/><rect x="0" y="683" width="1068" height="1" fill="#262626"/><rect x="0" y="690" width="1068" height="1" fill="#262626"/><rect x="0" y="697" width="1068" height="1" fill="#262626"/><rect x="0" y="704" width="1068" height="1" fill="#262626"/><rect x="0" y="711" width="1068" height="1" fill="#262626"/><rect x="0" y="718" width="1068" height="1" fill="#262626"/><rect x="0" y="724" width="1068" height="1" fill="#262626"/><rect x="0" y="731" width="1068" height="1" fill="#262626"/><rect x="0" y="738" width="1068" height="1" fill="#262626"/><rect x="0" y="745" width="1068" height="1" fill="#474747"/><rect x="0" y="752" width="1068" height="1" fill="#262626"/><rect x="0" y="758" width="1068" height="1" fill="#262626"/><rect x="0" y="765" width="1068" height="1" fill="#262626"/><rect x="0" y="772" width="1068" height="1" fill="#262626"/><rect x="0" y="779" width="1068" height="1" fill="#262626"/><rect x="0" y="786" width="1068" height="1" fill="#262626"/><rect x="0" y="793" width="1068" height="1" fill="#262626"/><rect x="0" y="799" width="1068" height="1" fill="#262626"/><rect x="0" y="806" width="1068" height="1" fill="#262626"/><rect x="0" y="813" width="1068" height="1" fill="#474747"/><rect x="0" y="820" width="1068" height="1" fill="#262626"/><rect x="0" y="827" width="1068" height="1" fill="#262626"/><rect x="0" y="834" width="1068" height="1" fill="#262626"/><rect x="0" y="840" width="1068" height="1" fill="#262626"/><rect x="0" y="847" width="1068" height="1" fill="#262626"/><rect x="0" y="854" width="1068" height="1" fill="#262626"/><rect x="0" y="861" width="1068" height="1" fill="#262626"/><rect x="0" y="868" width="1068" height="1" fill="#262626"/><rect x="0" y="875" width="1068" height="1" fill="#262626"/><rect x="0" y="881" width="1068" height="1" fill="#474747"/><rect x="0" y="888" width="1068" height="1" fill="#262626"/><rect x="0" y="895" width="1068" height="1" fill="#262626"/></svg>
<svg class="a" style="left:0;top:0" width="1068" height="898">
<path d="M524.3 4.7 C551.3 4.7 551.3 14.8 578.3 14.8" stroke="#14f514" stroke-width="3.6" fill="none" stroke-linecap="round"/>
<path d="M524.3 24.0 C551.3 24.0 551.3 34.0 578.3 34.0" stroke="#14f514" stroke-width="3.6" fill="none" stroke-linecap="round"/>
<path d="M676.7 70.0 C721.4 70.0 721.4 -72.0 766.0 -72.0" stroke="#14f514" stroke-width="3.6" fill="none" stroke-linecap="round"/>
<path d="M168.2 329.3 C219.9 329.3 219.9 272.6 271.5 272.6" stroke="#14f514" stroke-width="3.6" fill="none" stroke-linecap="round"/>
<path d="M168.2 348.2 C219.9 348.2 219.9 289.8 271.5 289.8" stroke="#14f514" stroke-width="3.6" fill="none" stroke-linecap="round"/>
<path d="M168.2 367.3 C219.9 367.3 219.9 415.5 271.5 415.5" stroke="#14f514" stroke-width="3.6" fill="none" stroke-linecap="round"/>
<path d="M168.2 386.5 C219.9 386.5 219.9 432.7 271.5 432.7" stroke="#14f514" stroke-width="3.6" fill="none" stroke-linecap="round"/>
<path d="M337.8 272.6 C475.5 272.6 475.5 299.8 613.3 299.8" stroke="#14f514" stroke-width="3.6" fill="none" stroke-linecap="round"/>
<path d="M337.8 415.5 C475.5 415.5 475.5 409.8 613.3 409.8" stroke="#14f514" stroke-width="3.6" fill="none" stroke-linecap="round"/>
<path d="M352.9 593.5 C483.1 593.5 483.1 317.0 613.3 317.0" stroke="#14f514" stroke-width="3.6" fill="none" stroke-linecap="round"/>
<path d="M352.9 609.1 C483.1 609.1 483.1 427.0 613.3 427.0" stroke="#14f514" stroke-width="3.6" fill="none" stroke-linecap="round"/>
<path d="M679.6 299.8 C830.4 299.8 830.4 367.4 981.3 367.4" stroke="#14f514" stroke-width="3.6" fill="none" stroke-linecap="round"/>
<path d="M679.6 409.8 C830.4 409.8 830.4 385.8 981.3 385.8" stroke="#14f514" stroke-width="3.6" fill="none" stroke-linecap="round"/>
<path d="M352.9 593.5 C486.2 593.5 486.2 743.2 619.4 743.2" stroke="#14f514" stroke-width="3.6" fill="none" stroke-linecap="round"/>
<path d="M352.9 609.1 C486.2 609.1 486.2 762.0 619.4 762.0" stroke="#14f514" stroke-width="3.6" fill="none" stroke-linecap="round"/>
<path d="M107.4 630.7 C185.9 630.7 185.9 810.4 264.5 810.4" stroke="#14f514" stroke-width="3.6" fill="none" stroke-linecap="round"/>
<path d="M357.1 725.0 C382.7 725.0 382.7 742.6 408.3 742.6" stroke="#14f514" stroke-width="3.6" fill="none" stroke-linecap="round"/>
<path d="M706.4 882.0 C776.1 882.0 776.1 769.4 845.8 769.4" stroke="#14f514" stroke-width="3.6" fill="none" stroke-linecap="round"/>
<path d="M712.0 818.3 C778.9 818.3 778.9 732.4 845.8 732.4" stroke="#1818f0" stroke-width="3.6" fill="none" stroke-linecap="round"/>
<path d="M788.7 223.8 C885.0 223.8 885.0 333.3 981.3 333.3" stroke="#f6f6f6" stroke-width="3.6" fill="none" stroke-linecap="round"/>
<path d="M1037.7 333.3 C1086.8 333.3 1086.8 358.0 1136.0 358.0" stroke="#f6f6f6" stroke-width="3.6" fill="none" stroke-linecap="round"/>
<path d="M174.8 776.8 C219.6 776.8 219.6 777.0 264.5 777.0" stroke="#f6f6f6" stroke-width="3.6" fill="none" stroke-linecap="round"/>
<path d="M367.5 777.0 C387.9 777.0 387.9 709.2 408.3 709.2" stroke="#f6f6f6" stroke-width="3.6" fill="none" stroke-linecap="round"/>
<path d="M367.5 793.8 C387.9 793.8 387.9 839.0 408.3 839.0" stroke="#f6f6f6" stroke-width="3.6" fill="none" stroke-linecap="round"/>
<path d="M511.3 709.2 C565.4 709.2 565.4 709.2 619.4 709.2" stroke="#f6f6f6" stroke-width="3.6" fill="none" stroke-linecap="round"/>
<path d="M712.0 709.2 C778.9 709.2 778.9 716.0 845.8 716.0" stroke="#f6f6f6" stroke-width="3.6" fill="none" stroke-linecap="round"/>
<path d="M923.5 716.0 C959.5 716.0 959.5 716.0 995.5 716.0" stroke="#f6f6f6" stroke-width="3.6" fill="none" stroke-linecap="round"/>
</svg>
<div class="node" style="left:407.8px;top:-60.6px;width:117.0px;height:177.8px">
<div class="tt" style="">Controller Input</div>
<div class="lb" style="left:6.0px;top:21.0px">Left</div>
<div class="fld" style="left:25.2px;top:18.3px;width:45.7px;height:16.0px">-1</div>
<div class="spu" style="left:72.5px;top:18.1px"><svg width="7" height="8" style="position:absolute;left:0;top:0"><path d="M1.6 5 L3.4 3.1 L5.2 5" stroke="#e6e6e6" stroke-width="0.9" fill="none"/></svg></div>
<div class="spd" style="left:72.5px;top:26.9px"><svg width="7" height="8" style="position:absolute;left:0;top:0"><path d="M1.6 3 L3.4 4.9 L5.2 3" stroke="#e6e6e6" stroke-width="0.9" fill="none"/></svg></div>
<div class="pd" style="left:113.7px;top:24.5px;background:#16e016"></div>
<div class="lb" style="left:6.0px;top:39.9px">Right</div>
<div class="fld" style="left:31.7px;top:37.2px;width:44.9px;height:16.0px">1</div>
<div class="spu" style="left:78.2px;top:37.0px"><svg width="7" height="8" style="position:absolute;left:0;top:0"><path d="M1.6 5 L3.4 3.1 L5.2 5" stroke="#e6e6e6" stroke-width="0.9" fill="none"/></svg></div>
<div class="spd" style="left:78.2px;top:45.8px"><svg width="7" height="8" style="position:absolute;left:0;top:0"><path d="M1.6 3 L3.4 4.9 L5.2 3" stroke="#e6e6e6" stroke-width="0.9" fill="none"/></svg></div>
<div class="pd" style="left:113.7px;top:43.4px;background:#16e016"></div>
<div class="lb" style="left:6.0px;top:59.0px">Up</div>
<div class="fld" style="left:20.8px;top:56.3px;width:44.7px;height:16.0px">1</div>
<div class="spu" style="left:67.1px;top:56.1px"><svg width="7" height="8" style="position:absolute;left:0;top:0"><path d="M1.6 5 L3.4 3.1 L5.2 5" stroke="#e6e6e6" stroke-width="0.9" fill="none"/></svg></div>
<div class="spd" style="left:67.1px;top:64.9px"><svg width="7" height="8" style="position:absolute;left:0;top:0"><path d="M1.6 3 L3.4 4.9 L5.2 3" stroke="#e6e6e6" stroke-width="0.9" fill="none"/></svg></div>
<div class="pd" style="left:113.7px;top:62.5px;background:#16e016"></div>
<div class="lb" style="left:6.0px;top:78.2px">Down</div>
<div class="fld" style="left:33.8px;top:75.5px;width:45.8px;height:16.0px">1</div>
<div class="spu" style="left:81.2px;top:75.3px"><svg width="7" height="8" style="position:absolute;left:0;top:0"><path d="M1.6 5 L3.4 3.1 L5.2 5" stroke="#e6e6e6" stroke-width="0.9" fill="none"/></svg></div>
<div class="spd" style="left:81.2px;top:84.1px"><svg width="7" height="8" style="position:absolute;left:0;top:0"><path d="M1.6 3 L3.4 4.9 L5.2 3" stroke="#e6e6e6" stroke-width="0.9" fill="none"/></svg></div>
<div class="pd" style="left:113.7px;top:81.7px;background:#16e016"></div>
<div class="lb" style="left:6.0px;top:97.4px">Jump/Fire</div>
<div class="fld" style="left:52.5px;top:94.7px;width:45.4px;height:16.0px">0</div>
<div class="spu" style="left:99.5px;top:94.5px"><svg width="7" height="8" style="position:absolute;left:0;top:0"><path d="M1.6 5 L3.4 3.1 L5.2 5" stroke="#e6e6e6" stroke-width="0.9" fill="none"/></svg></div>
<div class="spd" style="left:99.5px;top:103.3px"><svg width="7" height="8" style="position:absolute;left:0;top:0"><path d="M1.6 3 L3.4 4.9 L5.2 3" stroke="#e6e6e6" stroke-width="0.9" fill="none"/></svg></div>
<div class="pd" style="left:113.7px;top:100.9px;background:#16e016"></div>
<div class="lb" style="left:6.0px;top:115.1px">Mode</div>
<div class="cb" style="left:35.0px;top:114.9px"><svg width="11" height="11" style="position:absolute;left:-1px;top:-1px"><path d="M2.5 5.8 L4.6 8 L8.6 3" stroke="#e8e8e8" stroke-width="1" fill="none"/></svg></div>
<div class="lb" style="left:48.9px;top:115.1px">Pressed</div>
<div class="cb" style="left:35.0px;top:129.9px"></div>
<div class="lb" style="left:48.9px;top:130.1px">Released</div>
<div class="cb" style="left:35.0px;top:145.0px"></div>
<div class="lb" style="left:48.9px;top:145.2px">Just Pressed</div>
<div class="cb" style="left:35.0px;top:160.2px"></div>
<div class="lb" style="left:48.9px;top:160.4px">Just Released</div>
</div>
<div class="node" style="left:51.7px;top:302.0px;width:117.0px;height:177.8px">
<div class="tt" style="">Controller Input</div>
<div class="lb" style="left:6.0px;top:21.0px">Left</div>
<div class="fld" style="left:25.2px;top:18.3px;width:45.7px;height:16.0px">-1</div>
<div class="spu" style="left:72.5px;top:18.1px"><svg width="7" height="8" style="position:absolute;left:0;top:0"><path d="M1.6 5 L3.4 3.1 L5.2 5" stroke="#e6e6e6" stroke-width="0.9" fill="none"/></svg></div>
<div class="spd" style="left:72.5px;top:26.9px"><svg width="7" height="8" style="position:absolute;left:0;top:0"><path d="M1.6 3 L3.4 4.9 L5.2 3" stroke="#e6e6e6" stroke-width="0.9" fill="none"/></svg></div>
<div class="pd" style="left:113.7px;top:24.5px;background:#16e016"></div>
<div class="lb" style="left:6.0px;top:39.9px">Right</div>
<div class="fld" style="left:31.7px;top:37.2px;width:44.9px;height:16.0px">1</div>
<div class="spu" style="left:78.2px;top:37.0px"><svg width="7" height="8" style="position:absolute;left:0;top:0"><path d="M1.6 5 L3.4 3.1 L5.2 5" stroke="#e6e6e6" stroke-width="0.9" fill="none"/></svg></div>
<div class="spd" style="left:78.2px;top:45.8px"><svg width="7" height="8" style="position:absolute;left:0;top:0"><path d="M1.6 3 L3.4 4.9 L5.2 3" stroke="#e6e6e6" stroke-width="0.9" fill="none"/></svg></div>
<div class="pd" style="left:113.7px;top:43.4px;background:#16e016"></div>
<div class="lb" style="left:6.0px;top:59.0px">Up</div>
<div class="fld" style="left:20.8px;top:56.3px;width:44.7px;height:16.0px">-1</div>
<div class="spu" style="left:67.1px;top:56.1px"><svg width="7" height="8" style="position:absolute;left:0;top:0"><path d="M1.6 5 L3.4 3.1 L5.2 5" stroke="#e6e6e6" stroke-width="0.9" fill="none"/></svg></div>
<div class="spd" style="left:67.1px;top:64.9px"><svg width="7" height="8" style="position:absolute;left:0;top:0"><path d="M1.6 3 L3.4 4.9 L5.2 3" stroke="#e6e6e6" stroke-width="0.9" fill="none"/></svg></div>
<div class="pd" style="left:113.7px;top:62.5px;background:#16e016"></div>
<div class="lb" style="left:6.0px;top:78.2px">Down</div>
<div class="fld" style="left:33.8px;top:75.5px;width:45.8px;height:16.0px">1</div>
<div class="spu" style="left:81.2px;top:75.3px"><svg width="7" height="8" style="position:absolute;left:0;top:0"><path d="M1.6 5 L3.4 3.1 L5.2 5" stroke="#e6e6e6" stroke-width="0.9" fill="none"/></svg></div>
<div class="spd" style="left:81.2px;top:84.1px"><svg width="7" height="8" style="position:absolute;left:0;top:0"><path d="M1.6 3 L3.4 4.9 L5.2 3" stroke="#e6e6e6" stroke-width="0.9" fill="none"/></svg></div>
<div class="pd" style="left:113.7px;top:81.7px;background:#16e016"></div>
<div class="lb" style="left:6.0px;top:97.4px">Jump/Fire</div>
<div class="fld" style="left:52.5px;top:94.7px;width:45.4px;height:16.0px">1</div>
<div class="spu" style="left:99.5px;top:94.5px"><svg width="7" height="8" style="position:absolute;left:0;top:0"><path d="M1.6 5 L3.4 3.1 L5.2 5" stroke="#e6e6e6" stroke-width="0.9" fill="none"/></svg></div>
<div class="spd" style="left:99.5px;top:103.3px"><svg width="7" height="8" style="position:absolute;left:0;top:0"><path d="M1.6 3 L3.4 4.9 L5.2 3" stroke="#e6e6e6" stroke-width="0.9" fill="none"/></svg></div>
<div class="pd" style="left:113.7px;top:100.9px;background:#16e016"></div>
<div class="lb" style="left:6.0px;top:115.1px">Mode</div>
<div class="cb" style="left:35.0px;top:114.9px"><svg width="11" height="11" style="position:absolute;left:-1px;top:-1px"><path d="M2.5 5.8 L4.6 8 L8.6 3" stroke="#e8e8e8" stroke-width="1" fill="none"/></svg></div>
<div class="lb" style="left:48.9px;top:115.1px">Pressed</div>
<div class="cb" style="left:35.0px;top:129.9px"></div>
<div class="lb" style="left:48.9px;top:130.1px">Released</div>
<div class="cb" style="left:35.0px;top:145.0px"></div>
<div class="lb" style="left:48.9px;top:145.2px">Just Pressed</div>
<div class="cb" style="left:35.0px;top:160.2px"></div>
<div class="lb" style="left:48.9px;top:160.4px">Just Released</div>
</div>
<div class="node" style="left:-9.1px;top:527.0px;width:117.0px;height:177.8px">
<div class="tt" style="">Controller Input</div>
<div class="lb" style="left:6.0px;top:21.0px">Left</div>
<div class="fld" style="left:25.2px;top:18.3px;width:45.7px;height:16.0px">-1</div>
<div class="spu" style="left:72.5px;top:18.1px"><svg width="7" height="8" style="position:absolute;left:0;top:0"><path d="M1.6 5 L3.4 3.1 L5.2 5" stroke="#e6e6e6" stroke-width="0.9" fill="none"/></svg></div>
<div class="spd" style="left:72.5px;top:26.9px"><svg width="7" height="8" style="position:absolute;left:0;top:0"><path d="M1.6 3 L3.4 4.9 L5.2 3" stroke="#e6e6e6" stroke-width="0.9" fill="none"/></svg></div>
<div class="pd" style="left:113.7px;top:24.5px;background:#16e016"></div>
<div class="lb" style="left:6.0px;top:39.9px">Right</div>
<div class="fld" style="left:31.7px;top:37.2px;width:44.9px;height:16.0px">1</div>
<div class="spu" style="left:78.2px;top:37.0px"><svg width="7" height="8" style="position:absolute;left:0;top:0"><path d="M1.6 5 L3.4 3.1 L5.2 5" stroke="#e6e6e6" stroke-width="0.9" fill="none"/></svg></div>
<div class="spd" style="left:78.2px;top:45.8px"><svg width="7" height="8" style="position:absolute;left:0;top:0"><path d="M1.6 3 L3.4 4.9 L5.2 3" stroke="#e6e6e6" stroke-width="0.9" fill="none"/></svg></div>
<div class="pd" style="left:113.7px;top:43.4px;background:#16e016"></div>
<div class="lb" style="left:6.0px;top:59.0px">Up</div>
<div class="fld" style="left:20.8px;top:56.3px;width:44.7px;height:16.0px">-1</div>
<div class="spu" style="left:67.1px;top:56.1px"><svg width="7" height="8" style="position:absolute;left:0;top:0"><path d="M1.6 5 L3.4 3.1 L5.2 5" stroke="#e6e6e6" stroke-width="0.9" fill="none"/></svg></div>
<div class="spd" style="left:67.1px;top:64.9px"><svg width="7" height="8" style="position:absolute;left:0;top:0"><path d="M1.6 3 L3.4 4.9 L5.2 3" stroke="#e6e6e6" stroke-width="0.9" fill="none"/></svg></div>
<div class="pd" style="left:113.7px;top:62.5px;background:#16e016"></div>
<div class="lb" style="left:6.0px;top:78.2px">Down</div>
<div class="fld" style="left:33.8px;top:75.5px;width:45.8px;height:16.0px">1</div>
<div class="spu" style="left:81.2px;top:75.3px"><svg width="7" height="8" style="position:absolute;left:0;top:0"><path d="M1.6 5 L3.4 3.1 L5.2 5" stroke="#e6e6e6" stroke-width="0.9" fill="none"/></svg></div>
<div class="spd" style="left:81.2px;top:84.1px"><svg width="7" height="8" style="position:absolute;left:0;top:0"><path d="M1.6 3 L3.4 4.9 L5.2 3" stroke="#e6e6e6" stroke-width="0.9" fill="none"/></svg></div>
<div class="pd" style="left:113.7px;top:81.7px;background:#16e016"></div>
<div class="lb" style="left:6.0px;top:97.4px">Jump/Fire</div>
<div class="fld" style="left:52.5px;top:94.7px;width:45.4px;height:16.0px">1</div>
<div class="spu" style="left:99.5px;top:94.5px"><svg width="7" height="8" style="position:absolute;left:0;top:0"><path d="M1.6 5 L3.4 3.1 L5.2 5" stroke="#e6e6e6" stroke-width="0.9" fill="none"/></svg></div>
<div class="spd" style="left:99.5px;top:103.3px"><svg width="7" height="8" style="position:absolute;left:0;top:0"><path d="M1.6 3 L3.4 4.9 L5.2 3" stroke="#e6e6e6" stroke-width="0.9" fill="none"/></svg></div>
<div class="pd" style="left:113.7px;top:100.9px;background:#16e016"></div>
<div class="lb" style="left:6.0px;top:115.1px">Mode</div>
<div class="cb" style="left:35.0px;top:114.9px"></div>
<div class="lb" style="left:48.9px;top:115.1px">Pressed</div>
<div class="cb" style="left:35.0px;top:129.9px"></div>
<div class="lb" style="left:48.9px;top:130.1px">Released</div>
<div class="cb" style="left:35.0px;top:145.0px"><svg width="11" height="11" style="position:absolute;left:-1px;top:-1px"><path d="M2.5 5.8 L4.6 8 L8.6 3" stroke="#e8e8e8" stroke-width="1" fill="none"/></svg></div>
<div class="lb" style="left:48.9px;top:145.2px">Just Pressed</div>
<div class="cb" style="left:35.0px;top:160.2px"></div>
<div class="lb" style="left:48.9px;top:160.4px">Just Released</div>
</div>
<div class="node" style="left:577.8px;top:-62.5px;width:99.4px;height:144.0px">
<div class="tt" style="">Direction</div>
<div class="lb" style="left:5.8px;top:32.6px">Left</div>
<div class="fld" style="left:33.2px;top:30.2px;width:50.4px;height:15.5px">-1</div>
<div class="spu" style="left:85.2px;top:29.7px"><svg width="7" height="8" style="position:absolute;left:0;top:0"><path d="M1.6 5 L3.4 3.1 L5.2 5" stroke="#e6e6e6" stroke-width="0.9" fill="none"/></svg></div>
<div class="spd" style="left:85.2px;top:38.5px"><svg width="7" height="8" style="position:absolute;left:0;top:0"><path d="M1.6 3 L3.4 4.9 L5.2 3" stroke="#e6e6e6" stroke-width="0.9" fill="none"/></svg></div>
<div class="lb" style="left:5.8px;top:51.8px">Right</div>
<div class="fld" style="left:31.2px;top:49.3px;width:52.4px;height:15.5px">2</div>
<div class="spu" style="left:85.2px;top:48.9px"><svg width="7" height="8" style="position:absolute;left:0;top:0"><path d="M1.6 5 L3.4 3.1 L5.2 5" stroke="#e6e6e6" stroke-width="0.9" fill="none"/></svg></div>
<div class="spd" style="left:85.2px;top:57.7px"><svg width="7" height="8" style="position:absolute;left:0;top:0"><path d="M1.6 3 L3.4 4.9 L5.2 3" stroke="#e6e6e6" stroke-width="0.9" fill="none"/></svg></div>
<div class="lb" style="left:5.8px;top:71.0px">Up</div>
<div class="fld" style="left:20.2px;top:68.6px;width:63.4px;height:15.5px">4</div>
<div class="spu" style="left:85.2px;top:68.1px"><svg width="7" height="8" style="position:absolute;left:0;top:0"><path d="M1.6 5 L3.4 3.1 L5.2 5" stroke="#e6e6e6" stroke-width="0.9" fill="none"/></svg></div>
<div class="spd" style="left:85.2px;top:76.9px"><svg width="7" height="8" style="position:absolute;left:0;top:0"><path d="M1.6 3 L3.4 4.9 L5.2 3" stroke="#e6e6e6" stroke-width="0.9" fill="none"/></svg></div>
<div class="lb" style="left:5.8px;top:90.2px">Down</div>
<div class="fld" style="left:33.2px;top:87.8px;width:50.4px;height:15.5px">3</div>
<div class="spu" style="left:85.2px;top:87.3px"><svg width="7" height="8" style="position:absolute;left:0;top:0"><path d="M1.6 5 L3.4 3.1 L5.2 5" stroke="#e6e6e6" stroke-width="0.9" fill="none"/></svg></div>
<div class="spd" style="left:85.2px;top:96.1px"><svg width="7" height="8" style="position:absolute;left:0;top:0"><path d="M1.6 3 L3.4 4.9 L5.2 3" stroke="#e6e6e6" stroke-width="0.9" fill="none"/></svg></div>
<div class="lb" style="left:5.8px;top:109.2px">None</div>
<div class="fld" style="left:31.2px;top:106.8px;width:52.4px;height:15.5px">0</div>
<div class="spu" style="left:85.2px;top:106.3px"><svg width="7" height="8" style="position:absolute;left:0;top:0"><path d="M1.6 5 L3.4 3.1 L5.2 5" stroke="#e6e6e6" stroke-width="0.9" fill="none"/></svg></div>
<div class="spd" style="left:85.2px;top:115.1px"><svg width="7" height="8" style="position:absolute;left:0;top:0"><path d="M1.6 3 L3.4 4.9 L5.2 3" stroke="#e6e6e6" stroke-width="0.9" fill="none"/></svg></div>
<div class="lb" style="right:5.7px;top:126.2px">Direction</div>
</div>
<div class="node" style="left:271.0px;top:246.6px;width:67.3px;height:74.8px">
<div class="tt" style="">Math</div>
<div class="lb" style="left:5.5px;top:19.7px">A</div>
<div class="lb" style="left:5.5px;top:36.9px">B</div>
<div class="lb" style="right:5.6px;top:19.7px">Result</div>
<div class="dd" style="left:5.2px;top:53.5px;width:55.0px;height:15.7px">Add<svg width="5" height="4" style="position:absolute;right:1px;top:6px"><path d="M0.7 0.7 L2.2 2.2 L3.7 0.7" stroke="#a0a0a0" stroke-width="0.7" fill="none"/></svg></div>
</div>
<div class="node" style="left:271.0px;top:389.5px;width:67.3px;height:74.8px">
<div class="tt" style="">Math</div>
<div class="lb" style="left:5.5px;top:19.7px">A</div>
<div class="lb" style="left:5.5px;top:36.9px">B</div>
<div class="lb" style="right:5.6px;top:19.7px">Result</div>
<div class="dd" style="left:5.2px;top:53.5px;width:55.0px;height:15.7px">Add<svg width="5" height="4" style="position:absolute;right:1px;top:6px"><path d="M0.7 0.7 L2.2 2.2 L3.7 0.7" stroke="#a0a0a0" stroke-width="0.7" fill="none"/></svg></div>
</div>
<div class="node" style="left:612.8px;top:273.8px;width:67.3px;height:74.8px">
<div class="tt" style="">Math</div>
<div class="lb" style="left:5.5px;top:19.7px">A</div>
<div class="lb" style="left:5.5px;top:36.9px">B</div>
<div class="lb" style="right:5.6px;top:19.7px">Result</div>
<div class="dd" style="left:5.2px;top:53.5px;width:55.0px;height:15.7px">Add<svg width="5" height="4" style="position:absolute;right:1px;top:6px"><path d="M0.7 0.7 L2.2 2.2 L3.7 0.7" stroke="#a0a0a0" stroke-width="0.7" fill="none"/></svg></div>
</div>
<div class="node" style="left:612.8px;top:383.8px;width:67.3px;height:74.8px">
<div class="tt" style="">Math</div>
<div class="lb" style="left:5.5px;top:19.7px">A</div>
<div class="lb" style="left:5.5px;top:36.9px">B</div>
<div class="lb" style="right:5.6px;top:19.7px">Result</div>
<div class="dd" style="left:5.2px;top:53.5px;width:55.0px;height:15.7px">Add<svg width="5" height="4" style="position:absolute;right:1px;top:6px"><path d="M0.7 0.7 L2.2 2.2 L3.7 0.7" stroke="#a0a0a0" stroke-width="0.7" fill="none"/></svg></div>
</div>
<div class="node" style="left:693.9px;top:198.8px;width:95.3px;height:75.2px">
<div class="tt" style="background:#27276e;color:#c8c8dc;">Always</div>
<svg width="10" height="9" style="position:absolute;left:92.3px;top:19.5px;overflow:visible"><rect x="0" y="1.3" width="2.5" height="6.4" fill="#f4f4f4"/><path d="M2.5 0.8 L8.5 4.5 L2.5 8.2 Z" fill="#f4f4f4"/></svg>
<div class="lb" style="left:5.6px;top:37.4px">Order</div>
<div class="fld" style="left:34.1px;top:34.7px;width:45.4px;height:16.0px">0</div>
<div class="spu" style="left:81.1px;top:34.5px"><svg width="7" height="8" style="position:absolute;left:0;top:0"><path d="M1.6 5 L3.4 3.1 L5.2 5" stroke="#e6e6e6" stroke-width="0.9" fill="none"/></svg></div>
<div class="spd" style="left:81.1px;top:43.3px"><svg width="7" height="8" style="position:absolute;left:0;top:0"><path d="M1.6 3 L3.4 4.9 L5.2 3" stroke="#e6e6e6" stroke-width="0.9" fill="none"/></svg></div>
<div class="lb" style="left:5.6px;top:56.4px">Skip</div>
<div class="fld" style="left:26.1px;top:53.7px;width:45.8px;height:16.0px">0</div>
<div class="spu" style="left:73.5px;top:53.5px"><svg width="7" height="8" style="position:absolute;left:0;top:0"><path d="M1.6 5 L3.4 3.1 L5.2 5" stroke="#e6e6e6" stroke-width="0.9" fill="none"/></svg></div>
<div class="spd" style="left:73.5px;top:62.3px"><svg width="7" height="8" style="position:absolute;left:0;top:0"><path d="M1.6 3 L3.4 4.9 L5.2 3" stroke="#e6e6e6" stroke-width="0.9" fill="none"/></svg></div>
</div>
<div class="node" style="left:80.0px;top:751.8px;width:95.3px;height:75.2px">
<div class="tt" style="background:#27276e;color:#c8c8dc;">Always</div>
<svg width="10" height="9" style="position:absolute;left:92.3px;top:19.5px;overflow:visible"><rect x="0" y="1.3" width="2.5" height="6.4" fill="#f4f4f4"/><path d="M2.5 0.8 L8.5 4.5 L2.5 8.2 Z" fill="#f4f4f4"/></svg>
<div class="lb" style="left:5.6px;top:37.4px">Order</div>
<div class="fld" style="left:34.1px;top:34.7px;width:45.4px;height:16.0px">0</div>
<div class="spu" style="left:81.1px;top:34.5px"><svg width="7" height="8" style="position:absolute;left:0;top:0"><path d="M1.6 5 L3.4 3.1 L5.2 5" stroke="#e6e6e6" stroke-width="0.9" fill="none"/></svg></div>
<div class="spd" style="left:81.1px;top:43.3px"><svg width="7" height="8" style="position:absolute;left:0;top:0"><path d="M1.6 3 L3.4 4.9 L5.2 3" stroke="#e6e6e6" stroke-width="0.9" fill="none"/></svg></div>
<div class="lb" style="left:5.6px;top:56.4px">Skip</div>
<div class="fld" style="left:26.1px;top:53.7px;width:45.8px;height:16.0px">0</div>
<div class="spu" style="left:73.5px;top:53.5px"><svg width="7" height="8" style="position:absolute;left:0;top:0"><path d="M1.6 5 L3.4 3.1 L5.2 5" stroke="#e6e6e6" stroke-width="0.9" fill="none"/></svg></div>
<div class="spd" style="left:73.5px;top:62.3px"><svg width="7" height="8" style="position:absolute;left:0;top:0"><path d="M1.6 3 L3.4 4.9 L5.2 3" stroke="#e6e6e6" stroke-width="0.9" fill="none"/></svg></div>
</div>
<div class="node" style="left:980.8px;top:307.6px;width:57.4px;height:91.6px">
<div class="tt" style="">Move Object</div>
<svg width="10" height="9" style="position:absolute;left:-2.0px;top:20.2px;overflow:visible"><rect x="0" y="1.3" width="2.5" height="6.4" fill="#f4f4f4"/><path d="M2.5 0.8 L8.5 4.5 L2.5 8.2 Z" fill="#f4f4f4"/></svg>
<svg width="10" height="9" style="position:absolute;left:54.4px;top:20.2px;overflow:visible"><rect x="0" y="1.3" width="2.5" height="6.4" fill="#f4f4f4"/><path d="M2.5 0.8 L8.5 4.5 L2.5 8.2 Z" fill="#f4f4f4"/></svg>
<div class="pd" style="left:-2.3px;top:39.1px;background:#1010f0"></div>
<div class="lb" style="left:5.5px;top:35.6px">Ref</div>
<div class="lb" style="left:5.5px;top:53.5px">X</div>
<div class="lb" style="left:5.5px;top:71.9px">Y</div>
</div>
<div class="node" style="left:285.0px;top:519.8px;width:68.4px;height:101.3px">
<div class="tt" style="">Object Position</div>
<div class="pd" style="left:-2.3px;top:22.8px;background:#1010f0"></div>
<div class="pd" style="left:65.1px;top:38.8px;background:#16e016"></div>
<div class="pd" style="left:65.1px;top:54.7px;background:#16e016"></div>
<div class="lb" style="left:5.5px;top:19.3px">Ref</div>
<div class="lb" style="left:5.5px;top:35.3px">Start X</div>
<div class="lb" style="left:5.5px;top:51.2px">Start Y</div>
<div class="lb" style="left:5.5px;top:67.4px">X</div>
<div class="lb" style="left:5.5px;top:83.0px">Y</div>
</div>
<div class="node" style="left:407.8px;top:684.0px;width:104.0px;height:108.1px">
<div class="tt" style="">If</div>
<svg width="10" height="9" style="position:absolute;left:-2.0px;top:19.7px;overflow:visible"><rect x="0" y="1.3" width="2.5" height="6.4" fill="#f4f4f4"/><path d="M2.5 0.8 L8.5 4.5 L2.5 8.2 Z" fill="#f4f4f4"/></svg>
<div class="lb" style="right:6.5px;top:18.9px">True</div>
<svg width="10" height="9" style="position:absolute;left:101.0px;top:19.7px;overflow:visible"><rect x="0" y="1.3" width="2.5" height="6.4" fill="#f4f4f4"/><path d="M2.5 0.8 L8.5 4.5 L2.5 8.2 Z" fill="#f4f4f4"/></svg>
<div class="lb" style="right:6.5px;top:35.7px">False</div>
<svg width="10" height="9" style="position:absolute;left:101.0px;top:36.5px;overflow:visible"><rect x="0" y="1.3" width="2.5" height="6.4" fill="#f4f4f4"/><path d="M2.5 0.8 L8.5 4.5 L2.5 8.2 Z" fill="#f4f4f4"/></svg>
<div class="lb" style="left:5.5px;top:52.3px">A</div>
<div class="lb" style="left:5.5px;top:69.7px">B</div>
<div class="pd" style="left:-2.3px;top:73.2px;background:#16e016"></div>
<div class="fld" style="left:13.5px;top:67.0px;width:45.0px;height:16.0px">0</div>
<div class="spu" style="left:60.1px;top:66.8px"><svg width="7" height="8" style="position:absolute;left:0;top:0"><path d="M1.6 5 L3.4 3.1 L5.2 5" stroke="#e6e6e6" stroke-width="0.9" fill="none"/></svg></div>
<div class="spd" style="left:60.1px;top:75.6px"><svg width="7" height="8" style="position:absolute;left:0;top:0"><path d="M1.6 3 L3.4 4.9 L5.2 3" stroke="#e6e6e6" stroke-width="0.9" fill="none"/></svg></div>
<div class="dd" style="left:5.5px;top:86.3px;width:91.4px;height:16.4px">Equals<svg width="5" height="4" style="position:absolute;right:1px;top:6px"><path d="M0.7 0.7 L2.2 2.2 L3.7 0.7" stroke="#a0a0a0" stroke-width="0.7" fill="none"/></svg></div>
</div>
<div class="node" style="left:264.0px;top:751.8px;width:104.0px;height:108.1px">
<div class="tt" style="">If</div>
<svg width="10" height="9" style="position:absolute;left:-2.0px;top:19.7px;overflow:visible"><rect x="0" y="1.3" width="2.5" height="6.4" fill="#f4f4f4"/><path d="M2.5 0.8 L8.5 4.5 L2.5 8.2 Z" fill="#f4f4f4"/></svg>
<div class="lb" style="right:6.5px;top:18.9px">True</div>
<svg width="10" height="9" style="position:absolute;left:101.0px;top:19.7px;overflow:visible"><rect x="0" y="1.3" width="2.5" height="6.4" fill="#f4f4f4"/><path d="M2.5 0.8 L8.5 4.5 L2.5 8.2 Z" fill="#f4f4f4"/></svg>
<div class="lb" style="right:6.5px;top:35.7px">False</div>
<svg width="10" height="9" style="position:absolute;left:101.0px;top:36.5px;overflow:visible"><rect x="0" y="1.3" width="2.5" height="6.4" fill="#f4f4f4"/><path d="M2.5 0.8 L8.5 4.5 L2.5 8.2 Z" fill="#f4f4f4"/></svg>
<div class="lb" style="left:5.5px;top:52.3px">A</div>
<div class="lb" style="left:5.5px;top:69.7px">B</div>
<div class="pd" style="left:-2.3px;top:73.2px;background:#16e016"></div>
<div class="fld" style="left:13.5px;top:67.0px;width:45.0px;height:16.0px">0</div>
<div class="spu" style="left:60.1px;top:66.8px"><svg width="7" height="8" style="position:absolute;left:0;top:0"><path d="M1.6 5 L3.4 3.1 L5.2 5" stroke="#e6e6e6" stroke-width="0.9" fill="none"/></svg></div>
<div class="spd" style="left:60.1px;top:75.6px"><svg width="7" height="8" style="position:absolute;left:0;top:0"><path d="M1.6 3 L3.4 4.9 L5.2 3" stroke="#e6e6e6" stroke-width="0.9" fill="none"/></svg></div>
<div class="dd" style="left:5.5px;top:86.3px;width:91.4px;height:16.4px">Not Equal<svg width="5" height="4" style="position:absolute;right:1px;top:6px"><path d="M0.7 0.7 L2.2 2.2 L3.7 0.7" stroke="#a0a0a0" stroke-width="0.7" fill="none"/></svg></div>
</div>
<div class="node" style="left:263.7px;top:697.9px;width:93.9px;height:59.5px;z-index:2">
<div class="tt" style="">Get Variable</div>
<div class="dd" style="left:5.5px;top:18.3px;width:81.4px;height:16.3px">DID_SHOOT<svg width="5" height="4" style="position:absolute;right:1px;top:6px"><path d="M0.7 0.7 L2.2 2.2 L3.7 0.7" stroke="#a0a0a0" stroke-width="0.7" fill="none"/></svg></div>
<div class="lb" style="left:5.5px;top:39.9px">Index</div>
<div class="pd" style="left:-2.3px;top:43.4px;background:#16e016"></div>
<div class="fld" style="left:32.5px;top:37.2px;width:46.2px;height:16.0px">0</div>
<div class="spu" style="left:80.3px;top:37.0px"><svg width="7" height="8" style="position:absolute;left:0;top:0"><path d="M1.6 5 L3.4 3.1 L5.2 5" stroke="#e6e6e6" stroke-width="0.9" fill="none"/></svg></div>
<div class="spd" style="left:80.3px;top:45.8px"><svg width="7" height="8" style="position:absolute;left:0;top:0"><path d="M1.6 3 L3.4 4.9 L5.2 3" stroke="#e6e6e6" stroke-width="0.9" fill="none"/></svg></div>
</div>
<div class="node" style="left:613.0px;top:854.8px;width:93.9px;height:59.5px">
<div class="tt" style="">Get Variable</div>
<div class="dd" style="left:5.5px;top:18.3px;width:81.4px;height:16.3px">FACING<svg width="5" height="4" style="position:absolute;right:1px;top:6px"><path d="M0.7 0.7 L2.2 2.2 L3.7 0.7" stroke="#a0a0a0" stroke-width="0.7" fill="none"/></svg></div>
<div class="lb" style="left:5.5px;top:39.9px">Index</div>
<div class="pd" style="left:-2.3px;top:43.4px;background:#16e016"></div>
<div class="fld" style="left:32.5px;top:37.2px;width:46.2px;height:16.0px">0</div>
<div class="spu" style="left:80.3px;top:37.0px"><svg width="7" height="8" style="position:absolute;left:0;top:0"><path d="M1.6 5 L3.4 3.1 L5.2 5" stroke="#e6e6e6" stroke-width="0.9" fill="none"/></svg></div>
<div class="spd" style="left:80.3px;top:45.8px"><svg width="7" height="8" style="position:absolute;left:0;top:0"><path d="M1.6 3 L3.4 4.9 L5.2 3" stroke="#e6e6e6" stroke-width="0.9" fill="none"/></svg></div>
</div>
<div class="node" style="left:1042.6px;top:574.7px;width:93.9px;height:59.5px">
<div class="tt" style="">Get Variable</div>
<div class="dd" style="left:5.5px;top:18.3px;width:81.4px;height:16.3px">DIR<svg width="5" height="4" style="position:absolute;right:1px;top:6px"><path d="M0.7 0.7 L2.2 2.2 L3.7 0.7" stroke="#a0a0a0" stroke-width="0.7" fill="none"/></svg></div>
<div class="lb" style="left:5.5px;top:39.9px">Index</div>
<div class="pd" style="left:-2.3px;top:43.4px;background:#16e016"></div>
<div class="fld" style="left:32.5px;top:37.2px;width:46.2px;height:16.0px">0</div>
<div class="spu" style="left:80.3px;top:37.0px"><svg width="7" height="8" style="position:absolute;left:0;top:0"><path d="M1.6 5 L3.4 3.1 L5.2 5" stroke="#e6e6e6" stroke-width="0.9" fill="none"/></svg></div>
<div class="spd" style="left:80.3px;top:45.8px"><svg width="7" height="8" style="position:absolute;left:0;top:0"><path d="M1.6 3 L3.4 4.9 L5.2 3" stroke="#e6e6e6" stroke-width="0.9" fill="none"/></svg></div>
</div>
<div class="node" style="left:407.8px;top:813.9px;width:94.0px;height:94.3px">
<div class="tt" style="">Set Variable</div>
<svg width="10" height="9" style="position:absolute;left:-2.0px;top:19.6px;overflow:visible"><rect x="0" y="1.3" width="2.5" height="6.4" fill="#f4f4f4"/><path d="M2.5 0.8 L8.5 4.5 L2.5 8.2 Z" fill="#f4f4f4"/></svg>
<svg width="10" height="9" style="position:absolute;left:91.0px;top:19.6px;overflow:visible"><rect x="0" y="1.3" width="2.5" height="6.4" fill="#f4f4f4"/><path d="M2.5 0.8 L8.5 4.5 L2.5 8.2 Z" fill="#f4f4f4"/></svg>
<div class="lb" style="left:5.5px;top:37.1px">Value</div>
<div class="pd" style="left:-2.3px;top:40.6px;background:#16e016"></div>
<div class="fld" style="left:32.7px;top:34.4px;width:45.8px;height:16.0px">0</div>
<div class="spu" style="left:80.1px;top:34.2px"><svg width="7" height="8" style="position:absolute;left:0;top:0"><path d="M1.6 5 L3.4 3.1 L5.2 5" stroke="#e6e6e6" stroke-width="0.9" fill="none"/></svg></div>
<div class="spd" style="left:80.1px;top:43.0px"><svg width="7" height="8" style="position:absolute;left:0;top:0"><path d="M1.6 3 L3.4 4.9 L5.2 3" stroke="#e6e6e6" stroke-width="0.9" fill="none"/></svg></div>
<div class="dd" style="left:5.5px;top:54.4px;width:81.1px;height:15.2px">DID_SHOOT<svg width="5" height="4" style="position:absolute;right:1px;top:6px"><path d="M0.7 0.7 L2.2 2.2 L3.7 0.7" stroke="#a0a0a0" stroke-width="0.7" fill="none"/></svg></div>
<div class="lb" style="left:5.5px;top:75.2px">Index</div>
<div class="pd" style="left:-2.3px;top:78.7px;background:#16e016"></div>
<div class="fld" style="left:32.7px;top:72.5px;width:45.8px;height:16.0px">0</div>
<div class="spu" style="left:80.1px;top:72.3px"><svg width="7" height="8" style="position:absolute;left:0;top:0"><path d="M1.6 5 L3.4 3.1 L5.2 5" stroke="#e6e6e6" stroke-width="0.9" fill="none"/></svg></div>
<div class="spd" style="left:80.1px;top:81.1px"><svg width="7" height="8" style="position:absolute;left:0;top:0"><path d="M1.6 3 L3.4 4.9 L5.2 3" stroke="#e6e6e6" stroke-width="0.9" fill="none"/></svg></div>
</div>
<div class="node" style="left:995.0px;top:691.0px;width:94.0px;height:94.3px">
<div class="tt" style="">Set Variable</div>
<svg width="10" height="9" style="position:absolute;left:-2.0px;top:19.6px;overflow:visible"><rect x="0" y="1.3" width="2.5" height="6.4" fill="#f4f4f4"/><path d="M2.5 0.8 L8.5 4.5 L2.5 8.2 Z" fill="#f4f4f4"/></svg>
<svg width="10" height="9" style="position:absolute;left:91.0px;top:19.6px;overflow:visible"><rect x="0" y="1.3" width="2.5" height="6.4" fill="#f4f4f4"/><path d="M2.5 0.8 L8.5 4.5 L2.5 8.2 Z" fill="#f4f4f4"/></svg>
<div class="lb" style="left:5.5px;top:37.1px">Value</div>
<div class="pd" style="left:-2.3px;top:40.6px;background:#16e016"></div>
<div class="fld" style="left:32.7px;top:34.4px;width:45.8px;height:16.0px">1</div>
<div class="spu" style="left:80.1px;top:34.2px"><svg width="7" height="8" style="position:absolute;left:0;top:0"><path d="M1.6 5 L3.4 3.1 L5.2 5" stroke="#e6e6e6" stroke-width="0.9" fill="none"/></svg></div>
<div class="spd" style="left:80.1px;top:43.0px"><svg width="7" height="8" style="position:absolute;left:0;top:0"><path d="M1.6 3 L3.4 4.9 L5.2 3" stroke="#e6e6e6" stroke-width="0.9" fill="none"/></svg></div>
<div class="dd" style="left:5.5px;top:54.4px;width:81.1px;height:15.2px">DID_SHOOT<svg width="5" height="4" style="position:absolute;right:1px;top:6px"><path d="M0.7 0.7 L2.2 2.2 L3.7 0.7" stroke="#a0a0a0" stroke-width="0.7" fill="none"/></svg></div>
<div class="lb" style="left:5.5px;top:75.2px">Index</div>
<div class="pd" style="left:-2.3px;top:78.7px;background:#16e016"></div>
<div class="fld" style="left:32.7px;top:72.5px;width:45.8px;height:16.0px">0</div>
<div class="spu" style="left:80.1px;top:72.3px"><svg width="7" height="8" style="position:absolute;left:0;top:0"><path d="M1.6 5 L3.4 3.1 L5.2 5" stroke="#e6e6e6" stroke-width="0.9" fill="none"/></svg></div>
<div class="spd" style="left:80.1px;top:81.1px"><svg width="7" height="8" style="position:absolute;left:0;top:0"><path d="M1.6 3 L3.4 4.9 L5.2 3" stroke="#e6e6e6" stroke-width="0.9" fill="none"/></svg></div>
</div>
<div class="node" style="left:618.9px;top:684.0px;width:93.6px;height:144.7px">
<div class="tt" style="">Spawn Object</div>
<svg width="10" height="9" style="position:absolute;left:-2.0px;top:19.7px;overflow:visible"><rect x="0" y="1.3" width="2.5" height="6.4" fill="#f4f4f4"/><path d="M2.5 0.8 L8.5 4.5 L2.5 8.2 Z" fill="#f4f4f4"/></svg>
<div class="lb" style="right:6.7px;top:18.9px">Success</div>
<svg width="10" height="9" style="position:absolute;left:90.6px;top:19.7px;overflow:visible"><rect x="0" y="1.3" width="2.5" height="6.4" fill="#f4f4f4"/><path d="M2.5 0.8 L8.5 4.5 L2.5 8.2 Z" fill="#f4f4f4"/></svg>
<div class="lb" style="right:6.7px;top:35.7px">Fail</div>
<svg width="10" height="9" style="position:absolute;left:90.6px;top:36.5px;overflow:visible"><rect x="0" y="1.3" width="2.5" height="6.4" fill="#f4f4f4"/><path d="M2.5 0.8 L8.5 4.5 L2.5 8.2 Z" fill="#f4f4f4"/></svg>
<div class="lb" style="left:5.5px;top:52.9px">X</div>
<div class="lb" style="left:5.5px;top:71.7px">Y</div>
<div class="lb" style="left:5.5px;top:90.8px">Plane</div>
<div class="pd" style="left:-2.3px;top:94.3px;background:#16e016"></div>
<div class="fld" style="left:32.5px;top:88.1px;width:45.7px;height:16.0px">0</div>
<div class="spu" style="left:79.8px;top:87.9px"><svg width="7" height="8" style="position:absolute;left:0;top:0"><path d="M1.6 5 L3.4 3.1 L5.2 5" stroke="#e6e6e6" stroke-width="0.9" fill="none"/></svg></div>
<div class="spd" style="left:79.8px;top:96.7px"><svg width="7" height="8" style="position:absolute;left:0;top:0"><path d="M1.6 3 L3.4 4.9 L5.2 3" stroke="#e6e6e6" stroke-width="0.9" fill="none"/></svg></div>
<div class="dd" style="left:5.4px;top:107.6px;width:81.1px;height:16.4px">Bullet<svg width="5" height="4" style="position:absolute;right:1px;top:6px"><path d="M0.7 0.7 L2.2 2.2 L3.7 0.7" stroke="#a0a0a0" stroke-width="0.7" fill="none"/></svg></div>
<div class="lb" style="right:5.5px;top:128.0px">Spawn Ref</div>
<svg width="11" height="12" style="position:absolute;left:80.5px;top:0.6px"><path d="M3.3 2.6 Q3.3 1.7 4.2 1.7 H8.3 Q9.3 1.7 9.3 2.8 V8.6 Q9.3 10.9 7.2 10.9 H5 Q4 10.9 3.4 10.2 L0.4 6.9 Q0 6.2 0.8 5.8 L2.2 5.8 L3.3 6.8 Z" fill="#139a13"/><path d="M5.5 2.3 V5.5 M7.6 2.8 V5.5" stroke="#3cb83c" stroke-width="0.8"/></svg>
</div>
<div class="node" style="left:845.3px;top:691.0px;width:78.7px;height:110.1px">
<div class="tt" style="background:#c800c8;color:#f0d0f0;">Message Object</div>
<svg width="10" height="9" style="position:absolute;left:-2.0px;top:19.5px;overflow:visible"><rect x="0" y="1.3" width="2.5" height="6.4" fill="#f4f4f4"/><path d="M2.5 0.8 L8.5 4.5 L2.5 8.2 Z" fill="#f4f4f4"/></svg>
<svg width="10" height="9" style="position:absolute;left:75.7px;top:19.5px;overflow:visible"><rect x="0" y="1.3" width="2.5" height="6.4" fill="#f4f4f4"/><path d="M2.5 0.8 L8.5 4.5 L2.5 8.2 Z" fill="#f4f4f4"/></svg>
<div class="lb" style="left:5.5px;top:35.1px">Ref</div>
<div class="lb" style="left:5.5px;top:53.3px">ID</div>
<div class="pd" style="left:-2.3px;top:56.8px;background:#16e016"></div>
<div class="fld" style="left:16.7px;top:50.6px;width:45.0px;height:16.0px">0</div>
<div class="spu" style="left:63.3px;top:50.4px"><svg width="7" height="8" style="position:absolute;left:0;top:0"><path d="M1.6 5 L3.4 3.1 L5.2 5" stroke="#e6e6e6" stroke-width="0.9" fill="none"/></svg></div>
<div class="spd" style="left:63.3px;top:59.2px"><svg width="7" height="8" style="position:absolute;left:0;top:0"><path d="M1.6 3 L3.4 4.9 L5.2 3" stroke="#e6e6e6" stroke-width="0.9" fill="none"/></svg></div>
<div class="lb" style="left:5.5px;top:72.1px">P1</div>
<div class="lb" style="left:5.5px;top:91.1px">P2</div>
<div class="pd" style="left:-2.3px;top:94.6px;background:#16e016"></div>
<div class="fld" style="left:18.2px;top:88.4px;width:45.5px;height:16.0px">0</div>
<div class="spu" style="left:65.3px;top:88.2px"><svg width="7" height="8" style="position:absolute;left:0;top:0"><path d="M1.6 5 L3.4 3.1 L5.2 5" stroke="#e6e6e6" stroke-width="0.9" fill="none"/></svg></div>
<div class="spd" style="left:65.3px;top:97.0px"><svg width="7" height="8" style="position:absolute;left:0;top:0"><path d="M1.6 3 L3.4 4.9 L5.2 3" stroke="#e6e6e6" stroke-width="0.9" fill="none"/></svg></div>
</div>
<div class="a" style="left:10px;top:10.5px;width:526px;height:33.5px;background:rgba(48,48,48,0.55);border-radius:4px"></div>
<div class="a" style="left:23px;top:17px;font-size:16px;line-height:20px;color:#f0f0f0;letter-spacing:-0.8px;-webkit-text-stroke:0.2px #f0f0f0">34%</div>
<div class="a" style="left:66px;top:12px;width:36px;height:31px;background:#8c8c8c;border-radius:5px"><svg width="36" height="31" style="position:absolute;left:0;top:0"><circle cx="18" cy="15" r="7" fill="#fff"/><rect x="14.2" y="13.8" width="7.6" height="2.5" fill="#000"/></svg></div>
<div class="a" style="left:106px;top:12px;width:36px;height:31px;background:#8c8c8c;border-radius:5px"><svg width="36" height="31" style="position:absolute;left:0;top:0"><circle cx="18" cy="15" r="7" fill="#fff"/><path d="M15.5 12.6 L18.6 10.8 V19.4" stroke="#000" stroke-width="2.4" fill="none" stroke-linejoin="bevel"/></svg></div>
<div class="a" style="left:146px;top:12px;width:36px;height:31px;background:#8c8c8c;border-radius:5px"><svg width="36" height="31" style="position:absolute;left:0;top:0"><circle cx="18" cy="15" r="7" fill="#fff"/><path d="M18 11 V19 M14 15 H22" stroke="#000" stroke-width="2.5"/></svg></div>
<div class="a" style="left:186px;top:12px;width:36px;height:31px;background:#5a5a5a;border-radius:5px"><svg width="36" height="31" style="position:absolute;left:0;top:0"><path d="M13.8 6.7 V21.2 M21.9 6.7 V13.2 M10 11 H24 M10 17.4 H15.4" stroke="#9a9a9a" stroke-width="1.4"/><ellipse cx="20.8" cy="18" rx="4.6" ry="2.9" fill="none" stroke="#e0e0e0" stroke-width="1.3"/><circle cx="20.8" cy="18" r="1.3" fill="#e0e0e0"/></svg></div>
<div class="a" style="left:226px;top:12px;width:36px;height:31px;background:#5a5a5a;border-radius:5px"><svg width="36" height="31" style="position:absolute;left:0;top:0"><path d="M13.8 6.7 V21.2 M21.9 6.7 V13.2 M10 11 H24 M10 17.4 H15.4" stroke="#9a9a9a" stroke-width="1.4"/><path d="M17 22 V18.5 A4 4 0 0 1 25 18.5 V22" stroke="#fff" stroke-width="2.2" fill="none"/></svg></div>
<div class="a" style="left:266px;top:12px;width:68px;height:30px;background:#1e1e1e;border-radius:4px;font-size:18px;line-height:30px;padding-left:4px;color:#e8e8e8;box-shadow:0 1px 0 #151515">20</div>
<svg class="a" style="left:339px;top:16px" width="10" height="22"><path d="M1 5.5 L5 1.5 L9 5.5 M1 16.5 L5 20.5 L9 16.5" stroke="#e8e8e8" stroke-width="1.5" fill="none"/></svg>
<div class="a" style="left:356px;top:12px;width:36px;height:31px;background:#5a5a5a;border-radius:5px"><svg width="36" height="31" style="position:absolute;left:0;top:0"><path d="M11 9 Q15 8 18 9.5 Q21 8 25 9 V22 Q21 21 18 22.5 Q15 21 11 22 Z" fill="none" stroke="#9a9a9a" stroke-width="1.3"/><path d="M11 13.3 Q15 12.3 18 13.8 Q21 12.3 25 13.3 M11 17.6 Q15 16.6 18 18.1 Q21 16.6 25 17.6 M14.5 8.8 V21.5 M18 9.5 V22.5 M21.5 8.8 V21.5" fill="none" stroke="#9a9a9a" stroke-width="1.1"/><path d="M15.5 12.8 Q13 10 13.4 8.6 A2.2 2.2 0 0 1 17.6 8.6 Q18 10 15.5 12.8 Z" fill="#fff"/></svg></div>
<div class="a" style="left:396px;top:12px;width:36px;height:31px;background:#8c8c8c;border-radius:5px"><svg width="36" height="31" style="position:absolute;left:0;top:0"><path d="M14 10 H23 M14 10 L16.5 8 M14 10 L16.5 12 M13 21 H22 M22 21 L19.5 19 M22 21 L19.5 23" stroke="#c8c8c8" stroke-width="1.3" fill="none"/><rect x="11" y="13.6" width="3.6" height="3.6" fill="none" stroke="#fff" stroke-width="1.3"/><rect x="16.2" y="13.6" width="3.6" height="3.6" fill="none" stroke="#fff" stroke-width="1.3"/><rect x="21.4" y="13.6" width="3.6" height="3.6" fill="none" stroke="#fff" stroke-width="1.3"/></svg></div>
<div class="a" style="left:436px;top:12px;width:30px;height:31px;background:#8c8c8c;border-radius:5px"><svg width="30" height="31" style="position:absolute;left:0;top:0"><path d="M14.5 7.3 V22.8 M6.5 15 H21.5" stroke="#fff" stroke-width="1.9"/></svg></div>
<div class="a" style="left:470px;top:12px;width:30px;height:31px;background:#8c8c8c;border-radius:5px"><svg width="30" height="31" style="position:absolute;left:0;top:0"><path d="M7.4 14.5 Q6.3 14.5 6.3 15.6 V22.2 Q6.3 23.9 8 23.9 H14.2 Q15.3 23.9 15.3 22.8" stroke="#fff" stroke-width="2" fill="none" stroke-linecap="round"/><rect x="10.6" y="5" width="13.2" height="13.2" rx="2.6" fill="#fff"/></svg></div>
<div class="a" style="left:504px;top:12px;width:30px;height:31px;background:#8c8c8c;border-radius:5px"><svg width="30" height="31" style="position:absolute;left:0;top:0"><path d="M6.7 7.6 Q6.7 6.4 7.9 6.4 H10.5 A2 2 0 0 1 14.5 6.4 H15.5 Q16.7 6.4 16.7 7.6 V9 H13.5 V22.2 H7.9 Q6.7 22.2 6.7 21 Z" fill="#fff"/><circle cx="12.5" cy="6.4" r="0.9" fill="#8c8c8c"/><path d="M14.3 9.6 H20.5 L24.2 13.3 V23.3 Q24.2 24.3 23.2 24.3 H15.3 Q14.3 24.3 14.3 23.3 Z" fill="#fff" stroke="#8c8c8c" stroke-width="0.8"/><path d="M20.5 9.6 V13.3 H24.2" fill="#ddd" stroke="#999" stroke-width="0.6"/></svg></div>
<div class="a" style="left:1060px;top:0;width:8px;height:898px;background:rgba(0,0,0,0.35)"></div>
<div class="a" style="left:1060px;top:388px;width:8px;height:253px;background:rgba(130,130,130,0.75);border-radius:4px"></div>
<div class="a" style="left:284px;top:891px;width:288px;height:7px;background:rgba(130,130,130,0.75);border-radius:4px"></div>
<div class="a" style="left:936.3px;top:807.4px;width:119.5px;height:79.4px;background:rgba(70,70,70,0.5);border-radius:5px"><svg width="120" height="80" style="position:absolute;left:0;top:0"><path d="M3 12.5 V3 H12.3" stroke="#8a8a8a" stroke-width="1.6" fill="none"/><circle cx="7.2" cy="7.1" r="0.8" fill="#777"/><rect x="39.8" y="36" width="22.9" height="18.4" fill="rgba(255,255,255,0.05)" stroke="#5a5a5a" stroke-width="0.8"/><rect x="46.3" y="24" width="1.2" height="1" fill="#aaa"/><rect x="51" y="23.8" width="0.8" height="1.3" fill="#aaa"/><g stroke="#16e016" stroke-width="1.3" fill="none" stroke-linecap="round"><path d="M46 41 L43.3 43 L45.3 44.9"/><path d="M45.3 41.8 Q53 41.5 61.5 43.3 M45.3 44 Q53 43 61.5 42.6"/><path d="M53 42.6 L47.2 48 L53 51.9"/><path d="M42.2 48.8 L45.3 52.2"/><path d="M55.7 32.5 L54.6 36.8"/><path d="M63.9 48.3 H78.6" stroke-width="1.6"/><path d="M65 47 Q70 45.5 74 47"/></g><circle cx="51.5" cy="35.4" r="0.9" fill="#16e016"/><path d="M56.9 39.9 L67 45.7 M70 45.5 L73 44.5 L76 46" stroke="#d8d8d8" stroke-width="0.8" fill="none"/><path d="M66.9 37.9 Q71 34.5 76.2 36.8" stroke="#1818f0" stroke-width="1.5" fill="none"/><path d="M70.5 35.2 L75.5 36.3" stroke="#ddd" stroke-width="0.6"/><path d="M54.6 53.4 L58.4 51.1" stroke="#1818f0" stroke-width="1.2"/><path d="M56 50.8 H58 M60 51 H61.8" stroke="#ddd" stroke-width="0.8"/><path d="M48.4 50 V53" stroke="#ddd" stroke-width="0.8"/></svg></div>
</div>
</div></body></html>
